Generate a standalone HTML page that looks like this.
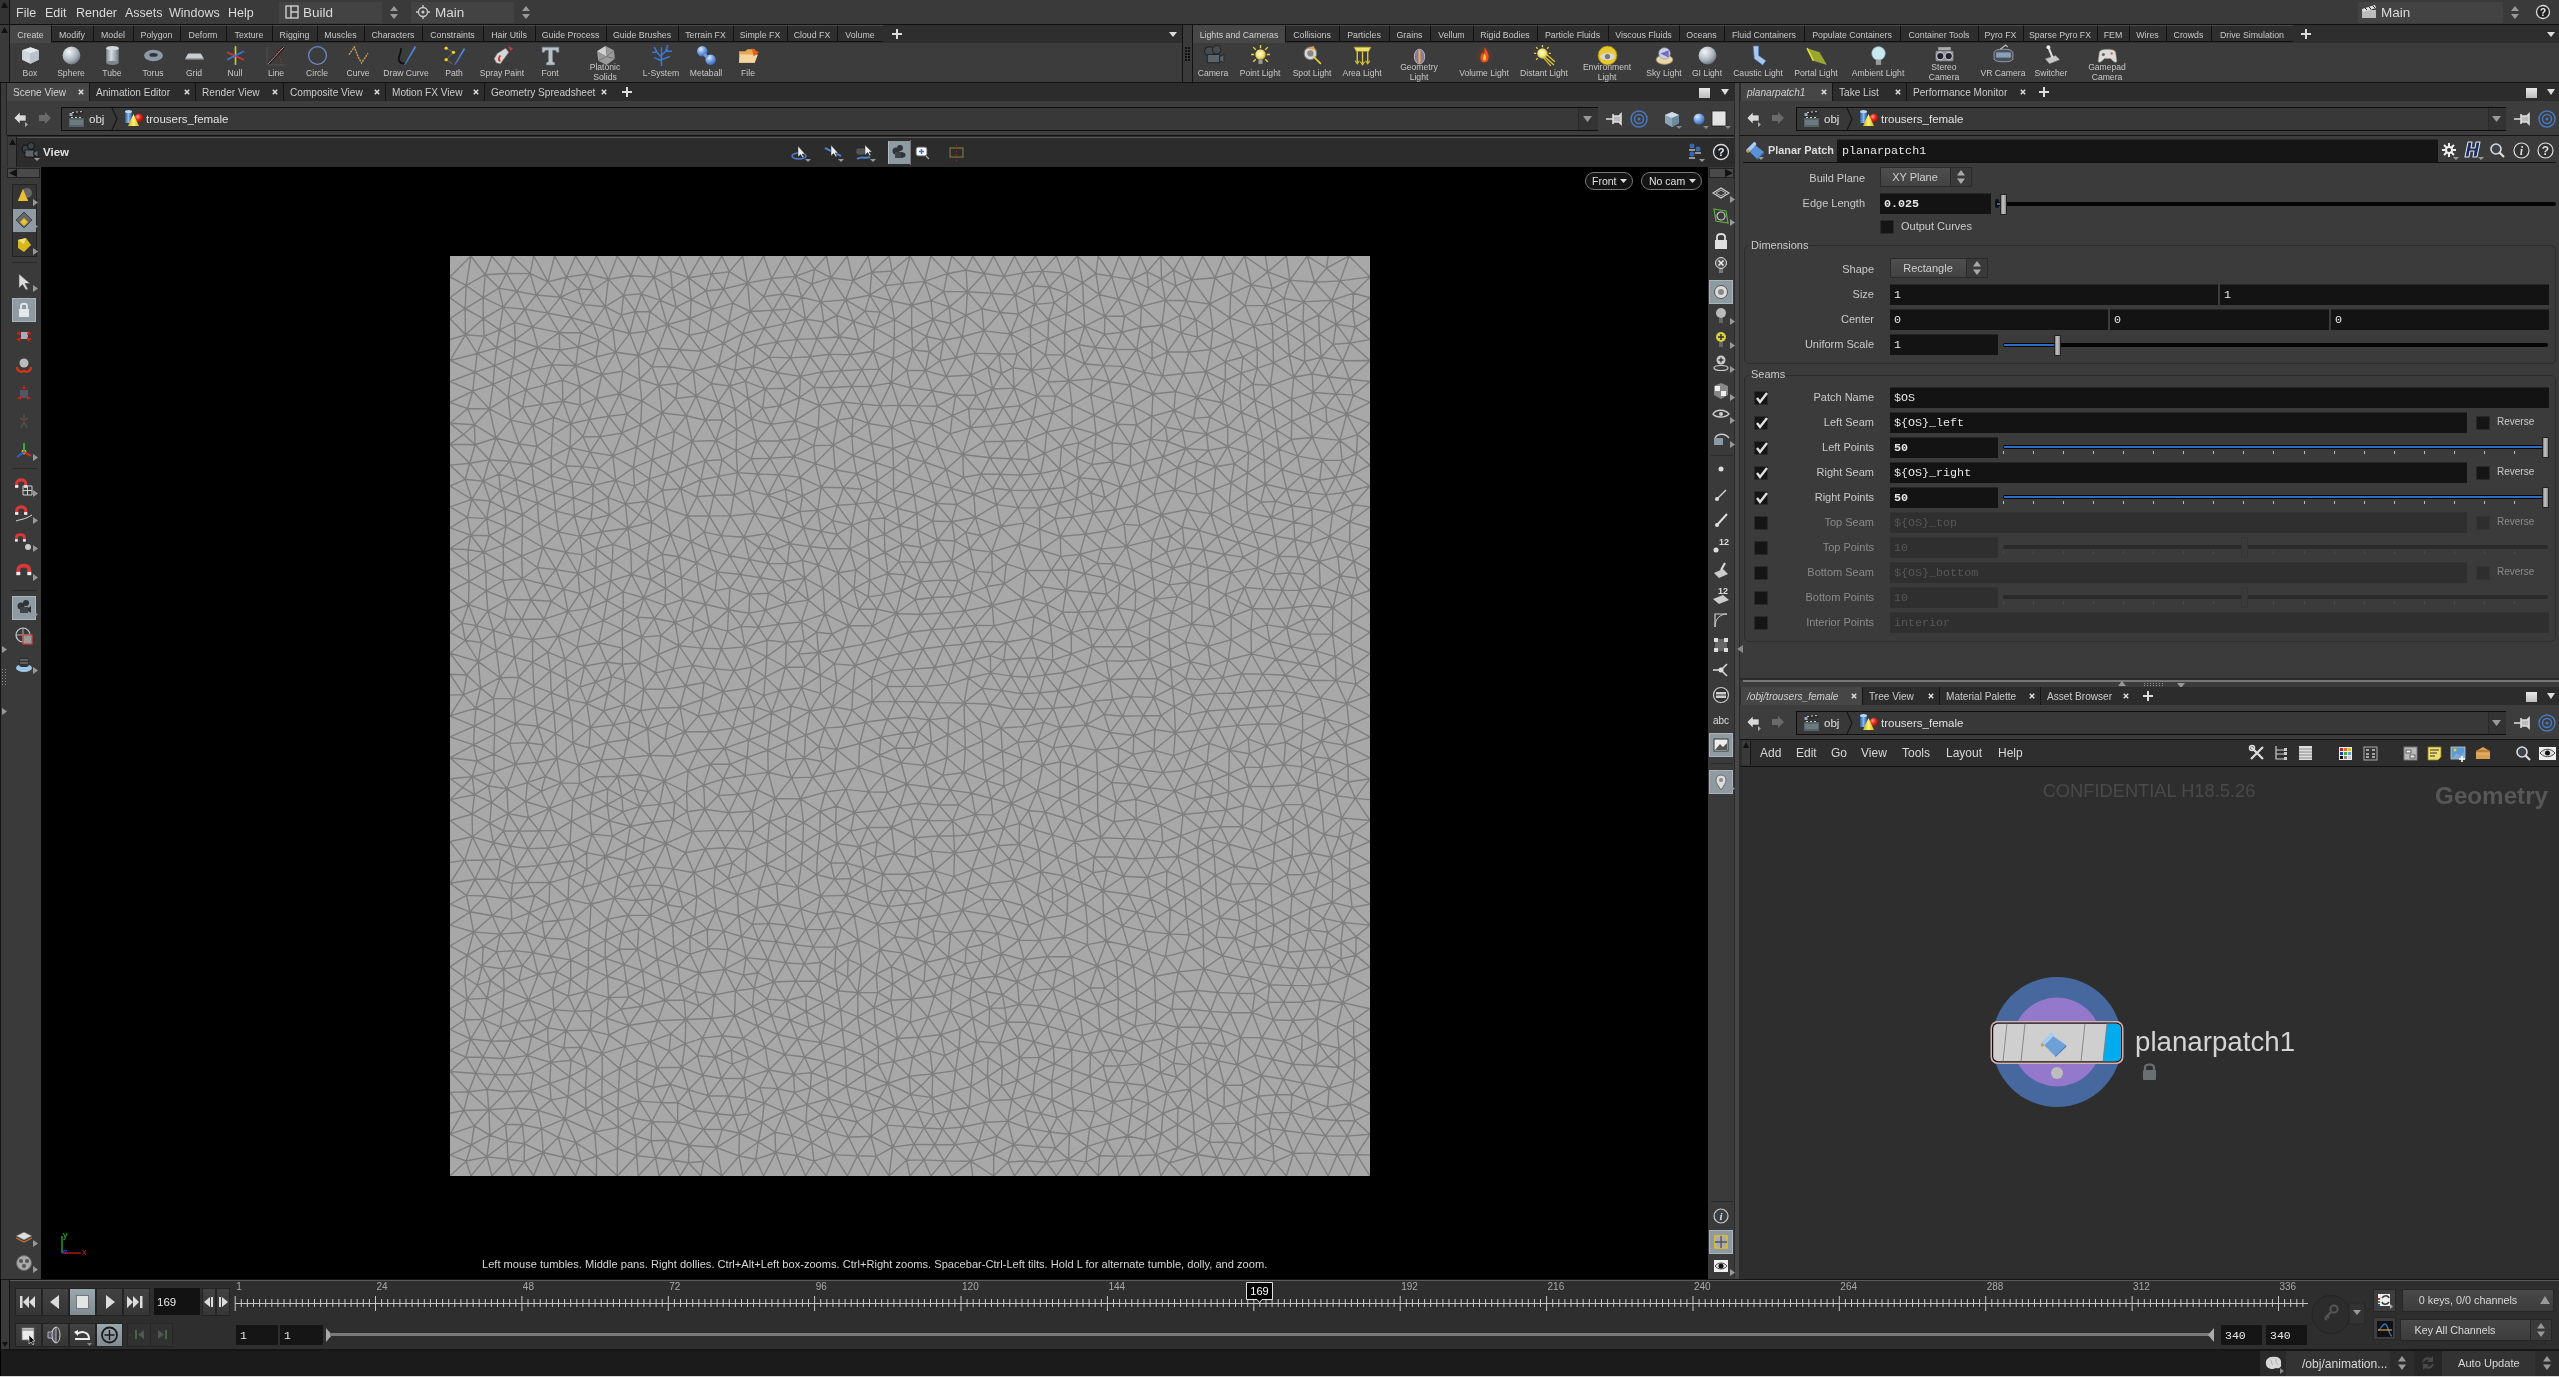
<!DOCTYPE html>
<html><head><meta charset="utf-8"><style>
html,body{margin:0;padding:0}
body{width:2559px;height:1377px;overflow:hidden;background:#3a3a3a;position:relative;font-family:"Liberation Sans",sans-serif}
.a{position:absolute}
.t{position:absolute;white-space:nowrap;font-family:"Liberation Sans",sans-serif}
.m{font-family:"Liberation Mono",monospace}
svg{position:absolute;overflow:visible}
#root{position:absolute;left:0;top:0;width:2559px;height:1377px;will-change:transform}
</style></head><body><div id="root">
<svg width="0" height="0" style="position:absolute"><defs>
<radialGradient id="gs" cx="0.35" cy="0.3" r="0.8"><stop offset="0" stop-color="#f4f6f8"/><stop offset="0.6" stop-color="#a9b3bd"/><stop offset="1" stop-color="#5d6670"/></radialGradient>
<radialGradient id="gb" cx="0.35" cy="0.3" r="0.8"><stop offset="0" stop-color="#dfeaff"/><stop offset="0.5" stop-color="#6f9ee0"/><stop offset="1" stop-color="#2f5ca8"/></radialGradient>
<radialGradient id="gy" cx="0.45" cy="0.45" r="0.6"><stop offset="0" stop-color="#fffde0"/><stop offset="0.6" stop-color="#efe070"/><stop offset="1" stop-color="#b09a20"/></radialGradient>
<linearGradient id="gc" x1="0" x2="1"><stop offset="0" stop-color="#7d8892"/><stop offset="0.4" stop-color="#d8dde2"/><stop offset="1" stop-color="#6e7780"/></linearGradient>
</defs></svg><div class="a" style="left:0px;top:0px;width:2559px;height:24px;background:#3a3a3a"></div><div class="a" style="left:0px;top:0px;width:9px;height:24px;background:#333"></div><div class="a" style="left:9px;top:0px;width:1px;height:24px;background:#111"></div><svg style="left:1px;top:2px" width="7" height="6"><path d="M3.5 0L7 6H0Z" fill="#111"/></svg><div class="t" style="left:16px;top:4.5px;height:17px;line-height:17px;font-size:12.5px;color:#dadada;">File</div><div class="t" style="left:45px;top:4.5px;height:17px;line-height:17px;font-size:12.5px;color:#dadada;">Edit</div><div class="t" style="left:76px;top:4.5px;height:17px;line-height:17px;font-size:12.5px;color:#dadada;">Render</div><div class="t" style="left:125px;top:4.5px;height:17px;line-height:17px;font-size:12.5px;color:#dadada;">Assets</div><div class="t" style="left:169px;top:4.5px;height:17px;line-height:17px;font-size:12.5px;color:#dadada;">Windows</div><div class="t" style="left:228px;top:4.5px;height:17px;line-height:17px;font-size:12.5px;color:#dadada;">Help</div><div class="a" style="left:279px;top:2px;width:126px;height:21px;background:#434343"></div><div class="a" style="left:382px;top:2px;width:23px;height:21px;background:#3a3a3a"></div><svg style="left:390px;top:6px" width="8" height="13"><path d="M4 0L8 5H0ZM4 13L8 8H0Z" fill="#999"/></svg><div class="t" style="left:303px;top:3.5px;height:18px;line-height:18px;font-size:13.5px;color:#dadada;">Build</div><svg style="left:285px;top:5px" width="14" height="14"><rect x="1" y="1" width="12" height="12" fill="none" stroke="#ccc" stroke-width="1.4"/><path d="M6 1V13M6 7H13" stroke="#ccc" stroke-width="1.4"/></svg><div class="a" style="left:411px;top:2px;width:126px;height:21px;background:#434343"></div><div class="a" style="left:514px;top:2px;width:23px;height:21px;background:#3a3a3a"></div><svg style="left:522px;top:6px" width="8" height="13"><path d="M4 0L8 5H0ZM4 13L8 8H0Z" fill="#999"/></svg><div class="t" style="left:435px;top:3.5px;height:18px;line-height:18px;font-size:13.5px;color:#dadada;">Main</div><svg style="left:416px;top:5px" width="14" height="14"><circle cx="7" cy="7" r="4.5" fill="none" stroke="#ccc" stroke-width="1.3"/><circle cx="7" cy="7" r="1.5" fill="#ccc"/><path d="M7 0V3M7 11V14M0 7H3M11 7H14" stroke="#ccc" stroke-width="1.3"/></svg><div class="a" style="left:2358px;top:2px;width:168px;height:21px;background:#434343"></div><div class="a" style="left:2503px;top:2px;width:23px;height:21px;background:#3a3a3a"></div><svg style="left:2511px;top:6px" width="8" height="13"><path d="M4 0L8 5H0ZM4 13L8 8H0Z" fill="#999"/></svg><div class="t" style="left:2381px;top:3.5px;height:18px;line-height:18px;font-size:13.5px;color:#dadada;">Main</div><svg style="left:2361px;top:4px" width="16" height="15"><rect x="1" y="6" width="14" height="8" fill="#bbb"/><path d="M1 5L14 1L15 4L2 8Z" fill="#ddd"/><path d="M4 4L6 6M8 3L10 5M12 2L14 4" stroke="#333" stroke-width="1"/></svg><svg style="left:2535px;top:4px" width="16" height="16"><circle cx="8" cy="8" r="6.5" fill="#222" stroke="#ddd" stroke-width="1.3"/><text x="8" y="12" font-size="10" font-weight="bold" fill="#eee" text-anchor="middle" font-family="Liberation Sans">?</text></svg><div class="a" style="left:0px;top:24px;width:2559px;height:1px;background:#111"></div><div class="a" style="left:0px;top:25px;width:2559px;height:57px;background:#3c3c3c"></div><div class="a" style="left:0px;top:25px;width:9px;height:57px;background:#3a3a3a"></div><div class="a" style="left:9px;top:25px;width:1px;height:57px;background:#111"></div><svg style="left:1px;top:27px" width="7" height="6"><path d="M3.5 0L7 6H0Z" fill="#111"/></svg><div class="a" style="left:10px;top:25px;width:1172px;height:18px;background:#2e2e2e"></div><div class="a" style="left:10px;top:25px;width:41px;height:18px;background:#474747"></div><div class="t" style="left:-69.5px;width:200px;text-align:center;top:29.0px;height:12px;line-height:12px;font-size:8.8px;color:#d0d0d0;">Create</div><div class="a" style="left:51px;top:25px;width:42px;height:17px;background:#2e2e2e;border-left:1px solid #111;border-top:1px solid #4a4a4a;border-bottom:1px solid #111;box-sizing:border-box"></div><div class="t" style="left:-28.0px;width:200px;text-align:center;top:29.0px;height:12px;line-height:12px;font-size:8.8px;color:#c8c8c8;">Modify</div><div class="a" style="left:93px;top:25px;width:40px;height:17px;background:#2e2e2e;border-left:1px solid #111;border-top:1px solid #4a4a4a;border-bottom:1px solid #111;box-sizing:border-box"></div><div class="t" style="left:13.0px;width:200px;text-align:center;top:29.0px;height:12px;line-height:12px;font-size:8.8px;color:#c8c8c8;">Model</div><div class="a" style="left:133px;top:25px;width:47px;height:17px;background:#2e2e2e;border-left:1px solid #111;border-top:1px solid #4a4a4a;border-bottom:1px solid #111;box-sizing:border-box"></div><div class="t" style="left:56.5px;width:200px;text-align:center;top:29.0px;height:12px;line-height:12px;font-size:8.8px;color:#c8c8c8;">Polygon</div><div class="a" style="left:180px;top:25px;width:46px;height:17px;background:#2e2e2e;border-left:1px solid #111;border-top:1px solid #4a4a4a;border-bottom:1px solid #111;box-sizing:border-box"></div><div class="t" style="left:103.0px;width:200px;text-align:center;top:29.0px;height:12px;line-height:12px;font-size:8.8px;color:#c8c8c8;">Deform</div><div class="a" style="left:226px;top:25px;width:46px;height:17px;background:#2e2e2e;border-left:1px solid #111;border-top:1px solid #4a4a4a;border-bottom:1px solid #111;box-sizing:border-box"></div><div class="t" style="left:149.0px;width:200px;text-align:center;top:29.0px;height:12px;line-height:12px;font-size:8.8px;color:#c8c8c8;">Texture</div><div class="a" style="left:272px;top:25px;width:45px;height:17px;background:#2e2e2e;border-left:1px solid #111;border-top:1px solid #4a4a4a;border-bottom:1px solid #111;box-sizing:border-box"></div><div class="t" style="left:194.5px;width:200px;text-align:center;top:29.0px;height:12px;line-height:12px;font-size:8.8px;color:#c8c8c8;">Rigging</div><div class="a" style="left:317px;top:25px;width:47px;height:17px;background:#2e2e2e;border-left:1px solid #111;border-top:1px solid #4a4a4a;border-bottom:1px solid #111;box-sizing:border-box"></div><div class="t" style="left:240.5px;width:200px;text-align:center;top:29.0px;height:12px;line-height:12px;font-size:8.8px;color:#c8c8c8;">Muscles</div><div class="a" style="left:364px;top:25px;width:58px;height:17px;background:#2e2e2e;border-left:1px solid #111;border-top:1px solid #4a4a4a;border-bottom:1px solid #111;box-sizing:border-box"></div><div class="t" style="left:293.0px;width:200px;text-align:center;top:29.0px;height:12px;line-height:12px;font-size:8.8px;color:#c8c8c8;">Characters</div><div class="a" style="left:422px;top:25px;width:61px;height:17px;background:#2e2e2e;border-left:1px solid #111;border-top:1px solid #4a4a4a;border-bottom:1px solid #111;box-sizing:border-box"></div><div class="t" style="left:352.5px;width:200px;text-align:center;top:29.0px;height:12px;line-height:12px;font-size:8.8px;color:#c8c8c8;">Constraints</div><div class="a" style="left:483px;top:25px;width:52px;height:17px;background:#2e2e2e;border-left:1px solid #111;border-top:1px solid #4a4a4a;border-bottom:1px solid #111;box-sizing:border-box"></div><div class="t" style="left:409.0px;width:200px;text-align:center;top:29.0px;height:12px;line-height:12px;font-size:8.8px;color:#c8c8c8;">Hair Utils</div><div class="a" style="left:535px;top:25px;width:71px;height:17px;background:#2e2e2e;border-left:1px solid #111;border-top:1px solid #4a4a4a;border-bottom:1px solid #111;box-sizing:border-box"></div><div class="t" style="left:470.5px;width:200px;text-align:center;top:29.0px;height:12px;line-height:12px;font-size:8.8px;color:#c8c8c8;">Guide Process</div><div class="a" style="left:606px;top:25px;width:72px;height:17px;background:#2e2e2e;border-left:1px solid #111;border-top:1px solid #4a4a4a;border-bottom:1px solid #111;box-sizing:border-box"></div><div class="t" style="left:542.0px;width:200px;text-align:center;top:29.0px;height:12px;line-height:12px;font-size:8.8px;color:#c8c8c8;">Guide Brushes</div><div class="a" style="left:678px;top:25px;width:55px;height:17px;background:#2e2e2e;border-left:1px solid #111;border-top:1px solid #4a4a4a;border-bottom:1px solid #111;box-sizing:border-box"></div><div class="t" style="left:605.5px;width:200px;text-align:center;top:29.0px;height:12px;line-height:12px;font-size:8.8px;color:#c8c8c8;">Terrain FX</div><div class="a" style="left:733px;top:25px;width:54px;height:17px;background:#2e2e2e;border-left:1px solid #111;border-top:1px solid #4a4a4a;border-bottom:1px solid #111;box-sizing:border-box"></div><div class="t" style="left:660.0px;width:200px;text-align:center;top:29.0px;height:12px;line-height:12px;font-size:8.8px;color:#c8c8c8;">Simple FX</div><div class="a" style="left:787px;top:25px;width:50px;height:17px;background:#2e2e2e;border-left:1px solid #111;border-top:1px solid #4a4a4a;border-bottom:1px solid #111;box-sizing:border-box"></div><div class="t" style="left:712.0px;width:200px;text-align:center;top:29.0px;height:12px;line-height:12px;font-size:8.8px;color:#c8c8c8;">Cloud FX</div><div class="a" style="left:837px;top:25px;width:46px;height:17px;background:#2e2e2e;border-left:1px solid #111;border-top:1px solid #4a4a4a;border-bottom:1px solid #111;box-sizing:border-box"></div><div class="t" style="left:760.0px;width:200px;text-align:center;top:29.0px;height:12px;line-height:12px;font-size:8.8px;color:#c8c8c8;">Volume</div><svg style="left:892px;top:29px" width="10" height="10"><path d="M5 0V10M0 5H10" stroke="#ddd" stroke-width="2"/></svg><svg style="left:1169px;top:32px" width="8" height="5"><path d="M0 0H8L4 5Z" fill="#ddd"/></svg><div class="a" style="left:1182px;top:25px;width:1px;height:57px;background:#111"></div><div class="a" style="left:1183px;top:25px;width:9px;height:57px;background:#3a3a3a"></div><svg style="left:1184px;top:46px" width="7" height="16"><rect x="1" y="1" width="2" height="2" fill="#111"/><rect x="1" y="4" width="2" height="2" fill="#111"/><rect x="1" y="7" width="2" height="2" fill="#111"/><rect x="1" y="10" width="2" height="2" fill="#111"/><rect x="1" y="13" width="2" height="2" fill="#111"/><rect x="4" y="1" width="2" height="2" fill="#111"/><rect x="4" y="4" width="2" height="2" fill="#111"/><rect x="4" y="7" width="2" height="2" fill="#111"/><rect x="4" y="10" width="2" height="2" fill="#111"/><rect x="4" y="13" width="2" height="2" fill="#111"/></svg><div class="a" style="left:1192px;top:25px;width:1px;height:57px;background:#111"></div><div class="a" style="left:1193px;top:25px;width:1366px;height:18px;background:#2e2e2e"></div><div class="a" style="left:1193px;top:25px;width:92px;height:18px;background:#474747"></div><div class="t" style="left:1139.0px;width:200px;text-align:center;top:29.0px;height:12px;line-height:12px;font-size:8.8px;color:#d0d0d0;">Lights and Cameras</div><div class="a" style="left:1285px;top:25px;width:54px;height:17px;background:#2e2e2e;border-left:1px solid #111;border-top:1px solid #4a4a4a;border-bottom:1px solid #111;box-sizing:border-box"></div><div class="t" style="left:1212.0px;width:200px;text-align:center;top:29.0px;height:12px;line-height:12px;font-size:8.8px;color:#c8c8c8;">Collisions</div><div class="a" style="left:1339px;top:25px;width:50px;height:17px;background:#2e2e2e;border-left:1px solid #111;border-top:1px solid #4a4a4a;border-bottom:1px solid #111;box-sizing:border-box"></div><div class="t" style="left:1264.0px;width:200px;text-align:center;top:29.0px;height:12px;line-height:12px;font-size:8.8px;color:#c8c8c8;">Particles</div><div class="a" style="left:1389px;top:25px;width:41px;height:17px;background:#2e2e2e;border-left:1px solid #111;border-top:1px solid #4a4a4a;border-bottom:1px solid #111;box-sizing:border-box"></div><div class="t" style="left:1309.5px;width:200px;text-align:center;top:29.0px;height:12px;line-height:12px;font-size:8.8px;color:#c8c8c8;">Grains</div><div class="a" style="left:1430px;top:25px;width:43px;height:17px;background:#2e2e2e;border-left:1px solid #111;border-top:1px solid #4a4a4a;border-bottom:1px solid #111;box-sizing:border-box"></div><div class="t" style="left:1351.5px;width:200px;text-align:center;top:29.0px;height:12px;line-height:12px;font-size:8.8px;color:#c8c8c8;">Vellum</div><div class="a" style="left:1473px;top:25px;width:64px;height:17px;background:#2e2e2e;border-left:1px solid #111;border-top:1px solid #4a4a4a;border-bottom:1px solid #111;box-sizing:border-box"></div><div class="t" style="left:1405.0px;width:200px;text-align:center;top:29.0px;height:12px;line-height:12px;font-size:8.8px;color:#c8c8c8;">Rigid Bodies</div><div class="a" style="left:1537px;top:25px;width:71px;height:17px;background:#2e2e2e;border-left:1px solid #111;border-top:1px solid #4a4a4a;border-bottom:1px solid #111;box-sizing:border-box"></div><div class="t" style="left:1472.5px;width:200px;text-align:center;top:29.0px;height:12px;line-height:12px;font-size:8.8px;color:#c8c8c8;">Particle Fluids</div><div class="a" style="left:1608px;top:25px;width:71px;height:17px;background:#2e2e2e;border-left:1px solid #111;border-top:1px solid #4a4a4a;border-bottom:1px solid #111;box-sizing:border-box"></div><div class="t" style="left:1543.5px;width:200px;text-align:center;top:29.0px;height:12px;line-height:12px;font-size:8.8px;color:#c8c8c8;">Viscous Fluids</div><div class="a" style="left:1679px;top:25px;width:45px;height:17px;background:#2e2e2e;border-left:1px solid #111;border-top:1px solid #4a4a4a;border-bottom:1px solid #111;box-sizing:border-box"></div><div class="t" style="left:1601.5px;width:200px;text-align:center;top:29.0px;height:12px;line-height:12px;font-size:8.8px;color:#c8c8c8;">Oceans</div><div class="a" style="left:1724px;top:25px;width:80px;height:17px;background:#2e2e2e;border-left:1px solid #111;border-top:1px solid #4a4a4a;border-bottom:1px solid #111;box-sizing:border-box"></div><div class="t" style="left:1664.0px;width:200px;text-align:center;top:29.0px;height:12px;line-height:12px;font-size:8.8px;color:#c8c8c8;">Fluid Containers</div><div class="a" style="left:1804px;top:25px;width:96px;height:17px;background:#2e2e2e;border-left:1px solid #111;border-top:1px solid #4a4a4a;border-bottom:1px solid #111;box-sizing:border-box"></div><div class="t" style="left:1752.0px;width:200px;text-align:center;top:29.0px;height:12px;line-height:12px;font-size:8.8px;color:#c8c8c8;">Populate Containers</div><div class="a" style="left:1900px;top:25px;width:78px;height:17px;background:#2e2e2e;border-left:1px solid #111;border-top:1px solid #4a4a4a;border-bottom:1px solid #111;box-sizing:border-box"></div><div class="t" style="left:1839.0px;width:200px;text-align:center;top:29.0px;height:12px;line-height:12px;font-size:8.8px;color:#c8c8c8;">Container Tools</div><div class="a" style="left:1978px;top:25px;width:45px;height:17px;background:#2e2e2e;border-left:1px solid #111;border-top:1px solid #4a4a4a;border-bottom:1px solid #111;box-sizing:border-box"></div><div class="t" style="left:1900.5px;width:200px;text-align:center;top:29.0px;height:12px;line-height:12px;font-size:8.8px;color:#c8c8c8;">Pyro FX</div><div class="a" style="left:2023px;top:25px;width:74px;height:17px;background:#2e2e2e;border-left:1px solid #111;border-top:1px solid #4a4a4a;border-bottom:1px solid #111;box-sizing:border-box"></div><div class="t" style="left:1960.0px;width:200px;text-align:center;top:29.0px;height:12px;line-height:12px;font-size:8.8px;color:#c8c8c8;">Sparse Pyro FX</div><div class="a" style="left:2097px;top:25px;width:32px;height:17px;background:#2e2e2e;border-left:1px solid #111;border-top:1px solid #4a4a4a;border-bottom:1px solid #111;box-sizing:border-box"></div><div class="t" style="left:2013.0px;width:200px;text-align:center;top:29.0px;height:12px;line-height:12px;font-size:8.8px;color:#c8c8c8;">FEM</div><div class="a" style="left:2129px;top:25px;width:37px;height:17px;background:#2e2e2e;border-left:1px solid #111;border-top:1px solid #4a4a4a;border-bottom:1px solid #111;box-sizing:border-box"></div><div class="t" style="left:2047.5px;width:200px;text-align:center;top:29.0px;height:12px;line-height:12px;font-size:8.8px;color:#c8c8c8;">Wires</div><div class="a" style="left:2166px;top:25px;width:45px;height:17px;background:#2e2e2e;border-left:1px solid #111;border-top:1px solid #4a4a4a;border-bottom:1px solid #111;box-sizing:border-box"></div><div class="t" style="left:2088.5px;width:200px;text-align:center;top:29.0px;height:12px;line-height:12px;font-size:8.8px;color:#c8c8c8;">Crowds</div><div class="a" style="left:2211px;top:25px;width:82px;height:17px;background:#2e2e2e;border-left:1px solid #111;border-top:1px solid #4a4a4a;border-bottom:1px solid #111;box-sizing:border-box"></div><div class="t" style="left:2152.0px;width:200px;text-align:center;top:29.0px;height:12px;line-height:12px;font-size:8.8px;color:#c8c8c8;">Drive Simulation</div><svg style="left:2301px;top:29px" width="10" height="10"><path d="M5 0V10M0 5H10" stroke="#ddd" stroke-width="2"/></svg><svg style="left:2547px;top:32px" width="8" height="5"><path d="M0 0H8L4 5Z" fill="#ddd"/></svg><svg style="left:18.5px;top:43.5px" width="23" height="23" viewBox="0 0 22 22"><path d="M3 6L11 3L19 6L19 15L11 19L3 15Z" fill="#9aa4ae"/><path d="M3 6L11 3L19 6L11 9Z" fill="#e6eaee"/><path d="M11 9L19 6L19 15L11 19Z" fill="#b9c2ca"/><path d="M3 6L11 9L11 19L3 15Z" fill="#d0d6dc"/></svg><div class="t" style="left:-70.0px;width:200px;text-align:center;top:66.5px;height:12px;line-height:12px;font-size:8.6px;color:#c8c8c8;">Box</div><svg style="left:59.5px;top:43.5px" width="23" height="23" viewBox="0 0 22 22"><circle cx="11" cy="11" r="8.5" fill="url(#gs)"/></svg><div class="t" style="left:-29.0px;width:200px;text-align:center;top:66.5px;height:12px;line-height:12px;font-size:8.6px;color:#c8c8c8;">Sphere</div><svg style="left:100.5px;top:43.5px" width="23" height="23" viewBox="0 0 22 22"><rect x="5" y="4" width="12" height="14" fill="url(#gc)"/><ellipse cx="11" cy="18" rx="6" ry="2" fill="#7c858e"/><ellipse cx="11" cy="4" rx="6" ry="2.2" fill="#cfd6dc"/></svg><div class="t" style="left:12.0px;width:200px;text-align:center;top:66.5px;height:12px;line-height:12px;font-size:8.6px;color:#c8c8c8;">Tube</div><svg style="left:141.5px;top:43.5px" width="23" height="23" viewBox="0 0 22 22"><ellipse cx="11" cy="11" rx="9" ry="5.5" fill="#8c98a4"/><ellipse cx="11" cy="10.5" rx="4" ry="1.8" fill="#2f3438"/></svg><div class="t" style="left:53.0px;width:200px;text-align:center;top:66.5px;height:12px;line-height:12px;font-size:8.6px;color:#c8c8c8;">Torus</div><svg style="left:182.5px;top:43.5px" width="23" height="23" viewBox="0 0 22 22"><path d="M5 9H17L20 14H2Z" fill="#c8cdd2"/><path d="M2 14H20V15H2Z" fill="#8a9096"/></svg><div class="t" style="left:94.0px;width:200px;text-align:center;top:66.5px;height:12px;line-height:12px;font-size:8.6px;color:#c8c8c8;">Grid</div><svg style="left:223.5px;top:43.5px" width="23" height="23" viewBox="0 0 22 22"><path d="M11 2V20" stroke="#c8c830" stroke-width="1.6"/><path d="M3 8L19 15" stroke="#e03030" stroke-width="1.6"/><path d="M3 15L19 7" stroke="#3a78d8" stroke-width="1.6"/></svg><div class="t" style="left:135.0px;width:200px;text-align:center;top:66.5px;height:12px;line-height:12px;font-size:8.6px;color:#c8c8c8;">Null</div><svg style="left:264.5px;top:43.5px" width="23" height="23" viewBox="0 0 22 22"><path d="M3 19L18 3" stroke="#111" stroke-width="2.5"/><path d="M3 19L18 3" stroke="#ccc" stroke-width="0.8"/><path d="M4 17L16 4M14 12L16 19" stroke="#d03030" stroke-width="1" stroke-dasharray="1 1.5"/><path d="M2 3V20H20" stroke="#555" stroke-width="0.8" fill="none"/></svg><div class="t" style="left:176.0px;width:200px;text-align:center;top:66.5px;height:12px;line-height:12px;font-size:8.6px;color:#c8c8c8;">Line</div><svg style="left:305.5px;top:43.5px" width="23" height="23" viewBox="0 0 22 22"><circle cx="11" cy="11" r="8.5" fill="none" stroke="#6a8ac8" stroke-width="1.2"/></svg><div class="t" style="left:217.0px;width:200px;text-align:center;top:66.5px;height:12px;line-height:12px;font-size:8.6px;color:#c8c8c8;">Circle</div><svg style="left:346.5px;top:43.5px" width="23" height="23" viewBox="0 0 22 22"><path d="M2 10L7 3L11 13L14 18L20 9" stroke="#e0a030" stroke-width="1.4" stroke-dasharray="1.5 1.2" fill="none"/><path d="M2 10L7 3L11 13L14 18L20 9" stroke="#999" stroke-width="0.5" fill="none"/></svg><div class="t" style="left:258.0px;width:200px;text-align:center;top:66.5px;height:12px;line-height:12px;font-size:8.6px;color:#c8c8c8;">Curve</div><svg style="left:394.5px;top:43.5px" width="23" height="23" viewBox="0 0 22 22"><path d="M5 4C8 6 2 12 4 16S9 18 9 19" stroke="#111" stroke-width="1.8" fill="none"/><path d="M19 2L10 18L9 20L11 18L20 3Z" fill="#6a9ee8" stroke="#3b6cb8" stroke-width="0.6"/></svg><div class="t" style="left:306.0px;width:200px;text-align:center;top:66.5px;height:12px;line-height:12px;font-size:8.6px;color:#c8c8c8;">Draw Curve</div><svg style="left:442.5px;top:43.5px" width="23" height="23" viewBox="0 0 22 22"><path d="M3 4L10 8L3 15L9 19" stroke="#777" stroke-width="0.8" fill="none"/><circle cx="3" cy="4" r="1.6" fill="#f0d020"/><circle cx="10" cy="8" r="1.6" fill="#f0d020"/><circle cx="3" cy="15" r="1.6" fill="#f0d020"/><path d="M20 4L12 18L11 20L13 18L21 5Z" fill="#6a9ee8" stroke="#3b6cb8" stroke-width="0.6"/></svg><div class="t" style="left:354.0px;width:200px;text-align:center;top:66.5px;height:12px;line-height:12px;font-size:8.6px;color:#c8c8c8;">Path</div><svg style="left:490.5px;top:43.5px" width="23" height="23" viewBox="0 0 22 22"><path d="M6 9L14 4L17 8L9 19L5 18L3 14Z" fill="#d6d6d6" stroke="#777" stroke-width="0.6"/><path d="M9 11C7 13 7 16 9 16" stroke="#d02020" stroke-width="1.6" fill="none"/><path d="M16 2L21 4L19 7Z" fill="#e04040" opacity="0.8"/></svg><div class="t" style="left:402.0px;width:200px;text-align:center;top:66.5px;height:12px;line-height:12px;font-size:8.6px;color:#c8c8c8;">Spray Paint</div><svg style="left:538.5px;top:43.5px" width="23" height="23" viewBox="0 0 22 22"><path d="M3 3H19V8H17L16 6H13V17L15 18V20H7V18L9 17V6H6L5 8H3Z" fill="#b8c0c8" stroke="#79818a" stroke-width="0.6"/></svg><div class="t" style="left:450.0px;width:200px;text-align:center;top:66.5px;height:12px;line-height:12px;font-size:8.6px;color:#c8c8c8;">Font</div><svg style="left:593.5px;top:43.5px" width="23" height="23" viewBox="0 0 22 22"><path d="M11 2L19 6L20 14L12 20L4 16L3 7Z" fill="#9a9a9a"/><path d="M11 2L12 12L19 6M12 12L20 14M12 12L4 16M12 12L3 7" stroke="#666" stroke-width="0.7" fill="none"/><path d="M3 7L11 2L12 12Z" fill="#d0d0d0"/></svg><div class="t" style="left:565px;width:80px;top:62px;text-align:center;font-size:8.6px;line-height:10px;color:#c8c8c8">Platonic<br>Solids</div><svg style="left:649.5px;top:43.5px" width="23" height="23" viewBox="0 0 22 22"><path d="M11 21V10M11 13L5 6M11 11L17 5M7 8L4 3M7 8L2 8M15 7L17 1M15 7L21 7M11 10L11 3M11 16L4 13M11 15L19 12" stroke="#3b7ad0" stroke-width="1.4" fill="none"/></svg><div class="t" style="left:561.0px;width:200px;text-align:center;top:66.5px;height:12px;line-height:12px;font-size:8.6px;color:#c8c8c8;">L-System</div><svg style="left:694.5px;top:43.5px" width="23" height="23" viewBox="0 0 22 22"><circle cx="7" cy="7" r="5" fill="url(#gb)"/><circle cx="15" cy="15" r="5" fill="url(#gb)"/><path d="M9 10L12 13" stroke="#6f9ee0" stroke-width="3"/></svg><div class="t" style="left:606.0px;width:200px;text-align:center;top:66.5px;height:12px;line-height:12px;font-size:8.6px;color:#c8c8c8;">Metaball</div><svg style="left:736.5px;top:43.5px" width="23" height="23" viewBox="0 0 22 22"><path d="M2 7H8L10 5H17V18H2Z" fill="#e8a850"/><path d="M3 10H20L17 18H2Z" fill="#f5d6a0"/><path d="M14 4L21 8L16 12Z" fill="#e86020"/></svg><div class="t" style="left:648.0px;width:200px;text-align:center;top:66.5px;height:12px;line-height:12px;font-size:8.6px;color:#c8c8c8;">File</div><svg style="left:1201.5px;top:43.5px" width="23" height="23" viewBox="0 0 22 22"><circle cx="7" cy="7" r="4.5" fill="#444c52" stroke="#222" stroke-width="1"/><circle cx="14" cy="5.5" r="4" fill="#444c52" stroke="#222" stroke-width="1"/><rect x="5" y="10" width="12" height="8" rx="1" fill="#59636b" stroke="#222"/><path d="M17 12L21 10V18L17 16Z" fill="#59636b" stroke="#222" stroke-width="0.8"/></svg><div class="t" style="left:1113.0px;width:200px;text-align:center;top:66.5px;height:12px;line-height:12px;font-size:8.6px;color:#c8c8c8;">Camera</div><svg style="left:1248.5px;top:43.5px" width="23" height="23" viewBox="0 0 22 22"><circle cx="11" cy="10" r="5" fill="url(#gy)"/><rect x="9" y="15" width="4" height="4" fill="#999"/><path d="M11 1V4M2 10H5M17 10H20M4 3L6.5 5.5M18 3L15.5 5.5M4 17L6.5 14.5M18 17L15.5 14.5" stroke="#e8d040" stroke-width="1.3"/></svg><div class="t" style="left:1160.0px;width:200px;text-align:center;top:66.5px;height:12px;line-height:12px;font-size:8.6px;color:#c8c8c8;">Point Light</div><svg style="left:1300.5px;top:43.5px" width="23" height="23" viewBox="0 0 22 22"><circle cx="9" cy="9" r="6" fill="#d8d8d8" stroke="#777" stroke-width="1"/><path d="M6 4L12 2L14 6" fill="#e8a040"/><path d="M11 11L19 19" stroke="#e8d040" stroke-width="1.6"/><circle cx="9" cy="9" r="3" fill="#888"/></svg><div class="t" style="left:1212.0px;width:200px;text-align:center;top:66.5px;height:12px;line-height:12px;font-size:8.6px;color:#c8c8c8;">Spot Light</div><svg style="left:1350.5px;top:43.5px" width="23" height="23" viewBox="0 0 22 22"><path d="M3 3H19L17 7H5Z" fill="#f0e070" stroke="#b09a20" stroke-width="0.6"/><path d="M6 7V18M11 7V19M16 7V18" stroke="#e0c830" stroke-width="1.3"/><path d="M4 16L6 19L8 16M9 17L11 20L13 17M14 16L16 19L18 16" stroke="#e0c830" stroke-width="1" fill="none"/></svg><div class="t" style="left:1262.0px;width:200px;text-align:center;top:66.5px;height:12px;line-height:12px;font-size:8.6px;color:#c8c8c8;">Area Light</div><svg style="left:1407.5px;top:43.5px" width="23" height="23" viewBox="0 0 22 22"><ellipse cx="11" cy="12" rx="5" ry="7" fill="#8a7a9a"/><path d="M11 6V18" stroke="#e0b040" stroke-width="2"/><ellipse cx="11" cy="12" rx="5" ry="7" fill="none" stroke="#c8c0d0" stroke-width="0.8"/></svg><div class="t" style="left:1379px;width:80px;top:62px;text-align:center;font-size:8.6px;line-height:10px;color:#c8c8c8">Geometry<br>Light</div><svg style="left:1472.5px;top:43.5px" width="23" height="23" viewBox="0 0 22 22"><circle cx="11" cy="11" r="8" fill="#5a3a30" opacity="0.6"/><path d="M11 3C15 8 16 12 14 16C12 18 9 18 8 16C6 13 8 10 9 8C10 10 11 11 11 3Z" fill="#f05020"/><path d="M11 9C13 12 13 15 11 16C9 15 10 12 11 9Z" fill="#ffd040"/></svg><div class="t" style="left:1384.0px;width:200px;text-align:center;top:66.5px;height:12px;line-height:12px;font-size:8.6px;color:#c8c8c8;">Volume Light</div><svg style="left:1532.5px;top:43.5px" width="23" height="23" viewBox="0 0 22 22"><circle cx="9" cy="9" r="5" fill="url(#gy)"/><path d="M9 1V3M1 9H3M15 9H17M3 3L4.5 4.5M15 3L13.5 4.5M3 15L4.5 13.5" stroke="#e8d040" stroke-width="1.2"/><path d="M11 12L20 20M13 10L21 17M10 13L17 21" stroke="#e0c830" stroke-width="1.2"/></svg><div class="t" style="left:1444.0px;width:200px;text-align:center;top:66.5px;height:12px;line-height:12px;font-size:8.6px;color:#c8c8c8;">Distant Light</div><svg style="left:1595.5px;top:43.5px" width="23" height="23" viewBox="0 0 22 22"><circle cx="11" cy="11" r="9" fill="#e8c830" stroke="#a08a10" stroke-width="0.8"/><ellipse cx="11" cy="12" rx="7" ry="3.5" fill="#d8d8d8"/><circle cx="11" cy="12" r="2.5" fill="#777"/></svg><div class="t" style="left:1567px;width:80px;top:62px;text-align:center;font-size:8.6px;line-height:10px;color:#c8c8c8">Environment<br>Light</div><svg style="left:1652.5px;top:43.5px" width="23" height="23" viewBox="0 0 22 22"><ellipse cx="11" cy="15" rx="8" ry="4.5" fill="#e8d8a8" stroke="#988a58" stroke-width="0.8"/><circle cx="11" cy="9" r="5.5" fill="#c8d0e8" stroke="#8890a8" stroke-width="0.6"/><path d="M7 9L15 6L15 13Z" fill="#7a68b8"/></svg><div class="t" style="left:1564.0px;width:200px;text-align:center;top:66.5px;height:12px;line-height:12px;font-size:8.6px;color:#c8c8c8;">Sky Light</div><svg style="left:1695.5px;top:43.5px" width="23" height="23" viewBox="0 0 22 22"><circle cx="11" cy="11" r="8.5" fill="url(#gs)"/></svg><div class="t" style="left:1607.0px;width:200px;text-align:center;top:66.5px;height:12px;line-height:12px;font-size:8.6px;color:#c8c8c8;">GI Light</div><svg style="left:1746.5px;top:43.5px" width="23" height="23" viewBox="0 0 22 22"><path d="M6 2H11V11L18 16L15 20L7 14Z" fill="#a8c8f0" stroke="#5888c0" stroke-width="0.7"/></svg><div class="t" style="left:1658.0px;width:200px;text-align:center;top:66.5px;height:12px;line-height:12px;font-size:8.6px;color:#c8c8c8;">Caustic Light</div><svg style="left:1804.5px;top:43.5px" width="23" height="23" viewBox="0 0 22 22"><path d="M2 4L14 8L21 20L8 16Z" fill="#a8b830" opacity="0.85"/><path d="M2 4L8 16" stroke="#e8e030" stroke-width="1.5"/></svg><div class="t" style="left:1716.0px;width:200px;text-align:center;top:66.5px;height:12px;line-height:12px;font-size:8.6px;color:#c8c8c8;">Portal Light</div><svg style="left:1866.5px;top:43.5px" width="23" height="23" viewBox="0 0 22 22"><circle cx="11" cy="9" r="6.5" fill="#c8e8f0" stroke="#80a0b0" stroke-width="0.6"/><rect x="8.5" y="15" width="5" height="5" fill="#999"/></svg><div class="t" style="left:1778.0px;width:200px;text-align:center;top:66.5px;height:12px;line-height:12px;font-size:8.6px;color:#c8c8c8;">Ambient Light</div><svg style="left:1932.5px;top:43.5px" width="23" height="23" viewBox="0 0 22 22"><rect x="2" y="6" width="18" height="11" rx="2" fill="#8a9298" stroke="#333" stroke-width="0.8"/><circle cx="7" cy="11.5" r="3.5" fill="#223" stroke="#ccc" stroke-width="1"/><circle cx="15" cy="11.5" r="3.5" fill="#223" stroke="#ccc" stroke-width="1"/><rect x="5" y="3" width="12" height="3" fill="#aaa"/></svg><div class="t" style="left:1904px;width:80px;top:62px;text-align:center;font-size:8.6px;line-height:10px;color:#c8c8c8">Stereo<br>Camera</div><svg style="left:1991.5px;top:43.5px" width="23" height="23" viewBox="0 0 22 22"><path d="M2 9C2 6 5 5 11 5S20 6 20 9V14C20 16 17 17 11 17S2 16 2 14Z" fill="#4a5058" stroke="#aab" stroke-width="0.8"/><path d="M4 8H18V13H4Z" fill="#8aa0b8"/><path d="M8 5L13 1L15 3" stroke="#bbb" stroke-width="1.2" fill="none"/></svg><div class="t" style="left:1903.0px;width:200px;text-align:center;top:66.5px;height:12px;line-height:12px;font-size:8.6px;color:#c8c8c8;">VR Camera</div><svg style="left:2039.5px;top:43.5px" width="23" height="23" viewBox="0 0 22 22"><path d="M5 14L15 11L19 15L9 19Z" fill="#c8c8c8" stroke="#777" stroke-width="0.6"/><path d="M12 13L8 3" stroke="#ddd" stroke-width="2"/><circle cx="8" cy="3" r="1.8" fill="#eee"/></svg><div class="t" style="left:1951.0px;width:200px;text-align:center;top:66.5px;height:12px;line-height:12px;font-size:8.6px;color:#c8c8c8;">Switcher</div><svg style="left:2095.5px;top:43.5px" width="23" height="23" viewBox="0 0 22 22"><path d="M3 9C3 6 6 5 11 5S19 6 19 9L20 16C20 18 18 18 16 16L14 14H8L6 16C4 18 2 18 2 16Z" fill="#dcdcdc" stroke="#777" stroke-width="0.6"/><circle cx="15" cy="9" r="1.2" fill="#e07030"/><circle cx="7" cy="10" r="1.5" fill="#666"/></svg><div class="t" style="left:2067px;width:80px;top:62px;text-align:center;font-size:8.6px;line-height:10px;color:#c8c8c8">Gamepad<br>Camera</div><div class="a" style="left:0px;top:82px;width:2559px;height:1px;background:#111"></div><div class="a" style="left:0px;top:83px;width:1734px;height:18px;background:#2c2c2c"></div><div class="a" style="left:0px;top:83px;width:1px;height:1196px;background:#151515"></div><div class="a" style="left:1px;top:83px;width:6px;height:1196px;background:#3a3a3a"></div><div class="a" style="left:6px;top:83px;width:1px;height:52px;background:#222"></div><div class="a" style="left:7px;top:83px;width:82px;height:18px;background:#464646"></div><div class="t" style="left:13px;top:86.0px;height:14px;line-height:14px;font-size:10.1px;color:#d0d0d0;">Scene View</div><svg style="left:78px;top:89px" width="6" height="6"><path d="M0.8 0.8L5.2 5.2M5.2 0.8L0.8 5.2" stroke="#ddd" stroke-width="1.5"/></svg><div class="a" style="left:89px;top:83px;width:106px;height:18px;background:#2c2c2c;border-left:1px solid #151515;box-sizing:border-box"></div><div class="t" style="left:96px;top:86.0px;height:14px;line-height:14px;font-size:10.1px;color:#cccccc;">Animation Editor</div><svg style="left:184px;top:89px" width="6" height="6"><path d="M0.8 0.8L5.2 5.2M5.2 0.8L0.8 5.2" stroke="#ddd" stroke-width="1.5"/></svg><div class="a" style="left:195px;top:83px;width:88px;height:18px;background:#2c2c2c;border-left:1px solid #151515;box-sizing:border-box"></div><div class="t" style="left:202px;top:86.0px;height:14px;line-height:14px;font-size:10.1px;color:#cccccc;">Render View</div><svg style="left:272px;top:89px" width="6" height="6"><path d="M0.8 0.8L5.2 5.2M5.2 0.8L0.8 5.2" stroke="#ddd" stroke-width="1.5"/></svg><div class="a" style="left:283px;top:83px;width:102px;height:18px;background:#2c2c2c;border-left:1px solid #151515;box-sizing:border-box"></div><div class="t" style="left:290px;top:86.0px;height:14px;line-height:14px;font-size:10.1px;color:#cccccc;">Composite View</div><svg style="left:374px;top:89px" width="6" height="6"><path d="M0.8 0.8L5.2 5.2M5.2 0.8L0.8 5.2" stroke="#ddd" stroke-width="1.5"/></svg><div class="a" style="left:385px;top:83px;width:99px;height:18px;background:#2c2c2c;border-left:1px solid #151515;box-sizing:border-box"></div><div class="t" style="left:392px;top:86.0px;height:14px;line-height:14px;font-size:10.1px;color:#cccccc;">Motion FX View</div><svg style="left:473px;top:89px" width="6" height="6"><path d="M0.8 0.8L5.2 5.2M5.2 0.8L0.8 5.2" stroke="#ddd" stroke-width="1.5"/></svg><div class="a" style="left:484px;top:83px;width:128px;height:18px;background:#2c2c2c;border-left:1px solid #151515;box-sizing:border-box"></div><div class="t" style="left:491px;top:86.0px;height:14px;line-height:14px;font-size:10.1px;color:#cccccc;">Geometry Spreadsheet</div><svg style="left:601px;top:89px" width="6" height="6"><path d="M0.8 0.8L5.2 5.2M5.2 0.8L0.8 5.2" stroke="#ddd" stroke-width="1.5"/></svg><svg style="left:622px;top:87px" width="10" height="10"><path d="M5 0V10M0 5H10" stroke="#ddd" stroke-width="2"/></svg><div class="a" style="left:1699px;top:88px;width:11px;height:10px;background:linear-gradient(#e8e8e8,#bdbdbd)"></div><svg style="left:1721px;top:89px" width="8" height="6"><path d="M0 0H8L4 6Z" fill="#ddd"/></svg><div class="a" style="left:7px;top:101px;width:1727px;height:34px;background:#3d3d3d"></div><svg style="left:13px;top:111px" width="18" height="17"><path d="M1 7L7 1V4H13V10H7V13Z" fill="#d8d8d8" stroke="#333" stroke-width="0.6"/><path d="M12 11L15 13.5L12 16Z" fill="#aaa"/></svg><svg style="left:38px;top:111px" width="14" height="14"><path d="M13 7L7 1V4H1V10H7V13Z" fill="#6a6a6a"/></svg><div class="a" style="left:61px;top:107px;width:1537px;height:24px;background:#383838;border:1px solid #0e0e0e;box-sizing:border-box"></div><svg style="left:68px;top:110px" width="17" height="18"><rect x="1" y="8" width="15" height="9" fill="#56646a"/><rect x="2" y="10" width="13" height="5" fill="#7a8a90" opacity="0.6"/><path d="M1 3L15 1L15.5 4L1.5 6Z" fill="#2a2a2a"/><path d="M1 7H16V8H1Z" fill="#2a2a2a"/><path d="M4 2.5H6M8 2H10M12 1.7H14M3 7.5H5M7 7.5H9M11 7.5H13" stroke="#ccc" stroke-width="1"/><rect x="1.5" y="3" width="3" height="3" fill="#9ab"/></svg><div class="t" style="left:89px;top:111.0px;height:16px;line-height:16px;font-size:11.5px;color:#e0e0e0;">obj</div><svg style="left:111px;top:108px" width="8" height="22"><path d="M1 0L6 11L1 22" stroke="#151515" stroke-width="1.2" fill="none"/></svg><svg style="left:124px;top:109px" width="20" height="19"><defs><linearGradient id="tc61101" x1="0" x2="1"><stop offset="0" stop-color="#2a5a98"/><stop offset="0.5" stop-color="#8ab8e8"/><stop offset="1" stop-color="#2a5a98"/></linearGradient><radialGradient id="ts61101" cx="0.35" cy="0.35" r="0.7"><stop offset="0" stop-color="#ff9a8a"/><stop offset="0.5" stop-color="#e02818"/><stop offset="1" stop-color="#901008"/></radialGradient><linearGradient id="tk61101" x1="0" x2="1"><stop offset="0" stop-color="#c8b010"/><stop offset="0.5" stop-color="#fff070"/><stop offset="1" stop-color="#d0b820"/></linearGradient></defs><rect x="1" y="2" width="7" height="12" fill="url(#tc61101)"/><ellipse cx="4.5" cy="2.5" rx="3.5" ry="1.6" fill="#b8d8f8"/><circle cx="15" cy="9" r="4.3" fill="url(#ts61101)"/><path d="M9.5 5L15 17H4Z" fill="url(#tk61101)"/></svg><div class="t" style="left:146px;top:111.0px;height:16px;line-height:16px;font-size:11.5px;color:#e0e0e0;">trousers_female</div><div class="a" style="left:1578px;top:108px;width:19px;height:22px;background:#333;border-left:1px solid #2a2a2a"></div><svg style="left:1583px;top:116px" width="9" height="6"><path d="M0 0H9L4.5 6Z" fill="#999"/></svg><svg style="left:1604px;top:111px" width="22" height="16"><path d="M2 8H9M9 3V13M9 5H15L17 3V13L15 11H9" stroke="#ddd" stroke-width="1.6" fill="#bbb"/></svg><svg style="left:1629px;top:109px" width="20" height="20"><circle cx="10" cy="10" r="8" fill="none" stroke="#4a78c0" stroke-width="1.5"/><circle cx="10" cy="10" r="4.5" fill="none" stroke="#4a78c0" stroke-width="1.5"/><circle cx="10" cy="10" r="1.5" fill="#4a78c0"/></svg><svg style="left:1663px;top:110px" width="20" height="20"><path d="M2 5L9 2L16 5V13L9 17L2 13Z" fill="#8ca4b8"/><path d="M2 5L9 2L16 5L9 8Z" fill="#d0dde8"/><path d="M9 8L16 5V13L9 17Z" fill="#6f889c"/><path d="M13 16H19L16 19Z" fill="#888"/></svg><svg style="left:1690px;top:110px" width="20" height="20"><circle cx="9" cy="9" r="5.5" fill="url(#gb)"/><path d="M13 16H19L16 19Z" fill="#888"/></svg><svg style="left:1711px;top:110px" width="22" height="21"><rect x="1" y="1" width="14" height="15" fill="#e2e2e2" stroke="#222" stroke-width="0.8"/><path d="M14 16H20L17 19Z" fill="#888"/></svg><div class="a" style="left:7px;top:135px;width:1727px;height:1px;background:#111"></div><div class="a" style="left:7px;top:136px;width:1727px;height:31px;background:#2c2c2c"></div><div class="a" style="left:17px;top:137px;width:1717px;height:1px;background:#555"></div><div class="a" style="left:8px;top:137px;width:8px;height:30px;background:#3d3d3d;border-right:1px solid #1a1a1a"></div><svg style="left:9px;top:139px" width="7" height="6"><path d="M3.5 0L7 6H0Z" fill="#111"/></svg><svg style="left:20px;top:142px" width="22" height="20"><circle cx="6" cy="7" r="4" fill="#3c4448" stroke="#111" stroke-width="1"/><circle cx="11" cy="4" r="3.5" fill="#3c4448" stroke="#111" stroke-width="1"/><rect x="5" y="8" width="9" height="7" fill="#5a646a" stroke="#111" stroke-width="0.8"/><path d="M14 10L18 8V15L14 13Z" fill="#5a646a" stroke="#111" stroke-width="0.7"/><path d="M14 16H20L17 19Z" fill="#999"/></svg><div class="t" style="left:43px;top:144.0px;height:16px;line-height:16px;font-size:11.5px;color:#e0e0e0;"><b>View</b></div><svg style="left:790px;top:144px" width="24" height="20"><ellipse cx="9" cy="12" rx="7" ry="3" fill="none" stroke="#4a80d0" stroke-width="1.6"/><path d="M8 2L8 13L10.5 10.5L13 14L14 13L12 10L15 10Z" fill="#eee" stroke="#333" stroke-width="0.5"/><path d="M15 15H21L18 18Z" fill="#999"/></svg><svg style="left:823px;top:144px" width="24" height="20"><path d="M2 4L18 12" stroke="#4a80d0" stroke-width="2"/><path d="M8 1L8 12L10.5 9.5L13 13L14 12L12 9L15 9Z" fill="#eee" stroke="#333" stroke-width="0.5"/><path d="M15 15H21L18 18Z" fill="#999"/></svg><svg style="left:855px;top:144px" width="24" height="20"><rect x="1" y="4" width="11" height="7" rx="2" fill="#555" stroke="#222" stroke-width="0.6"/><path d="M2 15C6 12 10 15 15 13" stroke="#4a80d0" stroke-width="2" fill="none"/><path d="M10 1L10 11L12.5 8.5L15 12L16 11L14 8L17 8Z" fill="#eee" stroke="#333" stroke-width="0.5"/><path d="M15 15H21L18 18Z" fill="#999"/></svg><div class="a" style="left:888px;top:141px;width:21px;height:23px;background:#8e9ba3;border-left:1px solid #b0bcc3"></div><svg style="left:889px;top:143px" width="20" height="20"><circle cx="7" cy="8" r="3.5" fill="#2e3438"/><circle cx="11" cy="5" r="3" fill="#2e3438"/><rect x="6" y="9" width="8" height="6" fill="#3c4448"/><circle cx="14" cy="12" r="2.5" fill="#2e3438"/></svg><div class="a" style="left:910px;top:140px;width:1px;height:25px;background:#777"></div><svg style="left:914px;top:145px" width="20" height="18"><rect x="2" y="2" width="11" height="9" rx="2" fill="#fff" stroke="#555" stroke-width="1"/><path d="M7.5 4V9M5 6.5H10" stroke="#3a78d0" stroke-width="1.6"/><path d="M12 11L15 14" stroke="#aaa" stroke-width="1.3"/></svg><svg style="left:948px;top:144px" width="18" height="18"><rect x="2" y="4" width="13" height="9" fill="none" stroke="#9a8a40" stroke-width="0.9"/><path d="M8.5 1V17" stroke="#c03030" stroke-width="0.8" stroke-dasharray="1 2"/></svg><svg style="left:1687px;top:142px" width="22" height="22"><circle cx="5" cy="4" r="2.5" fill="#3a68b0"/><path d="M2 8H8" stroke="#ddd" stroke-width="1.2"/><circle cx="11" cy="7" r="2.5" fill="#3a68b0"/><path d="M8 11H14" stroke="#ddd" stroke-width="1.2"/><circle cx="5" cy="12" r="2.5" fill="#3a68b0"/><path d="M2 16H8" stroke="#ddd" stroke-width="1.2"/><path d="M12 17H18L15 20Z" fill="#999"/></svg><svg style="left:1712px;top:143px" width="18" height="18"><circle cx="9" cy="9" r="7.5" fill="#1e2226" stroke="#ddd" stroke-width="1.3"/><text x="9" y="13" font-size="11" font-weight="bold" fill="#eee" text-anchor="middle" font-family="Liberation Sans">?</text></svg><div class="a" style="left:41px;top:167px;width:1667px;height:1112px;background:#000"></div><div class="a" style="left:7px;top:167px;width:34px;height:1112px;background:#3a3a3a"></div><div class="a" style="left:1708px;top:167px;width:26px;height:1112px;background:#3a3a3a"></div><svg style="left:450px;top:256px;overflow:hidden" width="920" height="920" viewBox="0 0 920 920"><rect width="920" height="920" fill="#a8a8a8"/><path d="M886.2 68.2L881.7 44.3 864.6 26.2 839.9 24.1 817.8 15.9 801.2 28.8 795 49.6 779.7 61.8 759.6 48 736.3 44.8 746 63.9 747.6 81.1 738.8 96 756 115.7 760.6 93.5 738.8 96 717.5 95.8 712.6 120 702.9 138 683.3 150.6 666.9 168.3 644.1 159.4 622 149 619 125 614.5 98.8 614.7 76.5 598.6 63.8 598 82.8 614.5 98.8 595.4 98.9 598 82.8 614.7 76.5 616.3 57.7 598.6 63.8 580.4 70.1 598 82.8 580.6 89.7 595.4 98.9 602 111.9 614.5 98.8 629.1 88.7 614.7 76.5 634.7 70.2 654.5 78.2 671.9 76.3 686.7 93.5 701.9 85.2 711.8 69 717.5 95.8 701.9 85.2 702.2 102.8 686.7 93.5 665 93.4 654.5 78.2 654.8 60.4 668.3 43.1 661.8 20.4 645.9 17.7 632.7 26.6 649.2 38.5 661.8 20.4 681.6 23.6 690 0 697.1 15.9 710.9 0 723.5 14.2 741.9 23.7 736.3 44.8 715.3 44.2 711.8 69 690.4 71.5 686.7 93.5 694 116.5 712.6 120 725.5 135.6 702.9 138 701.9 160.3 683.3 150.6 680.1 129.3 702.9 138 724 154.3 701.9 160.3 715.3 171.1 732.1 174.2 756.5 178.1 743.7 162.4 732.1 174.2 724 154.3 743.7 162.4 760 161 756.5 178.1 777.6 170.5 791.3 156.4 804.8 144.4 823.1 152.4 826.3 174 841.8 165.1 862.4 181.3 847.6 200.2 851.6 219.5 831.9 213.6 847.6 200.2 828.8 193.1 826.3 174 841.4 183.4 847.6 200.2 872.2 204.4 885.5 221.5 894.3 236.5 920 230 903 218.1 894.3 236.5 903.1 248.8 920 230M886.2 68.2L869.3 78 852.9 66.4 854.6 87.7 854.6 105.5 862.1 118 871.2 101.2 892.7 104.8 899.4 123.3 885.7 138 875.8 150.9 859.4 157.7 862.4 181.3 841.4 183.4 841.8 165.1 823.1 152.4 841.6 143.1 841.8 165.1 859.4 157.7 841.6 143.1 820.4 129.5 823.1 152.4 808.6 163.7 826.3 174 812.7 184.4 828.8 193.1 831.9 213.6 836.7 233.2 851.6 219.5 872.2 204.4 862.4 181.3 889.9 184.4 907.4 178.6 920 167.3 896.7 158.2 875.8 150.9 876.9 167.1 862.4 181.3M886.2 68.2L900.1 87 892.7 104.8 883.2 88.3 886.2 68.2 905.1 71.1 900.1 87 920 83.6 905.1 71.1 920 62.7 902.6 53.9 886.2 68.2 868.7 59.1 881.7 44.3 903.5 37.2 920 20.9 890.1 24.9 864.6 26.2 857.3 0 839.9 24.1 822.2 32.7 801.2 28.8 794.5 0 817.8 15.9 822.2 32.7 815.8 49.5 801.2 28.8 780.7 37.6 795 49.6 803.8 69.9 807.2 92.7 823 85.6 822.3 67.5 835.9 58.1 852.9 66.4 837.8 77 822.3 67.5 803.8 69.9 823 85.6 839.3 99.2 837.8 77 854.6 87.7 869.3 78 871.2 101.2 854.6 105.5 839.3 99.2 854.6 87.7 871.2 101.2 883.2 88.3 869.3 78 868.7 59.1 852.9 66.4 853.8 45.9 864.6 26.2 876.5 12.2 857.3 0M404.5 556.7L395.9 533.4 408.6 511.5 429.4 499.3 445.5 492 431 481.1 415.4 466.3 394.2 470.7 382.6 450.8 386.9 426.3 384.5 407.9 405.3 409.5 386.9 426.3 370.6 437.4 359.9 455.2 355.6 479.3 337 486.4 339.2 467.4 355.6 479.3 368.8 490.6 372.1 505.5 362.4 521.1 341.6 521.9 325.1 542.5 319.4 565.7 317.8 585.5 303.9 575.6 319.4 565.7 336.3 559.6 325.1 542.5 350.5 543 341.6 521.9 335.4 504 337 486.4 317.8 494.3 297 501.5 274.5 492.2 260.2 508.3 253.7 529.1 236.5 536.2 238.1 514.8 253.7 529.1 254.8 553.3 236.5 536.2 237.3 555.7 223.2 564 202.9 566.3 189.8 550.4 198.3 535.6 214.2 525.2 236.5 536.2 224.7 546 237.3 555.7 254.8 553.3 278.8 556.7 287.7 538.2 295 519.4 297 501.5 280.1 508.1 274.5 492.2 247.7 494.3 238.1 514.8 260.2 508.3 247.7 494.3 224.3 500.2 238.1 514.8 214.2 525.2 199.8 499.3 197.6 472.9 217.8 466.9 230 451.2 252.2 443.5 268.3 456.7 282.9 472.1 274.5 492.2 298.6 484 297 501.5 318.2 516.3 325.1 542.5 307.7 534 287.7 538.2 268.4 539.6 253.7 529.1 273.4 522.8 287.7 538.2 302.2 555 325.1 542.5M404.5 556.7L417.9 571.4 427 585.3 441.5 571.5 450 549.9 456.8 528 480 531.4 469.2 547 450 549.9 437.5 536.3 456.8 528 469.2 547 460.9 563.1 450 549.9 428.9 554.3 437.5 536.3 418.7 535.9 395.9 533.4 375.3 536.1 370.3 555.5 350.5 543 336.3 559.6 353.5 566.7 370.3 555.5 369.8 576.7 387.2 587.6 367.6 596.8 369.8 576.7 353.5 566.7 350.5 543 362.4 521.1 375.3 536.1 350.5 543M404.5 556.7L428.9 554.3 441.5 571.5 444.7 597.2 432.9 618.1 415.7 629 401.2 622.5 396.3 639.2 415.7 629 430.8 635.8 432.9 618.1 446.5 633.8 456.2 648.5 450.3 665.4 427.6 668.3 408.4 684 385.9 691.1 391.5 671.6 384.1 655.3 370.7 640.1 347.9 631.6 351.4 608.1 367.6 596.8 366.4 618.4 370.7 640.1 396.3 639.2 384.1 655.3 404.1 659.1 427.6 668.3 438.4 650.6 456.2 648.5 469.3 662.2 450.3 665.4 438.4 650.6 430.8 635.8 446.5 633.8 438.4 650.6 418.8 647.1 427.6 668.3 444.9 680.5 450.3 665.4 466.9 683.2 482.9 674.6 485.4 689.4 475.6 706.5 458 717.9 441.3 710.6 442.8 728.2 458 717.9 461.9 743 484.2 740 489.5 721.2 505.1 717.9 522 723.6 530.9 704.9 516.2 691.9 515.2 707.7 505.1 717.9 498.4 701.3 516.2 691.9 532.9 688.5 530.9 704.9 551.3 698 559.3 712.1 574.2 703.7 597.2 700.6 606.5 713.4 621.5 700.7 647.2 710.1 654.8 731.8 668.3 742.9 668 761.9 685.1 770.1 671.6 780 668 761.9 649.8 774.1 630.5 761.1 616.5 775.4 597.7 770.1 589.2 750 569.3 748.4 552.4 738.7 535.8 735.5 522 723.6 515.2 707.7 530.9 704.9 545.6 720 552.4 738.7 567.2 725.7 569.3 748.4 577.8 766.2 589.2 750 602.9 732.6 606.5 713.4 587.1 717.8 597.2 700.6 621.5 700.7 614.2 680.9 637.4 669.2 635.5 648.1 617.8 639 602.1 631.8 591 615.8 564.8 624.4 559.1 602.9 543.2 608.9 529 593.8 535.9 575.3 543 559.1 541.1 542.2 521.6 537.3 513.7 516.4 515.4 492.3 532.7 485 552.3 495.3 553.7 514 536.4 524.6 513.7 516.4 500.4 534.1 521.6 537.3 536.4 524.6 541.1 542.2 561.5 547.6 543 559.1 525.4 558.4 535.9 575.3 547.9 589.7 529 593.8 522 613.9 543.2 608.9 564.8 624.4 551.7 643.9 538.4 658.9 512.3 654.4 489 658.8 482.9 674.6 469.3 662.2 489 658.8 475.4 646.2 456.2 648.5 462.7 635.2 446.5 633.8 458.3 618.2 432.9 618.1 425.2 601.3 427 585.3 444.7 597.2 458.3 618.2 476.6 631.1 484.3 614.8 458.3 618.2 462.7 635.2 476.6 631.1 475.4 646.2 469.3 662.2 466.9 683.2 485.4 689.4 500.6 677.1 516.2 691.9 523.8 674.2 538.4 658.9 547.7 677.7 551.3 698 545.6 720 535.8 735.5 519.7 743 522.7 762.2 539 771.2 549.7 787.4 538 801.3 537.5 821.2 521.1 830.3 502.8 835.5 499.6 854.7 512.1 871 529 885.6 543.8 898.5 543.6 920 520.9 905.2 501.8 920 494.1 904.9 484.7 888.8 473.9 903.9 456.5 904.2 439.1 920 442.7 891.1 456.5 904.2 464 888.2 484.7 888.8 492.5 872.9 499.6 854.7 519.1 851.3 521.1 830.3 540.1 844.6 537.5 821.2 551.5 830 567 824.6 582.9 837.8 574.6 854.3 557.8 865.2 540.1 844.6 551.5 830 561.8 843.5 574.6 854.3 590.8 857.6 578.8 872.4 574.6 854.3M404.5 556.7L418.7 535.9 408.6 511.5 433.4 519.1 456.8 528 475.2 509.6 480 531.4 500.4 534.1 492.9 519.3 513.7 516.4 497 501.8 497.9 479 514.6 471.7 532.7 485 550.9 472.1 563.3 453.3 551.5 434.4 571.6 437.8 563.3 453.3 539.8 448.3 551.5 434.4 561.1 420.1 571.6 437.8 589.9 436.9 595.1 418.9 608.4 435 623.2 450.6 643.8 445.1 659.8 423.7 676.7 405.5 656.1 404.6 638.1 410.3 659.8 423.7 631.1 430.3 643.8 445.1 662.6 443.5 659.8 423.7 656.1 404.6 642.4 390.8 638.1 410.3 614.7 416.5 595.1 418.9 602.6 404.2 614.7 416.5 608.4 435 603.4 452.3 623.2 450.6 610.2 471.7 603.4 452.3 589.9 436.9 608.4 435 631.1 430.3 623.2 450.6 636 468.9 643.8 445.1 654.1 458.5 659.8 476.4 646.3 494.3 668.3 509.6 691.5 513.9 704 494.3 723.5 499.7 712.9 516.6 724.6 535.1 733 558.4 756.7 556.2 744.7 543.7 724.6 535.1 699.7 531.7 691.5 513.9 678.9 527.8 668.3 509.6 683.2 498.4 704 494.3 712.9 516.6 691.5 513.9 683.2 498.4 668.6 491.5 668.3 509.6 647.5 517.2 647.5 538.1 629.1 550.2 614.7 562 632.8 568.1 629.1 550.2 647.8 559 664.1 565.8 686.2 563 711.3 569.1 733 558.4 707.3 549.4 724.6 535.1 746.2 527.6 744.7 543.7 733 558.4 750.4 572.7 756.7 556.2 770.5 570.6 762.3 583.7 747.3 591.1 748.6 610 732.9 622.1 716.4 632.3 720.3 652.9 719.2 677.9 739.2 678.7 753.4 690.5 766.1 681.1 785.1 682.3 806.7 675.4 823.9 668.9 840.4 661 842.1 639.5 859.9 652.4 840.4 661 839.6 679.6 854.5 694.7 858.7 673.6 840.4 661 822 650 842.1 639.5 837 618.8 853.5 618.6 842.1 639.5 820.7 628.2 822 650 823.9 668.9 821.7 689.2 806.7 675.4 803.8 691.8 821.7 689.2 839.6 679.6 823.9 668.9 806.2 658.4 806.7 675.4 789.8 664.8 785.1 682.3 803.8 691.8 811.5 707.8 821.7 689.2 837.7 696.3 854.5 694.7 848.4 712.8 860.4 729.4 853.2 746 833.7 746.4 823.3 763.7 811.7 781.8 822.6 803.3 833 823 826.2 838.7 808.2 840.3 790.7 845.9 774 851.4 787.2 867.1 790.7 845.9 774.3 829.3 774 851.4 762.1 867.7 743.1 856.9 740.1 833 726.6 821.1 710.7 816.8 690.6 807.6 668.8 810.1 657.4 825.7 639.8 820.2 621.3 832.6 602.2 844 607.1 861.6 599.8 876.1 605.3 891.9 596.6 906.3 575.8 904.8 564.5 920 558 906.2 575.8 904.8 585.5 920 596.6 906.3 618.4 903.4 635.9 906.1 649.7 899.5 665.6 900.3 669.1 920 684.1 899.9 690 920 706.1 898.8 710.9 920 719.4 907.1 747.6 898.5 759.5 886.2 762.1 867.7 787.2 867.1 805.6 859.6 808.2 840.3 811.3 819.6 822.6 803.3 804.9 799.1 787.3 808.7 790.7 781.4 770.5 773.9 759.7 787.2 742.6 787.1 726.5 791.8 709.3 798.7 690.6 807.6 676.7 795.8 668.8 810.1 660.1 793.7 676.7 795.8 671.6 780 660.1 793.7 649.8 774.1 671.6 780 692.7 786.1 685.1 770.1 686.8 754.3 668.3 742.9 686.5 733.8 704.5 720.5 724.1 736.3 740.3 753.3 721.9 753.3 724.1 736.3 728.3 716 704.5 720.5 683.2 710.3 678.1 689.8 672.4 669.9 668 651.9 678.8 638.5 697.3 621.5 716.4 632.3 717 615.1 697.3 621.5 673.3 620.2 678.8 638.5 700.8 642.9 720.3 652.9 706.4 661.9 719.2 677.9 698.3 695.1 704.5 720.5 715.4 700.6 719.2 677.9 736.7 661.6 739.2 678.7 753 670.2 753.4 690.5 753.8 713.1 728.3 716 715.4 700.6 698.3 695.1 678.1 689.8 656.4 685 647.2 710.1 666 703.7 678.1 689.8 694.1 675.1 719.2 677.9 735.1 695.6 739.2 678.7M404.5 556.7L400.7 575.1 387.2 587.6 396.6 607 401.2 622.5 413.4 611.9 415.7 629 418.8 647.1 430.8 635.8M404.5 556.7L385.5 567.3 370.3 555.5 386.3 550.2 395.9 533.4 384.6 516.4 372.1 505.5 354.2 502.1 355.6 479.3 374.5 472.1 368.8 490.6 354.2 502.1 341.6 521.9 318.2 516.3 295 519.4 307.7 534 302.2 555 319.4 565.7 336 577 317.8 585.5 297 593.7 295.6 617.3 309.4 631.9 326.4 627.5 347.9 631.6 366.4 618.4 351.4 608.1 335.6 597.5 317.8 585.5 316.4 608.6 295.6 617.3 282.2 607 297 593.7 303.9 575.6 287.1 574.9 278.8 556.7 266.7 574.4 254.8 553.3 242.6 575.6 237.3 555.7M404.5 556.7L386.3 550.2 375.3 536.1 384.6 516.4 408.6 511.5 409.7 487.5 415.4 466.3 422 445.8 436.7 430.5 445.2 445.4 466.4 445.8 487.8 446.6 498.1 428.4 484.8 411.5 472.8 392.8 450.2 397.2 428 402.8 405.3 409.5 413.9 388.2 428 402.8 437.3 382.9 450.2 397.2 459 376.5 472.8 392.8 463.5 412.9 484.8 411.5 493.5 390.1 513 388.3 532 385.2 556.1 386.3 581.5 381.9 569.8 402.6 556.1 386.3 540.3 399.7 532 385.2 525.4 369.2 513 388.3 503.5 372.3 491.6 357.1 502.2 340.5 482.5 341.5 470.9 325.8 451.6 334.6 446.2 357.5 427.1 353.3 409.1 353.3 390.1 344.1 388.2 316.7 399.7 292.8 405.8 314 419.7 324.2 433.8 338.6 451.6 334.6 465.1 343.7 470.9 325.8 481 306.8 470.9 291.2 452.1 288.5 435 296.6 434.4 278.4 434.7 262 419.2 263.3 434.4 278.4 452.1 288.5 467.9 274.3 470.9 291.2 487.5 284 501.8 265.7 506.7 248.5 501.4 232.5 513.5 221.3 523.8 238.5 506.7 248.5 486.6 247.5 501.4 232.5 523.8 238.5 542.8 232.3 546.6 248.6 523.8 238.5 531 218.3 539.8 201.7 554.2 185.2 543 169.6 533.6 185.8 539.8 201.7 561 202.7 570.7 219.2 590.6 217.5 579.2 203.8 561 202.7 576.1 184.4 579.2 203.8 570.7 219.2 550.4 218.3 539.8 201.7 512.8 198.5 533.6 185.8 554.2 185.2 561 202.7 550.4 218.3 542.8 232.3 560.5 234.3 570.7 219.2 580.7 234.5 590.6 217.5 609.8 213.4 611.5 190.2 626.2 202.2 641.7 208.6 644.9 194.1 626.2 202.2 628.8 186.8 611.5 190.2 596.7 176.1 576.1 184.4 582.8 162 570.3 149.8 564.1 132.1 551.5 117.4 538.1 111.5 542.7 133 551.5 117.4 563.1 111.8 564.1 132.1 542.7 133 526.3 139.3 520.9 119 496.3 120.5 482.3 134.8 487.3 150.2 468.6 149.9 482.3 134.8 475.4 114.7 496.3 120.5 506 101.7 493.4 84.2 482.9 63.5 499.3 51.1 481 44.7 482.9 63.5 500.9 67.5 499.3 51.1 517.4 35.7 497.2 17.7 516.1 14.2 522.7 0 534.2 17.6 543.6 0 554 20.5 573.2 16.9 564.5 0 554 20.5 534.2 17.6 517.4 35.7 516.1 14.2 534.2 17.6 541.5 37.3 517.4 35.7 516 59.3 499.3 51.1 493.8 35.4 481 44.7 474.7 25.4 497.2 17.7 493.8 35.4 517.4 35.7 532 52.8 534 74.9 550.2 56.6 568.4 58.1 580.4 70.1 560.5 77.9 568.4 58.1 565.3 39.1 573.2 16.9 585.5 0 592.3 15.1 573.2 16.9 582.9 29.8 599.1 31 584.9 48.4 598.6 63.8 604.1 46.6 616.3 57.7 633.6 48.8 632.7 26.6 617.6 37.3 616.3 57.7 634.7 70.2 633.6 48.8 649.2 38.5 645.9 17.7 627.3 0 632.7 26.6 612.5 17.1 599.1 31 617.6 37.3 633.6 48.8 654.8 60.4 671.9 76.3 665 93.4 653.6 109.6 642.3 122.7 619 125 597.7 125.9 602 111.9 619 125 605.4 139.9 597.7 125.9 581.4 114.3 595.4 98.9M370.6 437.4L382.6 450.8 359.9 455.2 339.2 467.4 341.2 450.1 359.9 455.2 374.5 472.1 394.2 470.7 409.7 487.5 429.4 499.3 431 481.1 452 477.5 445.5 492 463.7 492.2 452 477.5 458.7 461.1 466.4 445.8 454.6 430.4 436.7 430.5 441.7 414.9 428 402.8 421.8 421.6 405.3 409.5 402.7 434.9 386.9 426.3 370.2 419.3 384.5 407.9 368.7 396.5 348.7 398 355.2 411.3 368.7 396.5 354.2 384.7 351.3 365.9 358.4 344.1 375 357.8 390.1 344.1 373 332.1 388.2 316.7 405.8 314 403.9 332.6 409.1 353.3 398.9 369.8 390.1 344.1 403.9 332.6 419.7 324.2 419.5 303.5 399.7 292.8 378.2 292.5 359.9 290.6 352.5 304.3 339.7 287.8 331.7 263 353.6 271.8 339.7 287.8 359.9 290.6 353.6 271.8 367.6 254.2 352.6 239.8 371.2 231.2 367.6 254.2 382.7 264.7 401.9 269.1 399.7 292.8 418 284.1 435 296.6 448.9 305.7 452.1 288.5 464 305.9 470.9 325.8 491 324 502.2 340.5 514.7 355 491.6 357.1 482.5 341.5 470.8 358.5 491.6 357.1 482.1 373.6 472.8 392.8 493.5 390.1 482.1 373.6 459 376.5 437.3 382.9 446.2 357.5 470.8 358.5 459 376.5 446.2 357.5 433.8 338.6 427.1 353.3 422.6 369.8 409.1 353.3 418.1 340.7 419.7 324.2 437.9 317.5 451.6 334.6 455.6 319 470.9 325.8M370.6 437.4L370.2 419.3 355.2 411.3 335.4 411 348.7 398 354.2 384.7 366.7 376.2 351.3 365.9 375 357.8 373 332.1 358.4 344.1 354.7 322.2 352.5 304.3 337.4 307.6 339.7 287.8 317.1 277.6 293.9 281.2 308.8 291.4 317.1 277.6 331.7 263 304.7 257.4 293.9 281.2 280.3 259.9 259.1 259.8 246.9 240.8 230.6 232.7 215.9 252.6 220.6 278.3 228.8 300.8 212.3 298.2 220.6 278.3 201.7 266.1 177.9 272.2 152.1 275.7 129.9 280.4 124.5 259.7 108.6 275.9 105.7 255.2 103.8 236.9 101.3 219.9 122 225.4 103.8 236.9 87.5 247 105.7 255.2 124.5 259.7 123.4 242 103.8 236.9 84.1 229.8 101.3 219.9 101.1 201 120 191.5 133 180.5 150 180.8 162.8 199.9 165.7 224.3 143.1 229.4 132.4 210.6 120 191.5 140.1 196.1 133 180.5 139.4 163.5 120.7 167.6 112.9 145.2 91.5 148.5 72.7 151.2 82.9 168.9 91.5 148.5 103.5 161.5 112.9 145.2 129.8 130.4 151.8 118.7 169.5 137.8 176.9 158.1 171.8 177 162.8 199.9 186.6 191.1 205.8 182.4 212 156.9 208.8 129.6 227.9 127.3 225.7 142.6 208.8 129.6 189.5 123.3 169.5 137.8 172.7 115.1 151.8 118.7 125.7 109.7 128.2 91 109.8 94 87.9 91.5 81.2 113.4 95.1 129.1 91.5 148.5 75.9 133.9 72.7 151.2 58.1 141.2 43.1 128.3 24.9 116.2 27.2 97.5 34.1 80.3 33.3 62.7 49.6 73.8 34.1 80.3 15.5 78.8 33.3 62.7 33.2 41.6 15.1 52.7 33.3 62.7 53.1 51.2 49.6 73.8 64.4 66.6 74.8 53.2 86.4 39.1 110.5 41.2 128.4 32.8 116.5 21.2 110.5 41.2 97.8 57.1 86.4 39.1 98 25.9 116.5 21.2 104.5 0 98 25.9 83.6 0 80.2 17.6 56.6 17.5 49 32.1 33.2 41.6 35.2 18.7 20.9 0 0 20.9 16.2 29.5 20.9 0M370.6 437.4L351.7 431.8 359.9 455.2M540.1 844.6L519.1 851.3 502.8 835.5 482 841.6 471 829.9 482.7 817.9 459.1 820.2 471 829.9 460.6 838.5 459.1 820.2 462.7 801.1 480 794.9 490.8 778.5 510.2 773 522.7 762.2 527 785.3 510.2 773 508.9 792.8 490.8 778.5 494.6 799.6 508.9 792.8 522.7 807.9 538 801.3 527 785.3 539 771.2 556.9 766.2 569.3 748.4 582.6 734.4 589.2 750 609.3 754.4 630.5 761.1 625.5 741.9 602.9 732.6 609.3 754.4 597.7 770.1 577.8 766.2 556.9 766.2 549.7 787.4 569.7 802 567 824.6 585.2 816.6 604.4 808 589.5 801.4 569.7 802 584 785.8 577.8 766.2 567.3 781.6 549.7 787.4 527 785.3 508.9 792.8 505.5 814.6 521.1 830.3 522.7 807.9 537.5 821.2 552.4 810.9 538 801.3M540.1 844.6L534.7 866.5 557.8 865.2 561.8 843.5 582.9 837.8 602.2 844 623.5 853.8 621.3 832.6 642.1 838.7 657.4 825.7 675.8 827.2 668.8 810.1 653.1 809.7 657.4 825.7 663.2 846 660.1 867.2 680.7 858.8 663.2 846 675.8 827.2 690.6 807.6 696 829.5 710.7 816.8 717 837.1 726.6 821.1 723.5 807.3 710.7 816.8 709.3 798.7 723.5 807.3 726.5 791.8 739.8 809.1 742.6 787.1 753.5 801 759.7 787.2 768.3 805 787.3 808.7 774.3 829.3 793.2 829.1 787.3 808.7 811.3 819.6 826.2 838.7 821.9 857 808.2 840.3 793.2 829.1 790.7 845.9 805.6 859.6 821.9 857 834.5 874.5 853.3 877.1 863.6 862.3 877.6 851.1 899.8 847.5 920 836.4 903.8 825.2 899.8 847.5 886.7 864.5 877.6 851.1 858.7 844.6 853 827 833 823 811.3 819.6 793.2 829.1M540.1 844.6L561.8 843.5 567 824.6 552.4 810.9 549.7 787.4M81.8 208.8L69.1 188.1 46 182.1 25.1 188.7 0 188.2 19.8 207.2 15.2 223.3 33.2 225.1 19.8 207.2 25.1 188.7 39.3 203.8 46 182.1 24.4 168.7 0 167.3 13.6 178.4 24.4 168.7 25.1 188.7 13.6 178.4 0 188.2M81.8 208.8L101.3 219.9 115.8 209.7 120 191.5 102.2 179.3 82.9 168.9 69.1 188.1 60.8 164.2 46 182.1 59.7 205.2 69.1 188.1 86.8 190.4 82.9 168.9 103.5 161.5 102.2 179.3 101.1 201 115.8 209.7 122 225.4 132.4 210.6 140.1 196.1 162.8 199.9 183.3 211.6 165.7 224.3 175.5 248.1 177.9 272.2 188.8 258.8 201.7 266.1 197 245.2 199.4 222.8 212.4 234.2 197 245.2 215.9 252.6 212.4 234.2 230.6 232.7 236.9 210.4 255.1 204.7 272.1 203.7 287.5 216.6 284 238.8 280.3 259.9 271.3 279.6 293.9 281.2 299.4 303.4 308.8 291.4 324 293.5 339.7 287.8M81.8 208.8L101.1 201 86.8 190.4 81.8 208.8 65.8 223.4 48.8 218 33.2 225.1 39.3 203.8 19.8 207.2 0 209.1 15.2 223.3 0 230 21.8 243.3 15.2 223.3M81.8 208.8L59.7 205.2 39.3 203.8 48.8 218 50.4 234.2 55 253 68.7 240.7 87.5 247 88.8 267.7 105.7 255.2 123.4 242 143.1 229.4 122 225.4 123.4 242 142.5 248.2 124.5 259.7 141 263.6 152.1 275.7 146.5 292.9 162.4 305.4 145.8 311.8 144.3 331.5 139.2 352.4 129.8 337.5 144.3 331.5 156.8 344.7 139.2 352.4 130.8 372.7 108.1 380.1 94.1 363 118 355.4 139.2 352.4 153.4 364.7 173.2 353.6 172 373.2 191.7 381.1 208.3 398.7 210.9 379.5 191.7 381.1 187.6 361.2 173.2 353.6 193.8 341.8 187.6 361.2 172 373.2 172.5 392.1 191.7 381.1 189.3 406.8 208.3 398.7 229.1 389.8 251.9 392.1 271.2 392.9 259.9 370.5 278.5 353.8 265.2 334.8 267.2 315.9 279.7 299.8 293.9 281.2M81.8 208.8L84.1 229.8 87.5 247 72.5 258.6 55 253 36.7 262.6 39.1 279.7 33.8 296.2 53.5 307.6 71.7 300.2 53.1 289.4 53.5 307.6 72.5 322.7 57.9 343.5 37.9 355.1 26.4 369.7 15.3 384.5 31.3 386.4 26.4 369.7 43.4 374.7 31.3 386.4 46.3 394.8 61.7 380.3 54.6 363.1 57.9 343.5 36.4 334.8 19 325.5 0 334.5 18.5 348.5 19 325.5 18.4 307 18.1 293.7 0 292.7 18.4 307 33.8 296.2 18.1 293.7 20.8 279.2 39.1 279.7 53.1 289.4 33.8 296.2 35.8 315.7 19 325.5 0 313.6 18.4 307 35.8 315.7 53.5 307.6 53 324.5 57.9 343.5 71.8 363.5 54.6 363.1 37.9 355.1 43.4 374.7 54.6 363.1M505.1 717.9L501.9 733.8 484.2 740 474 726 458 717.9 452.3 697.1 441.3 710.6 426.1 718.3 407.9 736.7 390.6 753.9 375 765.8 359.1 771.4 371.1 786.6 374.8 805.6 354.5 801 371.1 786.6 347.5 783 359.1 771.4 356.2 755.6 356 739.7 345.7 725.1 368.4 725.2 354.1 708.1 345.7 725.1 335.7 706.8 326 685.9 344.6 688.8 355.9 673.4 374.2 673.7 384.1 655.3 367.1 658.2 355.9 673.4 363.2 690.9 385.9 691.1 370.6 706.3 368.4 725.2 356 739.7 372.9 746.4 390.6 753.9 387.7 734.9 407.9 736.7 397.6 721.1 411.3 709.3 408.4 684 404.1 659.1 418.8 647.1 396.3 639.2 404.1 659.1 391.5 671.6 408.4 684 398.1 703.3 385.9 691.1 374.2 673.7 391.5 671.6M502 304.7L519.7 293.2 504.9 285 501.8 265.7 515.9 276.3 519.7 293.2 525.1 315.1 536.6 330.8 554.1 327.8 572.6 342.5 542.2 349.5 554.1 327.8 542.5 316.8 536.6 330.8 542.2 349.5 514.7 355 525.4 369.2 542.2 349.5 564.7 365.2 581.5 381.9 584.1 360.7 564.7 365.2 556.1 386.3 543.9 369.6 532 385.2 523.4 403.8 513 388.3 504 408.2 484.8 411.5 476 430.3 466.4 445.8 479.2 463.9 497.9 479 515.4 492.3 514.6 471.7 498.6 461.6 497.9 479 481.5 486.6 497 501.8 515.4 492.3 533.2 505.1 513.7 516.4M502 304.7L481 306.8 487.5 284 467.9 274.3 466.8 257.2 447.2 252.3 434.7 262 426.6 245.6 443.5 234.2 443.5 212.7 442.9 192.5 441.6 171.4 460 164.1 465.6 184.7 442.9 192.5 457.5 201.5 443.5 212.7 427.2 225 443.5 234.2 447.2 252.3 426.6 245.6 419.2 263.3 406.2 248 393.2 231.8 371.2 231.2 365.3 207.6 343.8 200.8 363.8 189.8 365.3 207.6 350.1 221.3 352.6 239.8 349.9 255.6 331.7 263 317.8 239.2 328.6 218.7 343.8 200.8 330.9 184.8 320.3 202.2 343.8 200.8 350.1 221.3 328.6 218.7 320.3 202.2 301.2 202.8 287.5 216.6 299.1 233.9 284 238.8 304.7 257.4 317.1 277.6 324 293.5 337.4 307.6 332.9 325.4 318.6 337.2 299.7 338.3 278.5 353.8 299 357.1 299.7 338.3 280 331.9 265.2 334.8 255.2 348.2 278.5 353.8 277.5 375.1 271.2 392.9 283.9 414.6 301.5 411.1 316.6 400.8 315.2 421.1 301.5 411.1 297.3 432.1 313.8 439.6 304.5 450.6 297.3 432.1 283.9 414.6 294.9 390.7 271.2 392.9 264.4 412.9 251.9 392.1 259.9 370.5 277.5 375.1 291.2 370.4 278.5 353.8 280 331.9 267.2 315.9 259.7 293.7 279.7 299.8 299.4 303.4 318.4 307.4 308.8 291.4M502 304.7L504.9 285 487.5 284 502 304.7 525.1 315.1 542.5 316.8 541.6 296.1 519.7 293.2 530.6 279.5 515.9 276.3 504.9 285M502 304.7L508 324.8 502.2 340.5 521.2 336.2 542.2 349.5 543.9 369.6 525.4 369.2 503.5 372.3 514.7 355 521.2 336.2 536.6 330.8M502 304.7L491 324 482.5 341.5 465.1 343.7 470.8 358.5 482.1 373.6 503.5 372.3 493.5 390.1 504 408.2 498.1 428.4 518.5 422 504 408.2 523.4 403.8 540.3 399.7 553.8 404.1 556.1 386.3M704.3 238.4L690.1 225.4 685.9 249.5 689.9 269.6 702.5 283.9 720.5 280.3 734.5 291.2 741.2 307.5 739.3 326.2 742 346.9 741.8 368.2 764.5 370.8 781.2 360.4 775.4 338.5 759.5 352.8 741.8 368.2 757.8 390.3 760.8 410.2 772.9 421.6 791.9 417.7 812.6 418.1 823.9 434.1 816.6 450.6 808.1 468 797.4 452.2 776.6 453.7 787.3 469.6 797.4 452.2 816.6 450.6 830.2 468.1 808.1 468 816.5 489.8 833.8 508.8 850.6 493.5 852.7 475.1 852.4 456.7 875.6 462.9 885.5 476.2 899.1 469.4 875.6 462.9 852.7 475.1 830.2 468.1 852.4 456.7 870.3 442 875.6 462.9 896.7 447.5 886.1 424.6 870.1 410.9 885.4 400.6 882.4 378.1 901.3 388.8 920 376.4 901.3 366.3 882.4 378.1 882.9 351.8 886.8 335.7 870.3 331.4 890.1 319.8 886.8 335.7 901.8 340.5 920 334.5 907.3 322.4 903.8 305.2 890.1 319.8 907.3 322.4 901.8 340.5 920 355.5 901.3 366.3 901.3 388.8 903.2 410.4 886.1 424.6 870.3 442 845.3 437.1 823.9 434.1 803.6 435 797.4 452.2 784.4 437 776.6 453.7 768.2 471.4 759.1 487.4 740.6 493.9 723.5 499.7 733.3 514.5 724.6 535.1M704.3 238.4L685.9 249.5 674 268.2 689.9 269.6 676.6 290.4 702.5 283.9 711.6 258.8 732.4 271.3 720.5 280.3 711.6 258.8 689.9 269.6M704.3 238.4L724.8 233.9 746.8 238.4 763.6 233.6 781.1 226.9 797.6 216.7 796.2 237.1 781.1 226.9 779.1 248.7 763.6 233.6 765.8 210.7 781.1 226.9 784.2 207.8 797.6 216.7 798.7 196.7 795.6 177.6 777.6 170.5 760 161 747 141.6 725.5 135.6 724 154.3 715.3 171.1 700.7 183.1 713 200.9 727.7 211.7 747 205 735.8 192.5 756.5 178.1 777.8 190.7 777.6 170.5 772.3 146.7 789.6 136 804.8 144.4 803 128.3 820.4 129.5 804.8 144.4 808.6 163.7 791.3 156.4 789.6 136 803 128.3 807.2 112.4 807.2 92.7 792.9 101 807.2 112.4 820.4 129.5 843.7 121.2 854.6 105.5M704.3 238.4L711.6 258.8 685.9 249.5 665.3 253.8 654.8 241.5 650.9 224 641.7 208.6 662.9 205.8 644.9 194.1 628.8 186.8 622.1 171 611.5 190.2 594.6 197.4 590.6 217.5 599.2 233 609.4 247 605.1 262.8 589.7 273.2 591.1 294.2 610.7 300.4 619 313.7 616.2 334.2 634.6 317.7 619 313.7 601.1 314.5 610.7 300.4 629.9 298.3 619 313.7M704.3 238.4L708 220.4 713 200.9 735.8 192.5 732.1 174.2 717.7 185.5 713 200.9 695.3 205 690.1 225.4 680.4 210.2 662.9 205.8 650.9 224 640.9 237 626.5 242.3 609.4 247 589.5 251.9 605.1 262.8 622.7 260.9 609.4 247 614.6 231.5 626.5 242.3 643.4 256.6 654.8 241.5 640.9 237 643.4 256.6 622.7 260.9 626.5 242.3 629.4 221.6 641.7 208.6M239 79.3L251.5 95.1 229.6 93.8 208.5 92.2 196.7 75.1 188.4 99.5 208.5 92.2 218.9 110.5 227.9 127.3 243.3 115 251.5 95.1 257.7 75.5 239 79.3 229.6 93.8 243.3 115 218.9 110.5 208.8 129.6 191.8 145 176.9 158.1 190.7 168.9 186.6 191.1 171.8 177 150 180.8 140.1 196.1 148.9 212.6 165.7 224.3 184.5 230.1 199.4 222.8 183.3 211.6 186.6 191.1 202.1 203.8 199.4 222.8 217.4 217.4 212.4 234.2M239 79.3L240.2 62.5 257.7 75.5 278.7 66.5 292.8 77.7 314 72.2 326.9 85.9 319.3 101.1 327.4 116.7 340.6 101.9 319.3 101.1 302.8 110.5 295.5 125.4 298.2 142.4 279.5 130 295.5 125.4 315.2 132.9 329.4 150 312.6 152.2 298.2 142.4 301.7 163.2 286.7 173.4 272.6 163.7 255.3 164.2 236.2 159.8 225.7 142.6 212 156.9 236.2 159.8 224.3 175.3 205.8 182.4 221.9 196.6 236.9 210.4 217.4 217.4 230.6 232.7 237.2 260 220.6 278.3 241.1 285.5 228.8 300.8 231.5 321.7 215.7 332.7 193.8 341.8 181.5 318.4 162.4 305.4 162.9 288.4 152.1 275.7 159.3 259 177.9 272.2 162.9 288.4 146.5 292.9 145.8 311.8 132.3 298.9 129.9 280.4 146.5 292.9 132.3 298.9 128 317.4 144.3 331.5 160.7 324.8 162.4 305.4 180.8 294.4 177.9 272.2 199.6 286.2 220.6 278.3M239 79.3L217.2 68.7 208.5 92.2 202.2 110.9 208.8 129.6M610.3 280.5L605.1 262.8M610.3 280.5L589.7 273.2 589.5 251.9 574 267.1 589.7 273.2 568.5 288.1 591.1 294.2 601.1 314.5 616.2 334.2 591.6 330.8 572.6 342.5 564.7 365.2 543.9 369.6M610.3 280.5L610.7 300.4M610.3 280.5L591.1 294.2 576.2 314.3 554.1 327.8 556.2 307.8 568.5 288.1 541.6 296.1 525.1 315.1 508 324.8 491 324 481 306.8 464 305.9 470.9 291.2M610.3 280.5L622.7 260.9 635.3 278.2 651 292.9 664 308 653.8 321.7 656.7 338.2 647 355.3 667.6 351.6 656.7 338.2 639.7 336.2 647 355.3 638.1 371.9 621.3 376.8 628.7 356.1 647 355.3 655 374.3 664.5 390.6 676.7 405.5 688.8 422.5 707.2 422.7 720.8 412.1 722.5 431.6 707.2 422.7 700 403.2 676.7 405.5 683 390.8 664.5 390.6 656.1 404.6M610.3 280.5L635.3 278.2 643.4 256.6 656.7 274.9 674 268.2 676.6 290.4 664 308 647.3 307.2 653.8 321.7 639.7 336.2 616.2 334.2 628.7 356.1 638.1 371.9 642.4 390.8 621.3 376.8 602.4 388.2 581.5 381.9 587.2 401.8 595.1 418.9 578.6 421.3 571.6 437.8 584 453.1 603.4 452.3 593.7 466.3 610.2 471.7 620.8 489.4 646.3 494.3 627.2 510.5 610.2 523.2 628.5 531.3 629.1 550.2 609.8 542.6 610.2 523.2 587.3 534.9 578.6 554.6 561.5 547.6 554 530.2 553.7 514 570.7 523 561.5 547.6 587.3 534.9 570.7 523 554 530.2 541.1 542.2 525.4 558.4 502.7 564.9 503.8 580 488.5 579.9 502.7 564.9 478.4 564.4 469.2 547 488.9 549.1 478.4 564.4 460.9 563.1 441.5 571.5 417.9 571.4 400.7 575.1 409.4 591 427 585.3M610.3 280.5L629.9 298.3 651 292.9 647.3 307.2 634.6 317.7 653.8 321.7 669.8 327.7 667.6 351.6 685.2 354.7 705 343.4 727.2 340.6 742 346.9 759.5 352.8 781.2 360.4 802.5 352.5 816.9 368.9 823.7 353.1 813.6 333.1 807.1 312.1 828.6 300.2 848.2 300.9 839.3 316.7 828.6 300.2 809.1 292.5 807.1 312.1 793.2 301.1 774.3 298.4 767.8 280.2 753.9 293.8 741.2 307.5 722.9 312.1 739.3 326.2 727.2 340.6 722.3 356.1 741.8 368.2 735.4 386.3 757.8 390.3 764.5 370.8 759.5 352.8 758.7 330.9 775.4 338.5 787.7 345.5 802.5 352.5 813.6 333.1 794.6 331.5 775.4 338.5 781.3 316.5 807.1 312.1 794.6 331.5 802.5 352.5 823.7 353.1 836.7 371.8 816.9 368.9 819.7 385.4 825.8 403 812.6 418.1 803.6 435 791.9 417.7 784.4 437 772.9 421.6 765.2 437.6 776.6 453.7 757 455 748.2 474.1 759.1 487.4 757 507.6 779.4 494.1 794.2 511.2 799.7 530.3 811.5 511.4 833.8 508.8 852 510.9 866.2 515.6 868.4 533.2 853.3 548.6 843.1 562 843.1 579.7 824.6 587.5 811.3 576.7 827.9 568 824.6 587.5 802.5 594.8 811.3 576.7 792.1 570.8 770.5 570.6 778.7 588.3 802.5 594.8 792.1 570.8 778.7 588.3 762.3 583.7 750.4 572.7 747.3 591.1 727.9 600.6 748.6 610 750.7 631.2 765.5 619.4 748.6 610 764.2 599.9 747.3 591.1 730.8 579.8 711.3 569.1 707.3 549.4 686.2 563 674.2 582.6 664.1 565.8 666.4 546.3 686.2 563 685.9 543.3 699.7 531.7 707.3 549.4 685.9 543.3 678.9 527.8 699.7 531.7 712.9 516.6 733.3 514.5 746.2 527.6 760.9 540.1 756.7 556.2 776.1 554 770.5 570.6 750.4 572.7 730.8 579.8 733 558.4M632.8 568.1L647.8 559 647.5 538.1 628.5 531.3 627.2 510.5 620.8 489.4 636 468.9 610.2 471.7 588 484.8 567.7 486.2 552.3 495.3 550.9 472.1 567.7 486.2 571.8 502.4 553.7 514 533.2 505.1 532.7 485 529.7 464.8 550.9 472.1 539.8 448.3 529.7 464.8 514.6 471.7 514.1 447.1 487.8 446.6 476 430.3 498.1 428.4 514.1 447.1 539.8 448.3 532.1 432.4 551.5 434.4 540.7 416.9 540.3 399.7M632.8 568.1L651 581.8 664.1 565.8M632.8 568.1L625 585.9 614.7 562 609.8 542.6 628.5 531.3 647.5 517.2 646.3 494.3 668.6 491.5 659.8 476.4 636 468.9 646.3 494.3M619.5 878.2L639.7 872.1 660.1 867.2 644.8 855.9 623.5 853.8 642.1 838.7 639.8 820.2 640.5 797.5 660.1 793.7 653.1 809.7 639.8 820.2 621.9 813.8 604.4 808 621.6 793.9 616.5 775.4 609.3 754.4 625.5 741.9 648.1 749.4 668.3 742.9 667.7 722 647.2 710.1 640 732 625.5 741.9 624 720.9 647.2 710.1 637.4 688.6 637.4 669.2 656.4 685 672.4 669.9 653.6 659.3 637.4 669.2 617 658.5 617.8 639 631.2 627.1 652.8 634.7 678.8 638.5 686.8 656.3 668 651.9 652.8 634.7 673.3 620.2 657 614.6 644.2 601 627.1 608.2 631.2 627.1 635.5 648.1 652.8 634.7 657 614.6 642.8 616.6 644.2 601 651 581.8 674.2 582.6 666 601 644.2 601 625 585.9 627.1 608.2 607.3 601.2 591 615.8 589 594.3 569 588.2 559.1 602.9 547.9 589.7 543.2 608.9 539.3 627.7 564.8 624.4 574.3 606.2 591 615.8 613 619.8 602.1 631.8 587.4 638.6 591 615.8M619.5 878.2L618.4 903.4 605.3 891.9 587.6 890.7 596.6 906.3 606.4 920 618.4 903.4 627.3 920 635.9 906.1 637.3 890.3 618.4 903.4M619.5 878.2L605.3 891.9M619.5 878.2L623.5 853.8 639.7 872.1 644.8 855.9 663.2 846 642.1 838.7 644.8 855.9M619.5 878.2L637.3 890.3 649.7 899.5 656.6 884.7 660.1 867.2 677.7 880 665.6 900.3 684.1 899.9 706.1 898.8 719.4 907.1 731.8 920 747.6 898.5 752.7 920 766.7 901.8 784.8 904.1 805.1 901.4 824.2 905.9 836.4 920 843.4 897.5 857.3 920 865.2 896.9 878.2 920 887.1 899 875.3 879.9 886.7 864.5 905 864.7 899.8 847.5 920 857.3 905 864.7 920 878.2 906.6 898.6 899.1 920 887.1 899 865.2 896.9 853.3 877.1 875.3 879.9 865.2 896.9 843.4 897.5 853.3 877.1 840.9 856.4 826.2 838.7 842 838.7 853 827 865.4 809.5 868.8 787.5 887.1 771.1 903.7 781.9 905.1 802.9 888.6 811.5 865.4 809.5 878.1 801 868.8 787.5 851.6 794.7 865.4 809.5 842.8 808.2 822.6 803.3 834 785.2 823.3 763.7 842.9 764.5 853.2 746 870.3 743.7 860.4 729.4 878 727.7 898.8 719.7 920 710.9 905.8 699.1 891 686.5 906.1 680.6 920 669.1 893.3 666.6 891 686.5 877.7 676.3 873.4 662.4 859.9 652.4 858.7 673.6 873.4 662.4 893.3 666.6 902.1 651.4 900.1 633.9 899.5 614.1 882.8 624.5 900.1 633.9 882.2 646.4 873.4 662.4M619.5 878.2L599.8 876.1 587.6 890.7 575.8 904.8 563.8 888.6 543.8 898.5 520.9 905.2 522.7 920M619.5 878.2L607.1 861.6 623.5 853.8M805.7 642.8L822 650 806.2 658.4 789.8 664.8 787.3 646.8 805.7 642.8 806.2 658.4 787.3 646.8 766.5 641 750.7 631.2 732.9 622.1 717 615.1 705.5 601.9 697.3 621.5 700.8 642.9 716.4 632.3 735 641.3 720.3 652.9 736.7 661.6 753 670.2 766.1 681.1 772.5 699.8 753.4 690.5 735.1 695.6 753.8 713.1 772.5 699.8 785.1 682.3 792.6 704.6 803.8 691.8M805.7 642.8L820.7 628.2 837 618.8 823.3 606 824.6 587.5 842 600.9 860.6 596.8 843.1 579.7 827.9 568 843.1 562 857.9 570.5 853.3 548.6 832.9 548.5 827.9 568 812.3 554.4 799.7 530.3 778.6 536 793.4 549.6 799.7 530.3 778.8 518 794.2 511.2 811.5 511.4 816.5 489.8 830.2 468.1 835.5 486.4 850.6 493.5 852 510.9 847.4 528.7 868.4 533.2 883.1 519.9 866.2 515.6 879.2 502.7 883.1 519.9 886.5 539.6 868.4 533.2 872.1 555.3 891.7 561.9 874.2 578.5 860.6 596.8 857.9 570.5 843.1 579.7 842 600.9 837 618.8M805.7 642.8L798.8 627.4 807.8 613.2 823.3 606 802.5 594.8 807.8 613.2 820.7 628.2 823.3 606 842 600.9 853.5 618.6 860.6 596.8 869.2 615.6 881.2 601.3 860.6 596.8M399.7 292.8L387 278.4 382.7 264.7 387.4 249.4 367.6 254.2 349.9 255.6 353.6 271.8 371 275.2 359.9 290.6 368.2 308.9 352.5 304.3M387 278.4L401.9 269.1 419.2 263.3 418 284.1 434.4 278.4 449.8 269.7 434.7 262M387 278.4L378.2 292.5 388.2 316.7 368.2 308.9 373 332.1 354.7 322.2 332.9 325.4 318.4 307.4 324 293.5M387 278.4L371 275.2 367.6 254.2M518.6 152.6L502.3 159.7 482.1 168.3 487.3 150.2 502.3 159.7 500.2 177.9 482.1 168.3 465.6 184.7 474.5 206 457.5 201.5 465.6 184.7 441.6 171.4 421.8 187.3 442.9 192.5 425.2 206.4 443.5 212.7 460.2 219.9 443.5 234.2 464.1 239 466.8 257.2 486.6 247.5 501.8 265.7 482.7 265 487.5 284M518.6 152.6L526.3 139.3 534.8 153.7 543 169.6 563.3 166.9 576.1 184.4 554.2 185.2 563.3 166.9 570.3 149.8 553.2 151.3 543 169.6 520.5 171.8 533.6 185.8M518.6 152.6L520.5 171.8 500.2 177.9 487.5 191.8 474.5 206 460.2 219.9 457.5 201.5M518.6 152.6L534.8 153.7 542.7 133 553.2 151.3 564.1 132.1 581.4 114.3 602 111.9M518.6 152.6L505.8 139.2 496.3 120.5 490 104.7 493.4 84.2 500.9 67.5 516 59.3 534 74.9 560.5 77.9 550.2 56.6 565.3 39.1 582.9 29.8 584.9 48.4 568.4 58.1M93.1 896.5L74.4 887.8 58 903.2 36.9 900.9 20.9 920 16.2 905 0 920M93.1 896.5L83.6 920 74.2 905.6 93.1 896.5 113.7 901.2 130.9 905.4 125.9 886.6 114.9 862.8 88.2 854.5 80.5 834.7 66 852 38.8 853.7 18.7 835.8 0 836.4 13.9 854.5 38.8 853.7 55.5 868.5 66 852 88.2 854.5 101.1 844.1 114.9 862.8 136 853.1 153 860 151.8 841.9 168.6 834 189.1 845.1 211.6 846.6 227.8 846.8 220.2 828.3 207.1 811.7 203.1 831.5 189.1 845.1 182.5 862 167.8 852.3 168.6 834 169.5 812.6 152.2 822 168.6 834 186.7 824.8 169.5 812.6 152.2 797.5 131.1 791.3 116.1 774.7 104 753.8 102.5 733 88.2 718.4 82.8 696.7 72.3 709.6 63.8 694.6 82.8 696.7 75.3 676.2 79.5 656.9 61.8 663.3 60.7 643.2 79.5 656.9 92.1 666 75.3 676.2 63.8 694.6 46.5 695.9 33.3 690.1 17.4 699.2 23.6 676.1 0 669.1 19.9 655.8 23.6 676.1 0 690 17.4 699.2 14.6 721 0 710.9 17.4 699.2 32.1 710 46.5 695.9 53.4 713 40.4 724.7 37.1 742.3 52.9 754.2 67.9 765.6 50.5 771.1 41.2 785.3 20.7 783 14.3 764 0 752.7 17 743.4 14.6 721 0 731.8 17 743.4 37.1 742.3 54.1 733.9 40.4 724.7 32.1 710 14.6 721 27.4 729.1 40.4 724.7M93.1 896.5L104.5 920 113.7 901.2 108.3 881.3 114.9 862.8 144.6 876.1 153 860 167.8 852.3 189.1 845.1 201.9 865.5 201 884.7 186.7 899.6 167.3 920 167.4 892.5 186.7 899.6 188.2 920 205.5 901.7 186.7 899.6 185.9 880.1 201 884.7 217.4 884.3 205.5 901.7 201 884.7M93.1 896.5L108.3 881.3 125.9 886.6 144.6 876.1 136 853.1 151.8 841.9 135.4 832.7 119.7 820.7 121.1 804.2 131.1 791.3 113.8 791.8 116.1 774.7 125 755.4 104 753.8 86.1 763.2 67.9 765.6 81.6 780 86.1 763.2 97.8 771.9 116.1 774.7 98 787.3 113.8 791.8 121.1 804.2 136.9 811.3 131.1 791.3 139.9 774.1 116.1 774.7M93.1 896.5L91.6 872.7 114.9 862.8 118 840.6 119.7 820.7 136.9 811.3 135.4 832.7 136 853.1 118 840.6 135.4 832.7 152.2 822 151.8 841.9 167.8 852.3 168.4 871.3 153 860M74.2 905.6L58 903.2 41.8 920 36.9 900.9 21.4 888.8 0 878.2 24.3 869.8 38.8 853.7 37.2 833.5 18.7 835.8 13.9 854.5 0 857.3M74.2 905.6L74.4 887.8 72.4 868.8 88.2 854.5 91.6 872.7 74.4 887.8 57.1 885.2 58 903.2 62.7 920 74.2 905.6M668.6 491.5L683.8 479.5 704 494.3 704.9 473.5 693.3 459.7 710.9 459.5 724.4 450.7 739.7 458.9 748.2 474.1 768.2 471.4 787.3 469.6 808.1 468 798.2 482.8 816.5 489.8 835.5 486.4 833.8 508.8 822 530.7 799.7 530.3M668.3 509.6L661.9 526.5 647.5 538.1 666.4 546.3 685.9 543.3M254.8 553.3L268.4 539.6 278.8 556.7 302.2 555 303.9 575.6M87.9 91.5L109.2 76.6 128.2 91 130.9 76.8 109.2 76.6 109.8 94 125.7 109.7 129.8 130.4 112.4 124.2 112.9 145.2 95.1 129.1 102 108.7 81.2 113.4 60.8 120.7 43.1 128.3 22.7 135 24.9 116.2 0 104.5 15.5 78.8 15.1 52.7 0 41.8 16.2 29.5 15.1 52.7 0 62.7 15.5 78.8 27.2 97.5 46.6 92 34.1 80.3M87.9 91.5L65.3 83.6 49.6 73.8 46.6 92 65.3 83.6 64.4 66.6 82.5 71.1 87.9 91.5 102 108.7 125.7 109.7 112.4 124.2 95.1 129.1 75.9 133.9 81.2 113.4 64.1 101.8 46.6 92 44.5 109.7 43.1 128.3 39.4 152.9 46 182.1M87.9 91.5L64.1 101.8 60.8 120.7 58.1 141.2 60.8 164.2 72.7 151.2M109.2 76.6L97.8 57.1 74.8 53.2 66.7 35.3 56.6 17.5 41.8 0 35.2 18.7 56.6 17.5 62.7 0 80.2 17.6 86.4 39.1 66.7 35.3 49 32.1 35.2 18.7 16.2 29.5 33.2 41.6 53.1 51.2 64.4 66.6M109.2 76.6L82.5 71.1 97.8 57.1 121.2 61.7 110.5 41.2 132.9 48.6 155.2 50.7 162.9 73.3 165.6 96.2 151.8 118.7 146.5 142.4 169.5 137.8 191.8 145 189.5 123.3 188.4 99.5 172.7 115.1 189.5 123.3 202.2 110.9 188.4 99.5 165.6 96.2 172.7 115.1M109.2 76.6L121.2 61.7 132.9 48.6 128.4 32.8 143.3 34 155.2 50.7 158.4 23.3 181.1 19.5 204 21.1 222.3 32.5 220.7 15.1 209.1 0 204 21.1 188.2 0 181.1 19.5 191.4 37.8 185.3 55.5 196.7 75.1 179.7 77.5 162.9 73.3 143.1 67.3 155.2 50.7 173.5 39.3 158.4 23.3 143.3 34 132.9 48.6 143.1 67.3 130.9 76.8 121.2 61.7 143.1 67.3 149 84.4 162.9 73.3 171.4 59.1 155.2 50.7M649.7 899.5L648.2 920 635.9 906.1M148.6 386.8L172 373.2 153.4 364.7 130.8 372.7 118 355.4 108.1 380.1 82.6 383.6 94.1 363 81 344 57.9 343.5M148.6 386.8L130.8 372.7 127.3 391 108.1 380.1 97.8 396.1 82.6 383.6 61.7 380.3 64.7 401.4 46.3 394.8 50 421.7 30.6 431.9 16.8 419 0 397.3 28.3 405.6 30.6 431.9 25.8 452.2 44.6 458.9 44.5 478.2 65.7 467.7 87.8 470.3 84.9 450.9 83.8 430 68.6 421.2 64.7 401.4 50 421.7 68.6 421.2 82.6 406.2 83.8 430 100.4 414.9 97.8 396.1 82.6 406.2 64.7 401.4 82.6 383.6 82.6 406.2 100.4 414.9 101.2 436.7 118.5 443.4 116.6 423 134.6 410.2 156.6 406 161.6 420.6 157.7 437.4 136.9 447.5 118.5 443.4 103.9 456.1 105.6 477.5 106.8 502.2 128.8 508.9 151.4 504.1 173.7 502.1 199.8 499.3 224.3 500.2 215.1 483.6 217.8 466.9 234.6 476 230 451.2 215.3 433.1 205.7 416.9 208.3 398.7 223 412.9 229.1 389.8 210.9 379.5 225.1 366.5 229.1 389.8 242.5 409.4 251.9 392.1 242.2 376.5 259.9 370.5 243.7 360.6 255.2 348.2 259.9 370.5M148.6 386.8L134.6 410.2 145.5 426.1 161.6 420.6 172.4 408.2 189.3 406.8 205.7 416.9 223 412.9 215.3 433.1 207.5 452.3 230 451.2 248.4 459.9 268.3 456.7 273.2 435.7 252.2 443.5 248.4 459.9 234.6 476 247.7 494.3 259.7 475.5 268.3 456.7 287.9 452.8 282.9 472.1 298.6 484 302.9 466.7 282.9 472.1 259.7 475.5 274.5 492.2M148.6 386.8L156.6 406 172.4 408.2 175.5 424.6 161.6 420.6M148.6 386.8L127.3 391 134.6 410.2 129.9 431 118.5 443.4 121.9 463.5 136.9 447.5 153.8 455 140.5 471.6 136.9 447.5 145.5 426.1 157.7 437.4 153.8 455 173.8 448.8 157.7 437.4 175.5 424.6 189.3 406.8 172.5 392.1 172.4 408.2M148.6 386.8L172.5 392.1 156.6 406 145.5 426.1 129.9 431 136.9 447.5M148.6 386.8L153.4 364.7 156.8 344.7 173.2 353.6 173.2 335.9 181.5 318.4 200.8 323.7 193.8 341.8 173.2 335.9 156.8 344.7 160.7 324.8 145.8 311.8 128 317.4 129.8 337.5 118 355.4 113.6 333.2 93.6 328.1 101.3 345.3 94.1 363 71.8 363.5 61.7 380.3 43.4 374.7 46.3 394.8 28.3 405.6 15.3 384.5 0 376.4 12.1 367.2 15.3 384.5 0 397.3M766.1 681.1L770.1 661.7 789.8 664.8M128 317.4L113.6 333.2 129.8 337.5M128 317.4L115.6 296.2 129.9 280.4 108.6 275.9 88.8 267.7 92.8 291.3 72.3 279.3 88.8 267.7 72.5 258.6 68.7 240.7 65.8 223.4 59.7 205.2 48.8 218M128 317.4L106 313.6 93.6 328.1 72.5 322.7 71.7 300.2 92.8 291.3 87.4 311.5 93.6 328.1 81 344 72.5 322.7 87.4 311.5 71.7 300.2 72.3 279.3 53.1 289.4 55.9 270.7 39.1 279.7M587.3 534.9L609.8 542.6 595.1 556.1 614.7 562 602.3 578.9 584 573.6 578.6 554.6 595.1 556.1 584 573.6 569 588.2 547.9 589.7 553.7 571.8 535.9 575.3 518.1 579 529 593.8 504.6 597.1 484.3 614.8 465.5 601.2 458.3 618.2M587.3 534.9L595.1 556.1 602.3 578.9 589 594.3 584 573.6 569.5 567.4 578.6 554.6M587.3 534.9L592.5 509.5 610.2 523.2 610.4 505.7 620.8 489.4 603.3 492 610.2 471.7M515.9 276.3L525.5 261.3 506.7 248.5M765.8 210.7L777.8 190.7 795.6 177.6 791.3 156.4 772.3 146.7 760 161M765.8 210.7L747 205 744.6 221.6 746.8 238.4 737.3 253.5 732.4 271.3 734.5 291.2 722.9 312.1 702.9 322.8 705 343.4 699.9 363.4 685.2 354.7 677.5 373.4 667.6 351.6 655 374.3 638.1 371.9M765.8 210.7L744.6 221.6 763.6 233.6 761 257.8 746.8 238.4M765.8 210.7L758.4 194.4 756.5 178.1M765.8 210.7L784.2 207.8 777.8 190.7 758.4 194.4 747 205M777.8 190.7L798.7 196.7 814.4 205.1 831.9 213.6 815.1 228.2 797.6 216.7 814.4 205.1 828.8 193.1 841.4 183.4M498.6 461.6L487.8 446.6 479.2 463.9 458.7 461.1 445.2 445.4 454.6 430.4 441.7 414.9 450.2 397.2 463.5 412.9 454.6 430.4 476 430.3 463.5 412.9 441.7 414.9 421.8 421.6 436.7 430.5M498.6 461.6L479.2 463.9 468.7 475.8 458.7 461.1 437.2 463.3 415.4 466.3 402 454.1 394.2 470.7 386.8 493.5 372.1 505.5M498.6 461.6L514.1 447.1 518.5 422 540.7 416.9 561.1 420.1 569.8 402.6 578.6 421.3 561.1 420.1 553.8 404.1 569.8 402.6 587.2 401.8 602.4 388.2 602.6 404.2 587.2 401.8 578.6 421.3 589.9 436.9 584 453.1 563.3 453.3 574.6 470.6 567.7 486.2M920 543.6L905.3 542.4 891.7 561.9 920 564.5 905.3 542.4 920 522.7 898.3 526 883.1 519.9 898 509.3 920 501.8 895.7 489.5 885.5 476.2 871.4 485.1 850.6 493.5 863.6 500.8 866.2 515.6 847.4 528.7 853.3 548.6 872.1 555.3 874.2 578.5 857.9 570.5 872.1 555.3 886.5 539.6 891.7 561.9 903.6 576.2 920 564.5M132.3 298.9L115.6 296.2 92.8 291.3 108.6 275.9 115.6 296.2 106 313.6 113.6 333.2 101.3 345.3 118 355.4M444.6 850.5L423 855.7 429.7 841.5 444.6 850.5 467.3 854.9 454.5 870.4 436.8 869.1 423 855.7 416.2 836 396.5 830.4 377.8 822.9 360.5 831.7 344.6 836.5 357 848.6 355.9 866.8 376.7 875.4 398.5 881.2 388.3 861.7 378.7 842.7 357 848.6 360.5 831.7 343.6 818.4 344.6 836.5 327.7 832.6 309.7 831.5 319 814 315.2 791.5 307.3 770 284.6 759.5 264.5 739 249 749.6 234.1 744.1 229.8 728.8 215.2 744.3 191.7 750.2 171.1 753.2 156.4 762 158.6 741.6 176.5 726.2 192.3 714.6 194.9 732.9 176.5 726.2 173.9 708.6 192.3 714.6 187.4 693.1 171.9 676.8 188.7 672.7 187.4 693.1 173.9 708.6 169.2 693.3 171.9 676.8 177.8 659.3 188.7 672.7 200.3 659.4 186.3 644.7 202.8 642.8 194.7 628.9 186.3 644.7 164.1 642.1 149.7 626.6 155.6 600.3 177.1 588.9 193.2 596.8 175.3 604.2 155.6 600.3 141.9 578.3 139.8 557 159.4 564.9 141.9 578.3 119.8 587.9 124.5 604.8 136.7 596.8 155.6 600.3 136.9 613.6 124.5 604.8 108.4 606.5 99.7 626.8 77.2 626.3 87.9 609.6 99.7 626.8 118.1 643.2 124.6 662.4 116.6 683.5 138.3 693.2 138.5 712.2 120.7 703.9 138.3 693.2 139.6 673.6 124.6 662.4 141 648.3 149.7 626.6 136.9 613.6 136.7 596.8 119.8 587.9 108.4 606.5 87.9 609.6 78 592.6 60.3 590.3 43.3 586.7 22.5 580.8 0 564.5 22.1 558 22.5 580.8 0 585.5 14.6 604.4 22.5 580.8 39.8 567.2 43.3 586.7 50.7 603.2 60.3 590.3 53.4 574.9 43.3 586.7 33.8 604 22.5 580.8M444.6 850.5L454.5 870.4 464 888.2 442.7 891.1 454.5 870.4 474.2 872 484.7 888.8 505.1 888.6 494.1 904.9 520.9 905.2 529 885.6 534.7 866.5 519.1 851.3 512.1 871 534.7 866.5 546.7 880.4 543.8 898.5 558 906.2 543.6 920M444.6 850.5L436.8 869.1 442.7 891.1 426.2 900.4 418.2 920 407.4 899.8 398.5 881.2 383.7 898.6 376.4 920 364.1 905.1 355.5 920 346.9 899.8 334.5 920 325.7 896.5 305.7 903.3 289 900 289.4 877.3 283.8 859.5 266.6 857.8 278.4 840 283.8 859.5 299.1 858.1 312.1 866.3 289.4 877.3 299.1 858.1 295.8 842.2 309.7 831.5 314.2 847.1 312.1 866.3 325 876.2 308.3 886 289 900 266.5 891.5 253.8 905.2 239 889.3 253.3 873.5 266.6 857.8 258.5 839.7 278.4 840 295.8 842.2 283.8 859.5 272.2 873.5 266.6 857.8 244.8 854.5 227.8 846.8 238.5 833.9 258.5 839.7 252.6 819.3 265.2 801.2 272.3 779.8 284.6 759.5 302.5 750.8 307.3 770 321.6 759.4 302.5 750.8 317.2 743.1 304.1 732.3 307.9 716.7 293.4 719.2 296.1 701.6 291.5 680.5 288.6 659.8 273.6 675.1 257.1 673.3 239.9 680.7 258 692.5 257.1 673.3 266.3 654 288.6 659.8 287.4 638.8 295.6 617.3 278.4 622.4 282.2 607 275.1 591.8 297 593.7 316.4 608.6 309.4 631.9 328.3 648 347.9 631.6 350.8 653.1 370.7 640.1 367.1 658.2 350.8 653.1 355.9 673.4 337.1 669.2 326 685.9 318.5 667.4 337.1 669.2 344.6 688.8 354.1 708.1 370.6 706.3 363.2 690.9 344.6 688.8 335.7 706.8 354.1 708.1 363.2 690.9 374.2 673.7 367.1 658.2M444.6 850.5L437.9 827.5 459.1 820.2 444 805.6 428.3 808.6 413.4 799.3 410.6 780.5 425.4 770.1 407.7 760.7 407.9 736.7 411.3 709.3 426.1 718.3 442.8 728.2 440.7 744.2 424.1 751.6 407.9 736.7 427.7 736.4 442.8 728.2 461.9 743 460.3 766.1 447.4 782.5 462.7 801.1 444 805.6 437.9 827.5 428.3 808.6 428.4 790.9 425.4 770.1 443.7 759.9 460.3 766.1 468.4 781.3 480 794.9 494.6 799.6 482.7 817.9 480 794.9M444.6 850.5L460.6 838.5 467.3 854.9 482 841.6 499.6 854.7 483.6 858.6 467.3 854.9 474.2 872 464 888.2 473.9 903.9 460 920 456.5 904.2M184.5 230.1L197 245.2 188.8 258.8 175.5 248.1 197 245.2M184.5 230.1L175.5 248.1 159.3 259 158.2 241.6 165.7 224.3M184.5 230.1L183.3 211.6 202.1 203.8 205.8 182.4 190.7 168.9 171.8 177 158.7 160.2 176.9 158.1M539.6 752.2L539 771.2M539.6 752.2L522.7 762.2 500.4 754.4 510.2 773M539.6 752.2L535.8 735.5M539.6 752.2L552.4 738.7 554.8 751.9 556.9 766.2 567.3 781.6 569.7 802 585.2 816.6 582.9 837.8 590.8 857.6 602.2 844 601.6 825.2 604.4 808 603.3 790.9 597.7 770.1 584 785.8 589.5 801.4 585.2 816.6 601.6 825.2 582.9 837.8M539.6 752.2L556.9 766.2M539.6 752.2L519.7 743 522 723.6 545.6 720 567.2 725.7 559.3 712.1 545.6 720M539.6 752.2L554.8 751.9 569.3 748.4M92.1 666L107.9 664.5 124.6 662.4M92.1 666L99.1 648.6 99.7 626.8 84.5 639.7 79.5 656.9 99.1 648.6 84.5 639.7 77.2 626.3 62.4 627.4 60.7 643.2 77.2 626.3 66.4 611.5 78 592.6 89.3 574.8 78.5 561.5 58.2 557.7 56.9 532.7 65.5 508.3 44 515.9 22.2 520.7 0 501.8 23.5 488.8 44.5 478.2 59.8 487.4 65.5 508.3 77.4 526.7 91.2 535.4 95.3 520.5 106.8 502.2 111 526.9 128.8 508.9 139.1 492 151.4 504.1 156.7 486.7 173.7 502.1 167.8 520.3 151.4 504.1 146.1 521 128.8 508.9 129.6 527.4 111 526.9 91.2 535.4 99.3 552.7 111 526.9 122.8 543.5 139.8 557 142.4 538 157.6 532.9 167.8 520.3 171.9 540.7 157.6 532.9 157.2 548.7 139.8 557 121.4 565.2 119.8 587.9 106.5 574.4 89.3 574.8 69.2 575.1 78 592.6 98.3 592 119.8 587.9M92.1 666L94.9 682 82.8 696.7 101 700.5 120.7 703.9 106.8 715.8 102.5 733 118.2 740 104 753.8 97.8 771.9 98 787.3 81.6 780 97.8 771.9M305.7 903.3L308.3 886 312.1 866.3 334 855.7 344.6 836.5M305.7 903.3L292.7 920 289 900 271.8 920 266.5 891.5 239 889.3 238.5 906.8 253.8 905.2 250.9 920 238.5 906.8 230 920 222.8 904.3 209.1 920 205.5 901.7 222.8 904.3 239 889.3 227.6 866.4 211.6 846.6 220.2 828.3 238.5 833.9 252.6 819.3 247.5 799.7 235.2 787.7 252.7 782.1 272.3 779.8 281.3 794 265.2 801.2 247.5 799.7 252.7 782.1 265.2 801.2 271.4 822.5 278.4 840 293.7 822.2 319 814 343.6 818.4 354.5 801 347.5 783 327.8 778.5 307.3 770 293.3 782.2 272.3 779.8 261.9 762.5 264.5 739 245.3 735.6 229.8 728.8 211.1 723.3 215.2 744.3 234.1 744.1 245.3 735.6 249 749.6 261.9 762.5 284.6 759.5 293.3 782.2 281.3 794 298.5 801.8 319 814 327.7 832.6 343.6 818.4 361.4 816.5 360.5 831.7 378.7 842.7 396.5 830.4 396 810.8 374.8 805.6 377.8 822.9 378.7 842.7 370.8 858.8 357 848.6 334 855.7 355.9 866.8 361.6 886.7 376.7 875.4 388.3 861.7 370.8 858.8 355.9 866.8 342 879.6 346.9 899.8 361.6 886.7 383.7 898.6 397.3 920 407.4 899.8 383.7 898.6 364.1 905.1 346.9 899.8 325.7 896.5 325 876.2 334 855.7 314.2 847.1 299.1 858.1M305.7 903.3L313.6 920 325.7 896.5 308.3 886 289.4 877.3 266.5 891.5 253.3 873.5 244.8 854.5 258.5 839.7 271.4 822.5 252.6 819.3 231.7 811.2 235.2 787.7 220.8 778 207.9 764.7 215.2 744.3 194.9 732.9 191.7 750.2 178.7 769.5 156.4 762 158.9 778.9 178.7 769.5 171.1 753.2 158.6 741.6 157.3 720.3 176.5 726.2 178.6 740.9 158.6 741.6 141.7 754.5 156.4 762 139.9 774.1 158.9 778.9 152.2 797.5 139.9 774.1 125 755.4 141.7 754.5 139.9 774.1M810.9 246.2L796.2 237.1 779.1 248.7 782.1 269.5 767.8 280.2 788.6 286.5 774.3 298.4 753.9 293.8 734.5 291.2 716.6 296.1 720.5 280.3M810.9 246.2L825.5 245.4 836.7 233.2 841.9 249.8 861.8 252.6 857.4 236.2 851.6 219.5 869.7 224.2 885.5 221.5 903 218.1 920 209.1 906.5 197.6 920 188.2 907.4 178.6 906.5 197.6 889.9 184.4 876.9 167.1 859.4 157.7 863.3 136.5 875.8 150.9M810.9 246.2L821.4 261.5 803.4 275.8 809.1 292.5 793.2 301.1 781.3 316.5 774.3 298.4 757.6 311.9 741.2 307.5M810.9 246.2L797.7 256.8 779.1 248.7 761 257.8 767.8 280.2 749.1 274.4 737.3 253.5 724.8 233.9 744.6 221.6 727.7 211.7 735.8 192.5 758.4 194.4M810.9 246.2L815.1 228.2 836.7 233.2 857.4 236.2 869.7 224.2 872.2 204.4 889.9 184.4 896.7 158.2 885.7 138 903.2 139.1 899.4 123.3 920 104.5 892.7 104.8 878.6 120.7 885.7 138 863.3 136.5 841.6 143.1 843.7 121.2 862.1 118 878.6 120.7 899.4 123.3 920 125.5 903.2 139.1 896.7 158.2 907.4 178.6M821.4 261.5L843.9 266.1 844.7 283.5 848.2 300.9 869.2 305.7 890.1 319.8 887.8 300.3 903.8 305.2 899.7 286.9 920 292.7 903.8 305.2 920 313.6 907.3 322.4M821.4 261.5L825.5 245.4 841.9 249.8 843.9 266.1 862.4 270 844.7 283.5 828.6 300.2 823.9 318.2 813.6 333.1 832.4 334.4 823.7 353.1 842.8 351.5 853.3 363.9 836.7 371.8 841.2 390.8 825.8 403 849.4 407.5 870.1 410.9 859.8 424.3 886.1 424.6 905.9 428.2 903.2 410.4 920 397.3 901.3 388.8 885.4 400.6 886.1 424.6M821.4 261.5L797.7 256.8 803.4 275.8 788.6 286.5 809.1 292.5 825 280.1 828.6 300.2M821.4 261.5L841.9 249.8 857.4 236.2 876.1 238.9 894.3 236.5 882.6 256.8 862.4 270 861.8 252.6 843.9 266.1 825 280.1 803.4 275.8 782.1 269.5 788.6 286.5 793.2 301.1M821.4 261.5L825 280.1 844.7 283.5 860.3 287.2 848.2 300.9 854.6 318.4 839.3 316.7 849.8 334.1 860.6 349.2 853.3 363.9 859.5 378 882.4 378.1 868.8 363.3 853.3 363.9M683.8 479.5L693.3 459.7 703.8 441.4 707.2 422.7M683.8 479.5L659.8 476.4 672.5 460.2 693.3 459.7 681 440.6 688.8 422.5 659.8 423.7 681 440.6 662.6 443.5 654.1 458.5 636 468.9M683.8 479.5L704.9 473.5 710.9 459.5 703.8 441.4 724.4 450.7 722.5 431.6 735.7 422.6 720.8 412.1 700 403.2 688.8 422.5 703.8 441.4 722.5 431.6 743 439.7 724.4 450.7 725.5 476.7 704 494.3M683.8 479.5L672.5 460.2 662.6 443.5M683.8 479.5L683.2 498.4M704.9 473.5L725.5 476.7 739.7 458.9 757 455 768.2 471.4 779.4 494.1 759.1 487.4M550.9 270.8L568.5 288.1 574 267.1 550.9 270.8 546.6 248.6 525.5 261.3 501.8 265.7M550.9 270.8L568.1 251.6 589.5 251.9 599.2 233 609.8 213.4 626.2 202.2 629.4 221.6 650.9 224 670.6 231.1 690.1 225.4 708 220.4 727.7 211.7 724.8 233.9 711.6 258.8 737.3 253.5 761 257.8 782.1 269.5 797.7 256.8 796.2 237.1 815.1 228.2 825.5 245.4M550.9 270.8L541.6 296.1 530.6 279.5 550.9 270.8 525.5 261.3 530.6 279.5M173.8 448.8L180.2 465.6 197.6 472.9 215.1 483.6 199.8 499.3 178.1 483.2 197.6 472.9 190.7 454.8 173.8 448.8 163.6 468.7 153.8 455M173.8 448.8L175.5 424.6 193.9 433.3 189.3 406.8M173.8 448.8L193.9 433.3 215.3 433.1 235.6 430 230 451.2M188.4 99.5L179.7 77.5 185.3 55.5 173.5 39.3 181.1 19.5 167.3 0 158.4 23.3 146.4 0 137.2 18 128.4 32.8M203.1 831.5L211.6 846.6 201.9 865.5 182.5 862 185.9 880.1 167.4 892.5 144.6 876.1 146.6 900.2 130.9 905.4 125.5 920 113.7 901.2 125.9 886.6 146.6 900.2 167.3 920M203.1 831.5L220.2 828.3 231.7 811.2 207.1 811.7 187.1 804.5 169.5 812.6 174.8 790.4 158.9 778.9M203.1 831.5L186.7 824.8 189.1 845.1M232.8 343.3L243.7 360.6 225.1 366.5 232.8 343.3 215.7 332.7 215 349.3 193.8 341.8 204.3 362.3 191.7 381.1M232.8 343.3L255.2 348.2 248.9 327.2 265.2 334.8M232.8 343.3L231.5 321.7 248.9 327.2 267.2 315.9 290.2 318.5 299.7 338.3 310.2 321.7 299.4 303.4 290.2 318.5 279.7 299.8 271.3 279.6 259.1 259.8 237.2 260 215.9 252.6 201.7 266.1 199.6 286.2 212.3 298.2 197.1 306.2 181.5 318.4 160.7 324.8 173.2 335.9M232.8 343.3L215 349.3 204.3 362.3 210.9 379.5M232.8 343.3L248.9 327.2 246.5 306.8 228.8 300.8 214.6 315 215.7 332.7 200.8 323.7 197.1 306.2 199.6 286.2 180.8 294.4 181.5 318.4M712.8 586.1L711.3 569.1 695.3 583.4 686.2 563M712.8 586.1L695.3 583.4 674.2 582.6 685.7 602.9 697.3 621.5M712.8 586.1L727.9 600.6 732.9 622.1 735 641.3 750.7 631.2 751.5 651 766.5 641 780.2 628.3 784.8 610 798.8 627.4 820.7 628.2M712.8 586.1L705.5 601.9 727.9 600.6 717 615.1M712.8 586.1L730.8 579.8 727.9 600.6M651 581.8L647.8 559 666.4 546.3 678.9 527.8 661.9 526.5 647.5 517.2 627.2 510.5 610.4 505.7 603.3 492 588 484.8 571.8 502.4 552.3 495.3 533.2 505.1 536.4 524.6 554 530.2M651 581.8L666 601 673.3 620.2 685.7 602.9 705.5 601.9 695.3 583.4 685.7 602.9 666 601 657 614.6M651 581.8L625 585.9 607.3 601.2 589 594.3 574.3 606.2 559.1 602.9M677.7 880L684.1 899.9 695.4 883.8 706.1 898.8 727.7 891.8 747.6 898.5 766.7 901.8 759.5 886.2 744.3 877.3 743.1 856.9 728 851.5 727.4 868.8 743.1 856.9 757.4 843.8 774 851.4M677.7 880L680.7 858.8 696.4 867.1 712.9 857.5 727.4 868.8 727.7 891.8 719.4 907.1M677.7 880L695.4 883.8 711.3 877.5 727.4 868.8 744.3 877.3 747.6 898.5M677.7 880L656.6 884.7 639.7 872.1 637.3 890.3 656.6 884.7 665.6 900.3 648.2 920M677.7 880L696.4 867.1 695.4 883.8M409.4 591L387.2 587.6 380.8 607 367.6 596.8 352.9 586.7 369.8 576.7 385.5 567.3 387.2 587.6M409.4 591L417.9 571.4 428.9 554.3 418.7 535.9 433.4 519.1 429.4 499.3 451.2 506.9 445.5 492M409.4 591L425.2 601.3 444.7 597.2 465.5 601.2 481 595.1 484.3 614.8 494.3 637.7 476.6 631.1M409.4 591L396.6 607 380.8 607 366.4 618.4 384.6 623.2 370.7 640.1M409.4 591L413.4 611.9 432.9 618.1M692.7 786.1L676.7 795.8M692.7 786.1L690.6 807.6M692.7 786.1L709.3 798.7 712.7 782.6 726.5 791.8 728.2 771.3 742.6 787.1 750.5 771.3 740.3 753.3 746.8 734.5 724.1 736.3 705.6 745.4 704.5 720.5M692.7 786.1L712.7 782.6 728.2 771.3 740.3 753.3 760.5 755.4 770.5 773.9 750.5 771.3 759.7 787.2 775.9 790.7 787.3 808.7M692.7 786.1L705.4 766.6 685.1 770.1M905 864.7L897.3 880.1 886.7 864.5 863.6 862.3 858.7 844.6 840.9 856.4 834.5 874.5 843.4 897.5 824.2 905.9 822.9 888.9 805.1 901.4 815.5 920 824.2 905.9M444.7 597.2L464.6 582 441.5 571.5M743 439.7L739.7 458.9M743 439.7L735.7 422.6 740.4 405.7 720.8 412.1 719.8 393.8 735.4 386.3 718.8 374.7 741.8 368.2M743 439.7L765.2 437.6 784.4 437 803.6 435 816.6 450.6 834 449.3 823.9 434.1 835.3 419.2 812.6 418.1 801.4 397.9 825.8 403 835.3 419.2 859.8 424.3 870.3 442 896.7 447.5 899.1 469.4 920 460 896.7 447.5 905.9 428.2 920 418.2 903.2 410.4 885.4 400.6 865.9 394.9 870.1 410.9M743 439.7L757 455 765.2 437.6 752.8 423.6 760.8 410.2 740.4 405.7 735.4 386.3M743 439.7L752.8 423.6 772.9 421.6 778.2 403.8 760.8 410.2M757.8 390.3L740.4 405.7 719.8 393.8 718.8 374.7 699.9 363.4 722.3 356.1 742 346.9 758.7 330.9 739.3 326.2 757.6 311.9 753.9 293.8 749.1 274.4 734.5 291.2M757.8 390.3L781.1 383.7 781.2 360.4 787.7 345.5 794.6 331.5 781.3 316.5 758.7 330.9 757.6 311.9 781.3 316.5M757.8 390.3L778.2 403.8 791.9 417.7 801.4 397.9 819.7 385.4 836.7 371.8 859.5 378 841.2 390.8 819.7 385.4 800.9 374.1 816.9 368.9M200.1 55.8L196.7 75.1 217.2 68.7 229.6 93.8 218.9 110.5 202.2 110.9M200.1 55.8L185.3 55.5 171.4 59.1 179.7 77.5 165.6 96.2 146 100.9 128.2 91 149 84.4 165.6 96.2M200.1 55.8L217.2 68.7 240.2 62.5 261.7 53.3 257.7 75.5 273.5 87.3 251.5 95.1 268.1 109.3 279.5 130 285.2 152.7 272.6 163.7 265.9 184.5 286.7 173.4 285.2 152.7 298.2 142.4 315.2 132.9 327.4 116.7 302.8 110.5 315.2 132.9 312.6 152.2 301.7 163.2 321.1 168.3 329.4 150 349.5 141.6 369.4 149.4 387.4 164.1 402.9 161.8 411.6 148.1 401.8 130.3 420.6 130.5 411.6 148.1 392.9 146 369.4 149.4 380.9 131.7 371.8 116 379.5 98.2 367 82.6 355.6 63.2 351.6 41.3 345.3 20.3 355.5 0 364.6 13.3 345.3 20.3 361.9 28 351.6 41.3 370.8 45.9 395.5 43.7 386.8 59.5 370.8 45.9 355.6 63.2 373.8 65.8 367 82.6 360.1 100.8 371.8 116 364 131.3 369.4 149.4 345.2 164.7 329.4 150 335.5 132.2 327.4 116.7 350.4 120.4 371.8 116 391.2 114.7 379.5 98.2 360.1 100.8 340.6 101.9 326.9 85.9 346.9 83.4 367 82.6 389.1 80.8 386.8 59.5 403.4 65.4 395.5 43.7 402.9 24.6 421.6 16.4 418.2 0 402.9 24.6 397.3 0 381 21.7 395.5 43.7 415 55.1 403.4 65.4 424.8 72.1 423.4 95.3 400.4 98.8 379.5 98.2 389.1 80.8 403.4 65.4 408.8 83.8 423.4 95.3 411.8 113.6 401.8 130.3 380.9 131.7 364 131.3 349.5 141.6 350.4 120.4 360.1 100.8 346.9 83.4 355.6 63.2 340.9 53 351.6 41.3 332.5 38 345.3 20.3 321.6 22.6 313.8 40.7 332.5 38 340.9 53 322.8 54.3 313.8 40.7 297.5 27.1 300.3 55.5 292.8 77.7 287 98.1 302.8 110.5 285 114.2 295.5 125.4M200.1 55.8L210.1 44.3 204 21.1 191.4 37.8 210.1 44.3 222.3 32.5 226.1 51.1 240.2 62.5 241.2 43.7 222.3 32.5 238.5 21.7 241.2 43.7 261.7 53.3 278.7 66.5 282.7 47.2 261.7 53.3 256.1 34.9 261.4 18.1 279.4 15.6 271.8 0 261.4 18.1 250.9 0 238.5 21.7 230 0 220.7 15.1 238.5 21.7 256.1 34.9 273.6 33 279.4 15.6 292.7 0 297.5 27.1 279.4 15.6M200.1 55.8L191.4 37.8 173.5 39.3 171.4 59.1M584.9 48.4L580.4 70.1 580.6 89.7 581.4 114.3 563.1 111.8 548.8 98 538.1 111.5 520.9 119 542.7 133M584.9 48.4L565.3 39.1 554 20.5 541.5 37.3 565.3 39.1M584.9 48.4L604.1 46.6 599.1 31 592.3 15.1 582.9 29.8M604.1 46.6L617.6 37.3 612.5 17.1 606.4 0 592.3 15.1 612.5 17.1 627.3 0M215.1 483.6L234.6 476 224.3 500.2 214.2 525.2 224.7 546 223.2 564 242.6 575.6 235.5 596.7 215.8 587.5 202.9 566.3 194.8 580.8 193.2 596.8 215.8 587.5 223.2 564 209.6 548.4 202.9 566.3 180.5 570.2 159.4 564.9 173 555.9 189.8 550.4 171.9 540.7 157.2 548.7 159.4 564.9 162.4 580.1 155.6 600.3 168 620 149.7 626.6 132.6 631.2 136.9 613.6 119.1 621.1 124.5 604.8M217.8 466.9L207.5 452.3 197.6 472.9M77.2 799.6L53.7 802.8 41.2 785.3 32.6 763.4 20.7 783 0 773.6 14.3 764 17 743.4 32.6 763.4 50.5 771.1 52.9 754.2 54.1 733.9 53.4 713 63.8 694.6 50.3 678.1 23.6 676.1 33.3 690.1 32.1 710 53.4 713 72.3 709.6 88.2 718.4 106.8 715.8 101 700.5 88.2 718.4 78.5 743.9 67.9 765.6 61 784.7 50.5 771.1M77.2 799.6L98 787.3 100.8 806.4 119.7 820.7 99.8 827.6 80.5 834.7 83.4 816.5 99.8 827.6 118 840.6 101.1 844.1 80.5 834.7 65.5 818.6 53.7 802.8 45.3 818.9 37.2 833.5 25.8 817.4 18.7 835.8 0 815.5 15.9 801 20.7 783 0 794.5 15.9 801 25.8 817.4 45.3 818.9 65.5 818.6 83.4 816.5 100.8 806.4 121.1 804.2M77.2 799.6L83.4 816.5M77.2 799.6L81.6 780 61 784.7 41.2 785.3 33 801.2 20.7 783M77.2 799.6L65.5 818.6 56.8 835.8 38.8 853.7 39.9 879.1 21.4 888.8 0 899.1 16.2 905 21.4 888.8 24.3 869.8 13.9 854.5 0 878.2M77.2 799.6L100.8 806.4 113.8 791.8M77.2 799.6L61 784.7 53.7 802.8 33 801.2 15.9 801M871.2 101.2L878.6 120.7 863.3 136.5 862.1 118M883.2 88.3L900.1 87 920 104.5M712.7 782.6L705.4 766.6 721.9 753.3 705.6 745.4 686.5 733.8 683.2 710.3 698.3 695.1 694.1 675.1 706.4 661.9 700.8 642.9 686.8 656.3 706.4 661.9M317.8 239.2L299.1 233.9 304.7 257.4 280.3 259.9 263.9 239.4 284 238.8 268.5 220.4 287.5 216.6 307.6 218 320.3 202.2 306.9 185 330.9 184.8 321.1 168.3 312.6 152.2M317.8 239.2L304.7 257.4M317.8 239.2L307.6 218 328.6 218.7 335.3 233.2 352.6 239.8 337.3 246.7 331.7 263M317.8 239.2L337.3 246.7 349.9 255.6M317.8 239.2L335.3 233.2 350.1 221.3 371.2 231.2 387.4 249.4 393.2 231.8 406.6 217.6 403.2 199.5 421.8 187.3 401.9 179.1 387.4 164.1 392.9 146 402.9 161.8 401.9 179.1 403.2 199.5 385.2 213.8 393.2 231.8 412 233.2 406.6 217.6 427.2 225 412 233.2 406.2 248 426.6 245.6 412 233.2M576.2 314.3L568.5 288.1M576.2 314.3L591.6 330.8 596.8 348.4 616.2 334.2 612.8 356.3 621.3 376.8 600.4 368.2 581.5 381.9M576.2 314.3L601.1 314.5 591.6 330.8M576.2 314.3L556.2 307.8 542.5 316.8M576.2 314.3L572.6 342.5 584.1 360.7 596.8 348.4 600.4 368.2 584.1 360.7M242.2 376.5L229.1 389.8M242.2 376.5L243.7 360.6M242.2 376.5L225.1 366.5 215 349.3M225.1 366.5L204.3 362.3 187.6 361.2M602.7 647L617.8 639 613 619.8 631.2 627.1 642.8 616.6 652.8 634.7 653.6 659.3 668 651.9M602.7 647L602.1 631.8M602.7 647L595 662.3 589.4 684.6 597.2 700.6 614.2 680.9 589.4 684.6 574.2 703.7 551.3 698 568.8 684.1 578.8 669.5 589.4 684.6 568.8 684.1 547.7 677.7 532.9 688.5 551.3 698M602.7 647L617 658.5 635.5 648.1 653.6 659.3 656.4 685 637.4 688.6 621.5 700.7 624 720.9 606.5 713.4M602.7 647L587.4 638.6 564.8 624.4 573 649.7 578.8 669.5 560.9 663.7 538.4 658.9 532.4 643.2 516.9 633.5 522 613.9 503.8 620.6 484.3 614.8M408.8 83.8L424.8 72.1 430.1 56.1 441.3 44.7 434.9 29.6 421.6 16.4 439.1 0 442.2 15 421.6 16.4 419.8 39.1 395.5 43.7M408.8 83.8L389.1 80.8 373.8 65.8 386.8 59.5M408.8 83.8L400.4 98.8 389.1 80.8M654.8 241.5L670.6 231.1 680.4 210.2 680.7 188.7 666.9 168.3 686.5 168.9 683.3 150.6 662.8 145.6 666.9 168.3 662 186.7 644.9 194.1 646 177.8 666.9 168.3M193.9 433.3L205.7 416.9M193.9 433.3L190.7 454.8 180.2 465.6 178.1 483.2 173.7 502.1 189.8 518.5 198.3 535.6 184.1 533.1 189.8 550.4 180.5 570.2 177.1 588.9 175.3 604.2 186.3 614.6 193.2 596.8 204.7 610.9 194.7 628.9 211.9 629.8 228.4 634.4 246.9 640.9 263.6 631 243.9 616.8 228.4 634.4 223 613 235.5 596.7 243.9 616.8 246.9 640.9 266.3 654 273.6 675.1 291.5 680.5 308.5 684.2 326 685.9 317.6 703.8 307.9 716.7 296.1 701.6 308.5 684.2 318.5 667.4 328.3 648 326.4 627.5 316.4 608.6 335.6 597.5 352.9 586.7 351.4 608.1 336.1 616.1 347.9 631.6M193.9 433.3L207.5 452.3 190.7 454.8M350.4 120.4L340.6 101.9 346.9 83.4 334.4 67.9 355.6 63.2M350.4 120.4L364 131.3M350.4 120.4L335.5 132.2 349.5 141.6 345.2 164.7 330.9 184.8 349.9 182.5 343.8 200.8M493.4 84.2L512.2 80.7 534 74.9 525.4 97.1 538.1 111.5M493.4 84.2L476.4 80.5 482.9 63.5 461.6 72.5 476.4 80.5 462.5 93.9 456.8 114.3 475.4 114.7 479.2 95.7 493.4 84.2M500.9 67.5L512.2 80.7 516 59.3 532 52.8 541.5 37.3 550.2 56.6 532 52.8M441.3 126.6L420.6 130.5 411.8 113.6 400.4 98.8 391.2 114.7 401.8 130.3 392.9 146 380.9 131.7 391.2 114.7 411.8 113.6 429.1 113.1 423.4 95.3 443.3 102.4 456.8 114.3 441.3 126.6 429.1 113.1 420.6 130.5 430.1 149.8 411.6 148.1 418.3 167.4 402.9 161.8M441.3 126.6L448.7 149.3 441.6 171.4 430.1 149.8 448.7 149.3 460 164.1 468.6 149.9 448.7 149.3 461 131.9 482.3 134.8 505.8 139.2 487.3 150.2M441.3 126.6L443.3 102.4 462.5 93.9 461.6 72.5 444.5 63.9 424.8 72.1 415 55.1 430.1 56.1 444.5 63.9 441.3 44.7 452.7 27.6 474.7 25.4 493.8 35.4M441.3 126.6L430.1 149.8 418.3 167.4 441.6 171.4M441.3 126.6L461 131.9 456.8 114.3M649.8 774.1L648.1 749.4 630.5 761.1 632.6 779.6 616.5 775.4 603.3 790.9 589.5 801.4M649.8 774.1L640.5 797.5 621.6 793.9 632.6 779.6 649.8 774.1M648.1 749.4L668 761.9 686.8 754.3 686.5 733.8 667.7 722 683.2 710.3 666 703.7 656.4 685M648.1 749.4L654.8 731.8 640 732 648.1 749.4M200.3 659.4L202.8 642.8 211.9 629.8 204.7 610.9 215.8 587.5 242.6 575.6 266.7 574.4 275.1 591.8 255.3 593 235.5 596.7M200.3 659.4L222.5 668.1 239.9 680.7 223.8 691.3 222.5 668.1 204.3 681.5 207.3 703.4 192.3 714.6 211.1 723.3 194.9 732.9 178.6 740.9 191.7 750.2 207.9 764.7 178.7 769.5 199.9 785.6 207.1 811.7 219.1 795.2 235.2 787.7 235.8 763.5 215.2 744.3M200.3 659.4L177.8 659.3 186.3 644.7 178.8 631 194.7 628.9 186.3 614.6 204.7 610.9 223 613 215.8 587.5 194.8 580.8 177.1 588.9 162.4 580.1 141.9 578.3 136.7 596.8M200.3 659.4L204.3 681.5 188.7 672.7M200.3 659.4L217 648.7 228.4 634.4 232.8 651.4 222.5 668.1 244.8 662.1 257.1 673.3M284.6 759.5L285.4 734.9 264.5 739 249.4 717 229.8 728.8 227.8 710.5 211.1 723.3 207.3 703.4 187.4 693.1 169.2 693.3 155.3 684.5 138.3 693.2 155.2 702.4 138.5 712.2 157.3 720.3 173.9 708.6 155.2 702.4 169.2 693.3M817.6 746.2L823.3 763.7 802.2 756.7 787.7 737.4 800 722 779 718.9 787.7 737.4 780.1 756.6 770.5 773.9 775.9 790.7 790.7 781.4 811.7 781.8 804.9 799.1 790.7 781.4 802.2 756.7 811.7 781.8 834 785.2 842.9 764.5 833.7 746.4 819.5 728.8 800 722 811.5 707.8 829.9 711 821.7 689.2M817.6 746.2L833.7 746.4 841.7 729.6 860.4 729.4 865.6 711.4 854.5 694.7 874 693.4 891 686.5 891.2 702.9 905.8 699.1 920 690 906.1 680.6 893.3 666.6 877.7 676.3 858.7 673.6 839.6 679.6 837.7 696.3 848.4 712.8 865.6 711.4 878 727.7 870.3 743.7 867.1 762.5 853.2 746 841.7 729.6 848.4 712.8 829.9 711 819.5 728.8 811.5 707.8 792.6 704.6 800 722 804.9 737.5 787.7 737.4 767.6 736.4 753.8 713.1 779 718.9 772.5 699.8 792.6 704.6 779 718.9 767.6 736.4 746.8 734.5 753.8 713.1M817.6 746.2L802.2 756.7 780.1 756.6 790.7 781.4M817.6 746.2L819.5 728.8 841.7 729.6 829.9 711 837.7 696.3M817.6 746.2L804.9 737.5 802.2 756.7M92.8 291.3L106 313.6 87.4 311.5M512.3 654.4L532.4 643.2 551.7 643.9 539.3 627.7 516.9 633.5 503.8 620.6 494.3 637.7 516.9 633.5 512.3 654.4 500.6 677.1 482.9 674.6M512.3 654.4L494.3 637.7 489 658.8 500.6 677.1 498.4 701.3 485.4 689.4M512.3 654.4L523.8 674.2 547.7 677.7 560.9 663.7 568.8 684.1 574.2 703.7 567.2 725.7 582.6 734.4 602.9 732.6 587.1 717.8 567.2 725.7M772.3 146.7L747 141.6 743.7 162.4M772.3 146.7L762.8 132.6 747 141.6 756 115.7 775.2 106 760.6 93.5 747.6 81.1 762.9 73.6 746 63.9 759.6 48 741.9 23.7 731.8 0 723.5 14.2 711.5 22.9 697.1 15.9 681.6 23.6 668.3 43.1 649.2 38.5 654.8 60.4 674.6 60 668.3 43.1 691.4 50.4 711.8 69 729.6 59.5 736.3 44.8 725.7 29.8 741.9 23.7 752.7 0 765 21.8 741.9 23.7M772.3 146.7L775.3 124.5 756 115.7 733.4 117.5 712.6 120 702.2 102.8 717.5 95.8 733.4 117.5 725.5 135.6M130.2 149L112.9 145.2M130.2 149L129.8 130.4 146.5 142.4 130.2 149 139.4 163.5 146.5 142.4 158.7 160.2 169.5 137.8M130.2 149L120.7 167.6 133 180.5M567.3 781.6L584 785.8 603.3 790.9 621.6 793.9 621.9 813.8 621.3 832.6 601.6 825.2 621.9 813.8 640.5 797.5 632.6 779.6M448.9 305.7L464 305.9 455.6 319 448.9 305.7 437.9 317.5 435 296.6 419.5 303.5 405.8 314M723.5 14.2L725.7 29.8 711.5 22.9 710.9 0M326.4 627.5L336.1 616.1 335.6 597.5 336 577 336.3 559.6M551.5 117.4L548.8 98 534 74.9M520.9 905.2L505.1 888.6 492.5 872.9 512.1 871 505.1 888.6 529 885.6 546.7 880.4 557.8 865.2 578.8 872.4 587.6 890.7 563.8 888.6 557.8 865.2M336.4 347.5L351.3 365.9 328.4 368.3 308.5 371.4 299 357.1 291.2 370.4 308.5 371.4 294.9 390.7 301.5 411.1M336.4 347.5L358.4 344.1 347 335.1 332.9 325.4 336.4 347.5 318.6 337.2 310.2 321.7 332.9 325.4M336.4 347.5L328.4 368.3 315.4 354.1 299 357.1M336.4 347.5L347 335.1 354.7 322.2 337.4 307.6 318.4 307.4 310.2 321.7 290.2 318.5 280 331.9M336.4 347.5L315.4 354.1 299.7 338.3M143.3 34L137.2 18 158.4 23.3M587 140.1L570.3 149.8M587 140.1L597.7 125.9M587 140.1L564.1 132.1M587 140.1L582.8 162 602.8 156.5 596.7 176.1 582.8 162 563.3 166.9 553.2 151.3 534.8 153.7 520.5 171.8 512.8 198.5 513.5 221.3 531 218.3 542.8 232.3M587 140.1L602.8 156.5 622.1 171 644.1 159.4 640.7 138.6 619 125 634.6 107.8 614.5 98.8M587 140.1L581.4 114.3 567.2 97.7 560.5 77.9 580.6 89.7 567.2 97.7 563.1 111.8M587 140.1L605.4 139.9 602.8 156.5 622 149 622.1 171 596.7 176.1 594.6 197.4 576.1 184.4M420.9 880.2L423 855.7 406.9 866 398.5 881.2 420.9 880.2 436.8 869.1M420.9 880.2L407.4 899.8 426.2 900.4 439.1 920M420.9 880.2L406.9 866 388.3 861.7 401.1 849.5 423 855.7M420.9 880.2L442.7 891.1M420.9 880.2L426.2 900.4M801.4 397.9L781.1 383.7 764.5 370.8M801.4 397.9L778.2 403.8 781.1 383.7 800.9 374.1 781.2 360.4M801.4 397.9L800.9 374.1 802.5 352.5M306.9 185L286.7 173.4 286.2 194.5 287.5 216.6M306.9 185L301.7 163.2 285.2 152.7 268.1 146.1 272.6 163.7M306.9 185L301.2 202.8 307.6 218 299.1 233.9M306.9 185L321.1 168.3 345.2 164.7 368.1 172.2 387.4 164.1 383.2 189.1 363.8 189.8 368.1 172.2 369.4 149.4M306.9 185L286.2 194.5 272.1 203.7 265.9 184.5 255.1 204.7 242.2 185.4 255.3 164.2 265.9 184.5 242.2 185.4 236.9 210.4 250.8 223.8 255.1 204.7 268.5 220.4 272.1 203.7M175.5 248.1L158.2 241.6 143.1 229.4 142.5 248.2 159.3 259 141 263.6 129.9 280.4M132.6 631.2L141 648.3 164.1 642.1 177.8 659.3 157.4 663.3 171.9 676.8 155.3 684.5 157.4 663.3 164.1 642.1 178.8 631 186.3 614.6 168 620 175.3 604.2M132.6 631.2L118.1 643.2 141 648.3 157.4 663.3 139.6 673.6 116.6 683.5 120.7 703.9 120.7 723.4 138.5 712.2 136.4 735.3 158.6 741.6M132.6 631.2L119.1 621.1 99.7 626.8M870.3 743.7L892.8 746.7 887.1 771.1 903.7 764 903.7 781.9 920 773.6 903.7 764 920 752.7 892.8 746.7 878 727.7 881.2 711.5 874 693.4 858.7 673.6M461.7 49.3L481 44.7M461.7 49.3L482.9 63.5M461.7 49.3L474.7 25.4 460 0 452.7 27.6 434.9 29.6 442.2 15 452.7 27.6 461.7 49.3 461.6 72.5 444.2 82.7 423.4 95.3M461.7 49.3L441.3 44.7 419.8 39.1 402.9 24.6 381 21.7 364.6 13.3 376.4 0 381 21.7 370.8 45.9 373.8 65.8M461.7 49.3L444.5 63.9 444.2 82.7 424.8 72.1M702.9 138L694 116.5 680.1 129.3 673.2 110.6 686.7 93.5M430.1 56.1L419.8 39.1 434.9 29.6M415 55.1L419.8 39.1M803.8 69.9L783.7 84.5 807.2 92.7 823.5 106.6 823 85.6 837.8 77 835.9 58.1 815.8 49.5 795 49.6M803.8 69.9L779.7 61.8 783.7 84.5 760.6 93.5 762.9 73.6 759.6 48 765 21.8 773.6 0 783.3 16.8 801.2 28.8M803.8 69.9L815.8 49.5 822.3 67.5M903.6 576.2L920 585.5 899.8 594 899.5 614.1 920 606.4 899.8 594 903.6 576.2 888.7 581.2 891.7 561.9M574.3 606.2L569 588.2 553.7 571.8 543 559.1M468.7 475.8L452 477.5 437.2 463.3 431 481.1 409.7 487.5 386.8 493.5 368.8 490.6M468.7 475.8L463.7 492.2 475.2 509.6 497 501.8 492.9 519.3 480 531.4 488.9 549.1 502.7 564.9 518.1 579 503.8 580 504.6 597.1 522 613.9 539.3 627.7 532.4 643.2M468.7 475.8L481.5 486.6 463.7 492.2 451.2 506.9 456.8 528M874 693.4L877.7 676.3M874 693.4L865.6 711.4 881.2 711.5 898.8 719.7 905.8 699.1 906.1 680.6M874 693.4L891.2 702.9 898.8 719.7 920 731.8 892.8 746.7 903.7 764M891.2 702.9L881.2 711.5M381 21.7L361.9 28 364.6 13.3M525.5 261.3L523.8 238.5M482.1 168.3L460 164.1M482.1 168.3L487.5 191.8 465.6 184.7M482.1 168.3L468.6 149.9 461 131.9 475.4 114.7 490 104.7 506 101.7 512.2 80.7 525.4 97.1 506 101.7 520.9 119 525.4 97.1 548.8 98 560.5 77.9M93.6 489L106.8 502.2 86.9 506.2 65.5 508.3 77.4 486.7 87.8 470.3 103.9 456.1 121.9 463.5 140.5 471.6 139.1 492 156.7 486.7 140.5 471.6 123.1 487 128.8 508.9M93.6 489L105.6 477.5 87.8 470.3 93.6 489 86.9 506.2 77.4 526.7 56.9 532.7 44 515.9 27 505 0 501.8M93.6 489L77.4 486.7 86.9 506.2 95.3 520.5 77.4 526.7 75.5 545.6 91.2 535.4M59.8 487.4L77.4 486.7 65.7 467.7 59.8 487.4 43.9 498.1 65.5 508.3M868.8 787.5L867.1 762.5 887.1 771.1 889.1 792.2 903.7 781.9 920 794.5 905.1 802.9 903.8 825.2 888.6 811.5 878.1 801 889.1 792.2 868.8 787.5 852.2 778.6 842.9 764.5 867.1 762.5 852.2 778.6 851.6 794.7 842.8 808.2 853 827 879.2 832.1 877.6 851.1M492.9 519.3L475.2 509.6 451.2 506.9 433.4 519.1 437.5 536.3M654.1 458.5L672.5 460.2 681 440.6 703.8 441.4M385.9 691.1L384.8 714.2 368.4 725.2 387.7 734.9 397.6 721.1 398.1 703.3 411.3 709.3 430.1 693.7 427.6 668.3M16.8 419L0 418.2 13.5 438.6 30.6 431.9 43.4 442.4 25.8 452.2 0 460 13.5 438.6 16.8 419 28.3 405.6 31.3 386.4M382.7 264.7L371 275.2 378.2 292.5 368.2 308.9 354.7 322.2M408.6 511.5L386.8 493.5 374.5 472.1 382.6 450.8 402.7 434.9 422 445.8 445.2 445.4 437.2 463.3 422 445.8 421.8 421.6 402.7 434.9 402 454.1 382.6 450.8M386.8 493.5L384.6 516.4 362.4 521.1 354.2 502.1 337 486.4 319.6 476.7 298.6 484 317.8 494.3 335.4 504 354.2 502.1M194.8 580.8L180.5 570.2 173 555.9 171.9 540.7 184.1 533.1 167.8 520.3 146.1 521 157.6 532.9M572.6 342.5L596.8 348.4 612.8 356.3 628.7 356.1 639.7 336.2 634.6 317.7 629.9 298.3 647.3 307.2M101.3 345.3L81 344 71.8 363.5 82.6 383.6M118.2 740L125 755.4 136.4 735.3 157.3 720.3 155.2 702.4 155.3 684.5 139.6 673.6 141 648.3M118.2 740L136.4 735.3 141.7 754.5M118.2 740L120.7 723.4 102.5 733 78.5 743.9 104 753.8M227.6 866.4L227.8 846.8M227.6 866.4L253.3 873.5 272.2 873.5 266.5 891.5M227.6 866.4L244.8 854.5 238.5 833.9 231.7 811.2 247.5 799.7M227.6 866.4L201.9 865.5 217.4 884.3 239 889.3M227.6 866.4L217.4 884.3 222.8 904.3 238.5 906.8M380.8 607L384.6 623.2 401.2 622.5M384.5 407.9L392.9 392 405.3 409.5M816.5 489.8L799.5 497.7 811.5 511.4 822 530.7 832.9 548.5 843.1 562M833.8 508.8L847.4 528.7 822 530.7 812.3 554.4 811.3 576.7M382.1 378L375 357.8 398.9 369.8 413.9 388.2 437.3 382.9 422.6 369.8 446.2 357.5 465.1 343.7M382.1 378L368.7 396.5 366.7 376.2 375 357.8M382.1 378L398.9 369.8 422.6 369.8 413.9 388.2 392.9 392 368.7 396.5 370.2 419.3 351.7 431.8 355.2 411.3M382.1 378L366.7 376.2M382.1 378L392.9 392 398.9 369.8M574 267.1L568.1 251.6 560.5 234.3 550.4 218.3 531 218.3 512.8 198.5 487.5 191.8 496.1 213.5 501.4 232.5 481.9 226.7 464.1 239 447.2 252.3 449.8 269.7 452.1 288.5M589.5 251.9L580.7 234.5 560.5 234.3 546.6 248.6 568.1 251.6 580.7 234.5 599.2 233 614.6 231.5 609.8 213.4 594.6 197.4 579.2 203.8M82.9 168.9L60.8 164.2 39.4 152.9 22.7 135 0 125.5 24.9 116.2 44.5 109.7 27.2 97.5 0 104.5M602.9 732.6L624 720.9 640 732M551.5 830L552.4 810.9 569.7 802M860.3 287.2L862.4 270 879.5 280.5 869.2 305.7 870.3 331.4 860.6 349.2 882.9 351.8 870.3 331.4 849.8 334.1 854.6 318.4 870.3 331.4M860.3 287.2L869.2 305.7 887.8 300.3 899.7 286.9 920 271.8 899.8 265.9 920 250.9 903.1 248.8 882.6 256.8 861.8 252.6 876.1 238.9 885.5 221.5 892.2 204.4 889.9 184.4M860.3 287.2L879.5 280.5 899.7 286.9 899.8 265.9 903.1 248.8M869.2 305.7L854.6 318.4M17 743.4L27.4 729.1 37.1 742.3 32.6 763.4 14.3 764M402 454.1L422 445.8M920 20.9L899.1 0 890.1 24.9 881.7 44.3 853.8 45.9 839.9 24.1 834.1 42.5 835.9 58.1 853.8 45.9 868.7 59.1M899.1 0L876.5 12.2 878.2 0M287.4 638.8L309.4 631.9 306.7 652 288.6 659.8 302.6 668.4 291.5 680.5 277.9 693.6 273.6 675.1 258 692.5 277.9 693.6 296.1 701.6 317.6 703.8 308.5 684.2 302.6 668.4 318.5 667.4 306.7 652 328.3 648 350.8 653.1 337.1 669.2 328.3 648M287.4 638.8L278.4 622.4 263.6 631 266.3 654 287.4 638.8 263.6 631 265.2 611.4 282.2 607M287.4 638.8L306.7 652 302.6 668.4M266.3 654L244.8 662.1 239.9 680.7 240.2 698.2 227.8 710.5 249.4 717 240.2 698.2 223.8 691.3 227.8 710.5 207.3 703.4 223.8 691.3 204.3 681.5 187.4 693.1M574.2 703.7L587.1 717.8 582.6 734.4M567.2 97.7L548.8 98M893.3 666.6L882.2 646.4 902.1 651.4 920 669.1M902.1 651.4L920 648.2 900.1 633.9 920 627.3 899.5 614.1 881.2 601.3 874.2 578.5 888.7 581.2 899.8 594 881.2 601.3 882.8 624.5 882.2 646.4 859.9 652.4 865.3 633.4 842.1 639.5M756 115.7L762.8 132.6 775.3 124.5 789.6 136 791.3 116.9 803 128.3M17.6 152.5L0 167.3M17.6 152.5L22.7 135 0 146.4 17.6 152.5 24.4 168.7 39.4 152.9 58.1 141.2 75.9 133.9 60.8 120.7 44.5 109.7 64.1 101.8 65.3 83.6 82.5 71.1 74.8 53.2 53.1 51.2 49 32.1M17.6 152.5L39.4 152.9M37.2 833.5L56.8 835.8 80.5 834.7M875.6 462.9L871.4 485.1 852.7 475.1 835.5 486.4M397.6 721.1L384.8 714.2 387.7 734.9 372.9 746.4 368.4 725.2M401.9 269.1L406.2 248 387.4 249.4 401.9 269.1 418 284.1 419.5 303.5 437.9 317.5 433.8 338.6 418.1 340.7 427.1 353.3M75.3 676.2L61.8 663.3 42.3 659.8 23.6 676.1M75.3 676.2L50.3 678.1 46.5 695.9M75.3 676.2L94.9 682 101 700.5 116.6 683.5 107.9 664.5 118.1 643.2 99.1 648.6 107.9 664.5 94.9 682 116.6 683.5M50.3 678.1L33.3 690.1M50.3 678.1L61.8 663.3M50.3 678.1L42.3 659.8 60.7 643.2 47.3 623.2 25 623.3 16.5 639.4 19.9 655.8 42.3 659.8 35.3 640 25 623.3 0 627.3 14.6 604.4 25 623.3 33.8 604 50.7 603.2 47.3 623.2 35.3 640 19.9 655.8 0 648.2 16.5 639.4 35.3 640 60.7 643.2 84.5 639.7M508 324.8L521.2 336.2 525.1 315.1M787.3 646.8L798.8 627.4 780.2 628.3 787.3 646.8 770.1 661.7 785.1 682.3M881.7 44.3L902.6 53.9 920 41.8 903.5 37.2 890.1 24.9 876.5 12.2M335.9 744.7L345.7 725.1 324 726 304.1 732.3 293.4 719.2 274.5 713.4 264.5 739M335.9 744.7L321.6 759.4 317.2 743.1 324 726 307.9 716.7M335.9 744.7L356 739.7M335.9 744.7L317.2 743.1M335.9 744.7L356.2 755.6 375 765.8 371.1 786.6 392.4 773.7 390.6 753.9 407.7 760.7 410.6 780.5 392.4 773.7 375 765.8 372.9 746.4 356.2 755.6 340.3 764.3 359.1 771.4M335.9 744.7L340.3 764.3 321.6 759.4 327.8 778.5 315.2 791.5 293.3 782.2 298.5 801.8 315.2 791.5 334.7 798.6 319 814M335.9 744.7L324 726 335.7 706.8 317.6 703.8 324 726M500.4 754.4L484.2 740 478 761.2 460.3 766.1M500.4 754.4L490.8 778.5 468.4 781.3 462.7 801.1 482.7 817.9 502.8 835.5 505.5 814.6 494.6 799.6M500.4 754.4L519.7 743 501.9 733.8 522 723.6M500.4 754.4L478 761.2 490.8 778.5M500.4 754.4L501.9 733.8 489.5 721.2 474 726 475.6 706.5 498.4 701.3 515.2 707.7M167.8 520.3L189.8 518.5 199.8 499.3M184.1 533.1L189.8 518.5 214.2 525.2 209.6 548.4 198.3 535.6M532.9 688.5L523.8 674.2 500.6 677.1M834 449.3L852.4 456.7 845.3 437.1 859.8 424.3 849.4 407.5 841.2 390.8 865.9 394.9 882.4 378.1M834 449.3L830.2 468.1M834 449.3L845.3 437.1 835.3 419.2 849.4 407.5 865.9 394.9 859.5 378 868.8 363.3 860.6 349.2 842.8 351.5 836.7 371.8M654.8 60.4L634.7 70.2 645.3 91.5 654.5 78.2M162.4 580.1L180.5 570.2M225.7 142.6L246.2 140 227.9 127.3M863.6 500.8L852 510.9M863.6 500.8L879.2 502.7 871.4 485.1 895.7 489.5 899.1 469.4 920 480.9 895.7 489.5 879.2 502.7 898 509.3 920 522.7M863.6 500.8L871.4 485.1M43.4 442.4L50 421.7 28.3 405.6M43.4 442.4L44.6 458.9 24.4 470.2 25.8 452.2 13.5 438.6 0 439.1M43.4 442.4L63.5 443 83.8 430 101.2 436.7 103.9 456.1 84.9 450.9 101.2 436.7 116.6 423 100.4 414.9 114.9 403.1 108.1 380.1M440.7 744.2L443.7 759.9 447.4 782.5 425.4 770.1 424.1 751.6 407.7 760.7 392.4 773.7 394.6 792.1 371.1 786.6M440.7 744.2L461.9 743 443.7 759.9 424.1 751.6 427.7 736.4 440.7 744.2M325.7 896.5L342 879.6 361.6 886.7 364.1 905.1M238.5 21.7L261.4 18.1 273.6 33 261.7 53.3M296.1 701.6L274.5 713.4 277.9 693.6M234.1 744.1L235.8 763.5 249 749.6M804.9 799.1L811.3 819.6M532.1 432.4L518.5 422 523.4 403.8 540.7 416.9 553.8 404.1M532.1 432.4L540.7 416.9M532.1 432.4L514.1 447.1 529.7 464.8M794.5 0L783.3 16.8 765 21.8 780.7 37.6 759.6 48M783.3 16.8L780.7 37.6 779.7 61.8 762.9 73.6 783.7 84.5 792.9 101 775.2 106 783.7 84.5M879.2 832.1L899.8 847.5M879.2 832.1L888.6 811.5 889.1 792.2 905.1 802.9 920 815.5 903.8 825.2 879.2 832.1 858.7 844.6 842 838.7 833 823 842.8 808.2 834 785.2 851.6 794.7M879.2 832.1L865.4 809.5M876.9 167.1L896.7 158.2 920 146.4 903.2 139.1M268.1 109.3L243.3 115 261.3 127.5 279.5 130 268.1 146.1 255.3 164.2 246.2 140 243.3 115M268.1 109.3L261.3 127.5 268.1 146.1 246.2 140 236.2 159.8 242.2 185.4 224.3 175.3 212 156.9 191.8 145 190.7 168.9 212 156.9M268.1 109.3L287 98.1 285 114.2 279.5 130M268.1 109.3L285 114.2M268.1 109.3L273.5 87.3 292.8 77.7 305.5 90.1 319.3 101.1M261.3 127.5L246.2 140M840.9 856.4L821.9 857 819 872.5 834.5 874.5 822.9 888.9 843.4 897.5M840.9 856.4L842 838.7M840.9 856.4L863.6 862.3 875.3 879.9 897.3 880.1 920 878.2M348.7 398L336.4 386.4 351.3 365.9M335.4 411L316.6 400.8 294.9 390.7 277.5 375.1M335.4 411L315.2 421.1 313.8 439.6 321.7 456.8 304.5 450.6 302.9 466.7 321.7 456.8 339.2 467.4 319.6 476.7 302.9 466.7 287.9 452.8 304.5 450.6M335.4 411L329.4 434.7 313.8 439.6M335.4 411L336.4 386.4 316.6 400.8 317 384.3 328.4 368.3 336.4 386.4 354.2 384.7M335.4 411L351.7 431.8 341.2 450.1 321.7 456.8 319.6 476.7 317.8 494.3 318.2 516.3 335.4 504M336.1 616.1L316.4 608.6M475.6 706.5L489.5 721.2 498.4 701.3M475.6 706.5L466.9 683.2 444.9 680.5 452.3 697.1 475.6 706.5M18.5 348.5L26.4 369.7 12.1 367.2 0 355.5 18.5 348.5 37.9 355.1 36.4 334.8 35.8 315.7 53 324.5 36.4 334.8 18.5 348.5 12.1 367.2M100.8 806.4L99.8 827.6 101.1 844.1M254 426.5L252.2 443.5 235.6 430 223 412.9 242.5 409.4 254 426.5 273.2 435.7 283.9 414.6 264.4 412.9 273.2 435.7 297.3 432.1 315.2 421.1 329.4 434.7 341.2 450.1M254 426.5L264.4 412.9 242.5 409.4 235.6 430 254 426.5M21.8 243.3L33.2 225.1 50.4 234.2 68.7 240.7 84.1 229.8 65.8 223.4 50.4 234.2 40 245.1 55 253 55.9 270.7 36.7 262.6 17.4 261.4 0 250.9 21.8 243.3 17.4 261.4 0 271.8 20.8 279.2 17.4 261.4M21.8 243.3L36.7 262.6 40 245.1 33.2 225.1M21.8 243.3L40 245.1M293.7 822.2L309.7 831.5M293.7 822.2L295.8 842.2 314.2 847.1 327.7 832.6 334 855.7 342 879.6 325 876.2M293.7 822.2L271.4 822.5 282.2 808.1 281.3 794M293.7 822.2L298.5 801.8 282.2 808.1 265.2 801.2M293.7 822.2L282.2 808.1M691.4 50.4L681.6 23.6 698.4 31.9 697.1 15.9M691.4 50.4L715.3 44.2 711.5 22.9 698.4 31.9 715.3 44.2 729.6 59.5 746 63.9 731.1 76.8 711.8 69M691.4 50.4L674.6 60 671.9 76.3 690.4 71.5 701.9 85.2M691.4 50.4L690.4 71.5 674.6 60M691.4 50.4L698.4 31.9M834 785.2L852.2 778.6M815.8 49.5L834.1 42.5 822.2 32.7M834.1 42.5L853.8 45.9M130.9 905.4L146.4 920 146.6 900.2 167.4 892.5 168.4 871.3 144.6 876.1M628.8 186.8L646 177.8 644.1 159.4 662.8 145.6 680.1 129.3 659.3 125.8 642.3 122.7 634.6 107.8 629.1 88.7 634.7 70.2M740.1 833L717 837.1 712.9 857.5 728 851.5 717 837.1 696 829.5 675.8 827.2 682.2 842.5 696 829.5 698.6 847.5 717 837.1M740.1 833L728 851.5M740.1 833L739.8 809.1 726.6 821.1M740.1 833L756.5 819.6 774.3 829.3 768.3 805 753.5 801 739.8 809.1 723.5 807.3M740.1 833L757.4 843.8 774.3 829.3M479.2 463.9L481.5 486.6 475.2 509.6M474 726L461.9 743 478 761.2 468.4 781.3 447.4 782.5 444 805.6 428.4 790.9 413.4 799.3 396 810.8 377.8 822.9 361.4 816.5 374.8 805.6 394.6 792.1 413.4 799.3 414.9 818.2 396.5 830.4 401.1 849.5 416.2 836 429.7 841.5 437.9 827.5 416.2 836 414.9 818.2 428.3 808.6M321.7 456.8L329.4 434.7 351.7 431.8M757 507.6L746.2 527.6 763.1 524.3 778.6 536 760.9 540.1 744.7 543.7M757 507.6L733.3 514.5 740.6 493.9 757 507.6 763.1 524.3 760.9 540.1 776.1 554 778.6 536 778.8 518 757 507.6M677.5 373.4L699.9 363.4 699.4 382.9 718.8 374.7 722.3 356.1 705 343.4 719.4 328.9 727.2 340.6M677.5 373.4L655 374.3 642.4 390.8 664.5 390.6 677.5 373.4 699.4 382.9 700 403.2 719.8 393.8 699.4 382.9 683 390.8 700 403.2M677.5 373.4L683 390.8M685.2 354.7L685.7 334.9 667.6 351.6M111 526.9L95.3 520.5M465.5 601.2L464.6 582 460.9 563.1M58.2 557.7L53.4 574.9 39.8 567.2 58.2 557.7 69.2 575.1 60.3 590.3 66.4 611.5 50.7 603.2M58.2 557.7L41.5 546.4 56.9 532.7 38.5 529.9 44 515.9 43.9 498.1 23.5 488.8 27 505 22.2 520.7 0 522.7 12.6 531.5 0 543.6 22.1 558 24.6 538.7 22.2 520.7 12.6 531.5 24.6 538.7 0 543.6M58.2 557.7L75.5 545.6 56.9 532.7M895.7 489.5L898 509.3 898.3 526 905.3 542.4 886.5 539.6 898.3 526M232.8 651.4L246.9 640.9 244.8 662.1 232.8 651.4 217 648.7 202.8 642.8M455.6 319L437.9 317.5M482 841.6L482.7 817.9 505.5 814.6 522.7 807.9 527 785.3M482 841.6L460.6 838.5 437.9 827.5 414.9 818.2 396 810.8 394.6 792.1 410.6 780.5 428.4 790.9 447.4 782.5M482 841.6L483.6 858.6 492.5 872.9 474.2 872 483.6 858.6M182.5 862L168.4 871.3 185.9 880.1 201.9 865.5M343.6 818.4L334.7 798.6 354.5 801 361.4 816.5M640.5 797.5L653.1 809.7M280.1 508.1L260.2 508.3 273.4 522.8 295 519.4 280.1 508.1 273.4 522.8 268.4 539.6M130.9 76.8L149 84.4 146 100.9 151.8 118.7M110.5 41.2L98 25.9 80.2 17.6 66.7 35.3 53.1 51.2M460 0L442.2 15M265.9 184.5L286.2 194.5 301.2 202.8M770.1 661.7L766.5 641 765.5 619.4 784.8 610 802.5 594.8M770.1 661.7L753 670.2 751.5 651 736.7 661.6 735 641.3 751.5 651 770.1 661.7M408.4 684L430.1 693.7 441.3 710.6M898.8 719.7L892.8 746.7 867.1 762.5M141.9 578.3L121.4 565.2 122.8 543.5 142.4 538 129.6 527.4 122.8 543.5 99.3 552.7 78.5 561.5 69.2 575.1 53.4 574.9M220.8 778L199.9 785.6 207.9 764.7 235.8 763.5 252.7 782.1 261.9 762.5 235.8 763.5 220.8 778 219.1 795.2 199.9 785.6 187.1 804.5 174.8 790.4 178.7 769.5M762.3 583.7L764.2 599.9 778.7 588.3 784.8 610 807.8 613.2M729.6 59.5L731.1 76.8 738.8 96 733.4 117.5 747 141.6 724 154.3M242.2 185.4L221.9 196.6 224.3 175.3M558 906.2L563.8 888.6 578.8 872.4 599.8 876.1 590.8 857.6 607.1 861.6M629.1 88.7L645.3 91.5 665 93.4 673.2 110.6 653.6 109.6 645.3 91.5 634.6 107.8 653.6 109.6 659.3 125.8 673.2 110.6 694 116.5 702.2 102.8M164.1 642.1L168 620 178.8 631M629.4 221.6L640.9 237M629.4 221.6L609.8 213.4M629.4 221.6L614.6 231.5M905.1 71.1L902.6 53.9 903.5 37.2M65.7 467.7L44.6 458.9 63.5 443 50 421.7M65.7 467.7L84.9 450.9 63.5 443 68.6 421.2M65.7 467.7L63.5 443M595 662.3L614.2 680.9 617 658.5 595 662.3 578.8 669.5M595 662.3L573 649.7 551.7 643.9 560.9 663.7 573 649.7 587.4 638.6 595 662.3M291.2 370.4L294.9 390.7 317 384.3 308.5 371.4 315.4 354.1 318.6 337.2M847.4 528.7L832.9 548.5 812.3 554.4 792.1 570.8 793.4 549.6 776.1 554 792.1 570.8M605.4 139.9L622 149 640.7 138.6 642.3 122.7M823.9 318.2L807.1 312.1M823.9 318.2L839.3 316.7 832.4 334.4 849.8 334.1 842.8 351.5 832.4 334.4 823.9 318.2M920 899.1L906.6 898.6 920 920M120 191.5L120.7 167.6 103.5 161.5M120.7 167.6L102.2 179.3 86.8 190.4M753.5 801L756.5 819.6 768.3 805 775.9 790.7M464.6 582L481 595.1 488.5 579.9 464.6 582 478.4 564.4 488.5 579.9 504.6 597.1 481 595.1M610.4 505.7L592.5 509.5 588 484.8 574.6 470.6 550.9 472.1M625 585.9L602.3 578.9 607.3 601.2 613 619.8 627.1 608.2 642.8 616.6M706.1 898.8L711.3 877.5 727.7 891.8 744.3 877.3 762.1 867.7 757.4 843.8 756.5 819.6 739.8 809.1M661.9 526.5L666.4 546.3M336.4 386.4L317 384.3M717.5 95.8L731.1 76.8 747.6 81.1M199.9 785.6L174.8 790.4 152.2 797.5 136.9 811.3 152.2 822 152.2 797.5M869.7 224.2L876.1 238.9 882.6 256.8 899.8 265.9 879.5 280.5 887.8 300.3M68.9 724.8L72.3 709.6M68.9 724.8L53.4 713M68.9 724.8L88.2 718.4M68.9 724.8L54.1 733.9 78.5 743.9 86.1 763.2M68.9 724.8L78.5 743.9 52.9 754.2 32.6 763.4M427.7 736.4L426.1 718.3 430.1 693.7 444.9 680.5M681.6 23.6L669.1 0 661.8 20.4 648.2 0 645.9 17.7M686.5 168.9L701.9 160.3 700.7 183.1 686.5 168.9 680.7 188.7 662.9 205.8 662 186.7 680.7 188.7 700.7 183.1 717.7 185.5 715.3 171.1M143.1 229.4L148.9 212.6 162.8 199.9M612.8 356.3L600.4 368.2 602.4 388.2 621.3 397.8 638.1 410.3 631.1 430.3 614.7 416.5 621.3 397.8 621.3 376.8M383.7 898.6L376.7 875.4 370.8 858.8M318.2 516.3L307.7 534M715.3 44.2L725.7 29.8M36.7 262.6L20.8 279.2 33.8 296.2M475.4 114.7L462.5 93.9 479.2 95.7 490 104.7M302.2 555L287.1 574.9 297 593.7M345.3 20.3L334.5 0 321.6 22.6 332.5 38 322.8 54.3 314 72.2 305.5 90.1 326.9 85.9 334.4 67.9 314 72.2 300.3 55.5 313.8 40.7M378.7 842.7L401.1 849.5 406.9 866M466.9 683.2L452.3 697.1 430.1 693.7M125.7 109.7L146 100.9M109.8 94L102 108.7 112.4 124.2M476.4 80.5L479.2 95.7M426.6 245.6L427.2 225 425.2 206.4 403.2 199.5 383.2 189.1 365.3 207.6 385.2 213.8 371.2 231.2M815.1 228.2L814.4 205.1 812.7 184.4 795.6 177.6 808.6 163.7 812.7 184.4 798.7 196.7 784.2 207.8M462.7 635.2L475.4 646.2 494.3 637.7M819 872.5L805.6 859.6 805.3 878.4 805.1 901.4 794.5 920 784.8 904.1 773.6 920 766.7 901.8 775.8 886 787.2 867.1 805.3 878.4 822.9 888.9 819 872.5 805.3 878.4 792.2 887.5 805.1 901.4M719.4 328.9L739.3 326.2M719.4 328.9L722.9 312.1 716.6 296.1 702.5 283.9 700.7 304.6 676.6 290.4 651 292.9 656.7 274.9 676.6 290.4 682.6 313.8 664 308 669.8 327.7 656.7 338.2M719.4 328.9L702.9 322.8 682.6 313.8 669.8 327.7 685.7 334.9 705 343.4M278.4 622.4L265.2 611.4 243.9 616.8 255.3 593 242.6 575.6M289.4 877.3L272.2 873.5M400.7 575.1L385.5 567.3 386.3 550.2M106.8 502.2L123.1 487 105.6 477.5 121.9 463.5 123.1 487 139.1 492M872.2 204.4L892.2 204.4 906.5 197.6 903 218.1 892.2 204.4M38.5 529.9L22.2 520.7M38.5 529.9L24.6 538.7 41.5 546.4 22.1 558 39.8 567.2 41.5 546.4 38.5 529.9M129.6 527.4L146.1 521 142.4 538 157.2 548.7 173 555.9M843.7 121.2L839.3 99.2 823.5 106.6 820.4 129.5M843.7 121.2L823.5 106.6 807.2 112.4 791.3 116.9 792.9 101M843.7 121.2L863.3 136.5M715.4 700.6L735.1 695.6 728.3 716 746.8 734.5 760.5 755.4 780.1 756.6 767.6 736.4 760.5 755.4 750.5 771.3 728.2 771.3 721.9 753.3M106.5 574.4L99.3 552.7 89.3 574.8 98.3 592 108.4 606.5 119.1 621.1 118.1 643.2M106.5 574.4L121.4 565.2 99.3 552.7 75.5 545.6 78.5 561.5M106.5 574.4L98.3 592 87.9 609.6 66.4 611.5 62.4 627.4 47.3 623.2 66.4 611.5M680.7 188.7L695.3 205 680.4 210.2M349.9 182.5L363.8 189.8M349.9 182.5L345.2 164.7M349.9 182.5L368.1 172.2 383.2 189.1 385.2 213.8 406.6 217.6 425.2 206.4 421.8 187.3 418.3 167.4 401.9 179.1 383.2 189.1M732.4 271.3L749.1 274.4 761 257.8M784.8 610L764.2 599.9 765.5 619.4 780.2 628.3M700.7 183.1L695.3 205 708 220.4 724.8 233.9M717.7 185.5L735.8 192.5M602.6 404.2L621.3 397.8 642.4 390.8M258 692.5L249.4 717 245.3 735.6M258 692.5L274.5 713.4 249.4 717M258 692.5L240.2 698.2M370.6 706.3L384.8 714.2 398.1 703.3M666 703.7L667.7 722 654.8 731.8M187.1 804.5L186.7 824.8 207.1 811.7M890.1 319.8L901.8 340.5 882.9 351.8 901.3 366.3 901.8 340.5M716.6 296.1L700.7 304.6 722.9 312.1M234.6 476L259.7 475.5 248.4 459.9M396.3 639.2L384.6 623.2 396.6 607 413.4 611.9 425.2 601.3M16.5 639.4L0 627.3M178.6 740.9L171.1 753.2M787.2 867.1L792.2 887.5 784.8 904.1 775.8 886 759.5 886.2M486.6 247.5L464.1 239 460.2 219.9 481.9 226.7 486.6 247.5 482.7 265 467.9 274.3 449.8 269.7 466.8 257.2 482.7 265M663.2 846L682.2 842.5 680.7 858.8 698.6 847.5 682.2 842.5M256.1 34.9L241.2 43.7 226.1 51.1 217.2 68.7 210.1 44.3 226.1 51.1M141 263.6L142.5 248.2 158.2 241.6M370.8 45.9L361.9 28M763.1 524.3L778.8 518 779.4 494.1 787.3 469.6 798.2 482.8 779.4 494.1 799.5 497.7 794.2 511.2M812.3 554.4L793.4 549.6M520.5 171.8L502.3 159.7 505.8 139.2 526.3 139.3M614.2 680.9L637.4 688.6M53 324.5L72.5 322.7M839.9 24.1L836.4 0 817.8 15.9 815.5 0M685.9 249.5L670.6 231.1 662.9 205.8M622.1 171L646 177.8 662 186.7M0 292.7L20.8 279.2M315.2 132.9L335.5 132.2M246.9 240.8L237.2 260 241.1 285.5 254.4 276.1 259.1 259.8 263.9 239.4 246.9 240.8 250.8 223.8 230.6 232.7M881.2 601.3L888.7 581.2M593.7 466.3L588 484.8M593.7 466.3L574.6 470.6 584 453.1 593.7 466.3M16.2 905L36.9 900.9 57.1 885.2 55.5 868.5 72.4 868.8 66 852 56.8 835.8 45.3 818.9 33 801.2 25.8 817.4 0 815.5M728.2 771.3L705.4 766.6 686.8 754.3 705.6 745.4 705.4 766.6M134.6 410.2L114.9 403.1 97.8 396.1M129.9 431L116.6 423 114.9 403.1 127.3 391M603.3 492L592.5 509.5 570.7 523 571.8 502.4 592.5 509.5M340.9 53L334.4 67.9 322.8 54.3 300.3 55.5 278.7 66.5 273.5 87.3 287 98.1 305.5 90.1 302.8 110.5M798.2 482.8L799.5 497.7M500.2 177.9L512.8 198.5 496.1 213.5 513.5 221.3M15.5 78.8L0 83.6M27 505L43.9 498.1 44.5 478.2 24.4 470.2 23.5 488.8 0 480.9 24.4 470.2 0 460M723.5 499.7L725.5 476.7 710.9 459.5M32.1 710L27.4 729.1M629.9 298.3L635.3 278.2 656.7 274.9 665.3 253.8 674 268.2M762.1 867.7L775.8 886 792.2 887.5M136.4 735.3L120.7 723.4 106.8 715.8M804.9 737.5L819.5 728.8M525.4 558.4L521.6 537.3 508.8 548.8 502.7 564.9M525.4 558.4L508.8 548.8 500.4 534.1 488.9 549.1 508.8 548.8M525.4 558.4L518.1 579 504.6 597.1 503.8 620.6M569 588.2L569.5 567.4 561.5 547.6 553.7 571.8 569.5 567.4M474.7 25.4L480.9 0 497.2 17.7 501.8 0 516.1 14.2M180.2 465.6L163.6 468.7 140.5 471.6M204 21.1L220.7 15.1M254.4 276.1L271.3 279.6 259.7 293.7 241.1 285.5 246.5 306.8 267.2 315.9M254.4 276.1L237.2 260M254.4 276.1L259.7 293.7 246.5 306.8 231.5 321.7 214.6 315 212.3 298.2M879.5 280.5L882.6 256.8M273.2 435.7L287.9 452.8 297.3 432.1M300.3 55.5L282.7 47.2 273.6 33 297.5 27.1 282.7 47.2M670.6 231.1L665.3 253.8 643.4 256.6M24.3 869.8L39.9 879.1 55.5 868.5M735.7 422.6L752.8 423.6 740.4 405.7M505.8 139.2L520.9 119M293.4 719.2L285.4 734.9 302.5 750.8 304.1 732.3 285.4 734.9 274.5 713.4M541.6 296.1L556.2 307.8M271.8 920L253.8 905.2M882.2 646.4L865.3 633.4 882.8 624.5 869.2 615.6 853.5 618.6 865.3 633.4 869.2 615.6M222.5 668.1L217 648.7 211.9 629.8 223 613 243.9 616.8M388.2 316.7L403.9 332.6 418.1 340.7M162.9 288.4L180.8 294.4 197.1 306.2 214.6 315 200.8 323.7M189.8 550.4L209.6 548.4 224.7 546M429.1 113.1L443.3 102.4 444.2 82.7 462.5 93.9M905.9 428.2L920 439.1 896.7 447.5M115.8 209.7L132.4 210.6 148.9 212.6M335.3 233.2L337.3 246.7M219.1 795.2L231.7 811.2M563.8 888.6L546.7 880.4M882.9 351.8L868.8 363.3M36.9 900.9L39.9 879.1 57.1 885.2 72.4 868.8 91.6 872.7 108.3 881.3M47.3 623.2L33.8 604 14.6 604.4 0 606.4M55.9 270.7L72.5 258.6 72.3 279.3 55.9 270.7M268.5 220.4L263.9 239.4 250.8 223.8 268.5 220.4M662.8 145.6L659.3 125.8 640.7 138.6 662.8 145.6M266.7 574.4L255.3 593 265.2 611.4 275.1 591.8 287.1 574.9 266.7 574.4M897.3 880.1L887.1 899 906.6 898.6 897.3 880.1M698.6 847.5L712.9 857.5 711.3 877.5 696.4 867.1 698.6 847.5M137.2 18L116.5 21.2 125.5 0 137.2 18M672.4 669.9L694.1 675.1 686.8 656.3 672.4 669.9M336 577L353.5 566.7 352.9 586.7 336 577M702.9 322.8L700.7 304.6 682.6 313.8 685.7 334.9 702.9 322.8M740.6 493.9L725.5 476.7 748.2 474.1 740.6 493.9M340.3 764.3L347.5 783 334.7 798.6 327.8 778.5 340.3 764.3M321.6 22.6L297.5 27.1 313.6 0 321.6 22.6M221.9 196.6L217.4 217.4 202.1 203.8 221.9 196.6M775.3 124.5L775.2 106 791.3 116.9 775.3 124.5M150 180.8L139.4 163.5 158.7 160.2 150 180.8M178.1 483.2L156.7 486.7 163.6 468.7 178.1 483.2M474.5 206L481.9 226.7 496.1 213.5 474.5 206M473.9 903.9L494.1 904.9 480.9 920 473.9 903.9" fill="none" stroke="#7f7f7f" stroke-width="1.4"/></svg><div class="a" style="left:1734px;top:83px;width:6px;height:1196px;background:#2a2a2a"></div><div class="a" style="left:1735px;top:83px;width:4px;height:1196px;background:#474747"></div><div class="a" style="left:7px;top:168px;width:33px;height:10px;background:#4a4a4a;border:1px solid #222;box-sizing:border-box"></div><svg style="left:9px;top:169px" width="8" height="8"><path d="M0 4L8 0V8Z" fill="#111"/></svg><div class="a" style="left:12px;top:184px;width:25px;height:73px;background:#353535;border:1px solid #222;box-sizing:border-box"></div><div class="a" style="left:13px;top:209px;width:23px;height:23px;background:#8e9ba3"></div><svg style="left:14px;top:186px" width="20" height="20" viewBox="0 0 20 20"><path d="M9 3L14 15H4Z" fill="#e8c030"/><circle cx="13" cy="7" r="5" fill="#666"/><path d="M9 3L14 15H4Z" fill="#e8c030"/></svg><svg style="left:33px;top:199px" width="5" height="7"><path d="M0 0L5 3.5L0 7Z" fill="#999"/></svg><svg style="left:14px;top:210px" width="20" height="20" viewBox="0 0 20 20"><path d="M10 2L18 10L10 18L2 10Z" fill="#666" stroke="#333" stroke-width="0.8"/><path d="M10 8L14 12L10 16L6 12Z" fill="#e8c030"/></svg><svg style="left:33px;top:223px" width="5" height="7"><path d="M0 0L5 3.5L0 7Z" fill="#999"/></svg><svg style="left:14px;top:235px" width="20" height="20" viewBox="0 0 20 20"><path d="M4 5L12 3L17 10L10 17L4 13Z" fill="#d8b820"/><path d="M4 5L12 3L10 9Z" fill="#f0e070"/></svg><svg style="left:33px;top:248px" width="5" height="7"><path d="M0 0L5 3.5L0 7Z" fill="#999"/></svg><div class="a" style="left:12px;top:262px;width:25px;height:1px;background:#2a2a2a"></div><svg style="left:14px;top:272px" width="20" height="20" viewBox="0 0 20 20"><path d="M5 2V16L8.5 12.5L12 18L14 17L11 11.5H16Z" fill="#ddd" stroke="#555" stroke-width="0.6"/></svg><svg style="left:33px;top:285px" width="5" height="7"><path d="M0 0L5 3.5L0 7Z" fill="#999"/></svg><div class="a" style="left:12px;top:298px;width:24px;height:24px;background:#8e9ba3;border:1px solid #aab5bb;box-sizing:border-box"></div><svg style="left:14px;top:300px" width="20" height="20" viewBox="0 0 20 20"><rect x="5" y="9" width="10" height="8" fill="#e4e8ea"/><path d="M7 9V6C7 3 13 3 13 6V9" stroke="#e4e8ea" stroke-width="1.8" fill="none"/></svg><svg style="left:14px;top:327px" width="20" height="20" viewBox="0 0 20 20"><rect x="7" y="5" width="7" height="7" fill="#aab"/><path d="M2 12L6 15L7 10ZM18 12L14 15L13 10ZM6 4L2 7L7 8ZM14 4L18 7L13 8Z" fill="#d02010"/></svg><svg style="left:14px;top:355px" width="20" height="20" viewBox="0 0 20 20"><circle cx="10" cy="8" r="4.5" fill="#bbb"/><path d="M3 12C3 17 9 18 10 15M17 12C17 17 11 18 10 15" stroke="#e03010" stroke-width="2.2" fill="none"/></svg><svg style="left:14px;top:383px" width="20" height="20" viewBox="0 0 20 20"><rect x="6" y="7" width="8" height="8" fill="#556"/><path d="M10 2L8 6H12ZM3 15L7 13L7 17ZM17 15L13 13V17Z" fill="#d02010"/></svg><svg style="left:14px;top:411px" width="20" height="20" viewBox="0 0 20 20"><path d="M10 3V9M6 7L10 10L14 7M7 17L10 11L13 17" stroke="#555" stroke-width="1.2" fill="none"/><circle cx="10" cy="10" r="1.5" fill="#733"/></svg><svg style="left:14px;top:441px" width="20" height="20" viewBox="0 0 20 20"><circle cx="10" cy="11" r="3" fill="#e8c030" stroke="#333"/><path d="M10 11L10 2" stroke="#30b030" stroke-width="2"/><path d="M10 11L3 16" stroke="#3060d0" stroke-width="2"/><path d="M10 11L17 15" stroke="#d03030" stroke-width="2"/></svg><svg style="left:33px;top:454px" width="5" height="7"><path d="M0 0L5 3.5L0 7Z" fill="#999"/></svg><div class="a" style="left:12px;top:468px;width:25px;height:1px;background:#2a2a2a"></div><svg style="left:14px;top:477px" width="20" height="20" viewBox="0 0 20 20"><g transform="translate(0,0) scale(0.9)"><path d="M3 10V7C3 2 13 2 13 7V10" stroke="#d83838" stroke-width="3.5" fill="none"/><rect x="1.2" y="9" width="3.6" height="3" fill="#eee"/><rect x="11.2" y="9" width="3.6" height="3" fill="#eee"/></g><path d="M9 9H18V18H9ZM9 13.5H18M13.5 9V18" stroke="#ccc" stroke-width="1" fill="none"/></svg><svg style="left:33px;top:490px" width="5" height="7"><path d="M0 0L5 3.5L0 7Z" fill="#999"/></svg><svg style="left:14px;top:504px" width="20" height="20" viewBox="0 0 20 20"><g transform="translate(0,0) scale(0.9)"><path d="M3 10V7C3 2 13 2 13 7V10" stroke="#d83838" stroke-width="3.5" fill="none"/><rect x="1.2" y="9" width="3.6" height="3" fill="#eee"/><rect x="11.2" y="9" width="3.6" height="3" fill="#eee"/></g><path d="M2 17C7 15 10 16 18 11" stroke="#ddd" stroke-width="1" fill="none"/></svg><svg style="left:33px;top:517px" width="5" height="7"><path d="M0 0L5 3.5L0 7Z" fill="#999"/></svg><svg style="left:14px;top:532px" width="20" height="20" viewBox="0 0 20 20"><g transform="translate(0,0) scale(0.8)"><path d="M3 10V7C3 2 13 2 13 7V10" stroke="#d83838" stroke-width="3.5" fill="none"/><rect x="1.2" y="9" width="3.6" height="3" fill="#eee"/><rect x="11.2" y="9" width="3.6" height="3" fill="#eee"/></g><circle cx="14" cy="15" r="3" fill="#ccc"/></svg><svg style="left:33px;top:545px" width="5" height="7"><path d="M0 0L5 3.5L0 7Z" fill="#999"/></svg><svg style="left:14px;top:561px" width="20" height="20" viewBox="0 0 20 20"><g transform="translate(1,1) scale(1.1)"><path d="M3 10V7C3 2 13 2 13 7V10" stroke="#d83838" stroke-width="3.5" fill="none"/><rect x="1.2" y="9" width="3.6" height="3" fill="#eee"/><rect x="11.2" y="9" width="3.6" height="3" fill="#eee"/></g></svg><svg style="left:33px;top:574px" width="5" height="7"><path d="M0 0L5 3.5L0 7Z" fill="#999"/></svg><div class="a" style="left:12px;top:590px;width:25px;height:1px;background:#2a2a2a"></div><div class="a" style="left:12px;top:596px;width:24px;height:24px;background:#8e9ba3;border:1px solid #aab5bb;box-sizing:border-box"></div><svg style="left:14px;top:598px" width="20" height="20" viewBox="0 0 20 20"><circle cx="7" cy="8" r="3.5" fill="#2e3438"/><circle cx="12" cy="5" r="3" fill="#2e3438"/><rect x="6" y="9" width="8" height="6" fill="#3c4448"/><path d="M14 10L17 8V15L14 13Z" fill="#2e3438"/></svg><svg style="left:33px;top:611px" width="5" height="7"><path d="M0 0L5 3.5L0 7Z" fill="#999"/></svg><svg style="left:14px;top:626px" width="20" height="20" viewBox="0 0 20 20"><circle cx="9" cy="9" r="7" fill="none" stroke="#ccc" stroke-width="1.2"/><path d="M2 9H16M9 2V16" stroke="#ccc" stroke-width="0.8"/><rect x="9" y="9" width="9" height="9" fill="#999" stroke="#d04040" stroke-width="1.2"/></svg><svg style="left:14px;top:654px" width="20" height="20" viewBox="0 0 20 20"><ellipse cx="10" cy="14" rx="8" ry="4" fill="#9cc8e8"/><rect x="5" y="3" width="10" height="10" rx="3" fill="#333"/><path d="M6 6H14M6 9H14" stroke="#888" stroke-width="1"/></svg><svg style="left:33px;top:667px" width="5" height="7"><path d="M0 0L5 3.5L0 7Z" fill="#999"/></svg><svg style="left:14px;top:1227px" width="20" height="20" viewBox="0 0 20 20"><path d="M2 9L10 5L18 9L10 13Z" fill="#ddd" stroke="#555" stroke-width="0.6"/><path d="M2 11L10 15L18 11" stroke="#c87030" stroke-width="1.2" fill="none"/></svg><svg style="left:33px;top:1240px" width="5" height="7"><path d="M0 0L5 3.5L0 7Z" fill="#999"/></svg><svg style="left:14px;top:1253px" width="20" height="20" viewBox="0 0 20 20"><circle cx="10" cy="10" r="7.5" fill="#aaa" stroke="#666"/><circle cx="7" cy="8" r="2" fill="#555"/><circle cx="13" cy="8" r="2" fill="#555"/><circle cx="10" cy="13" r="2" fill="#555"/></svg><svg style="left:33px;top:1266px" width="5" height="7"><path d="M0 0L5 3.5L0 7Z" fill="#999"/></svg><svg style="left:2px;top:646px" width="5" height="7"><path d="M0 0L5 3.5L0 7Z" fill="#999"/></svg><svg style="left:2px;top:708px" width="5" height="7"><path d="M0 0L5 3.5L0 7Z" fill="#999"/></svg><svg style="left:1px;top:668px" width="6" height="20"><rect x="1" y="1" width="1" height="1" fill="#888"/><rect x="1" y="4" width="1" height="1" fill="#888"/><rect x="1" y="7" width="1" height="1" fill="#888"/><rect x="1" y="10" width="1" height="1" fill="#888"/><rect x="1" y="13" width="1" height="1" fill="#888"/><rect x="1" y="16" width="1" height="1" fill="#888"/><rect x="4" y="1" width="1" height="1" fill="#888"/><rect x="4" y="4" width="1" height="1" fill="#888"/><rect x="4" y="7" width="1" height="1" fill="#888"/><rect x="4" y="10" width="1" height="1" fill="#888"/><rect x="4" y="13" width="1" height="1" fill="#888"/><rect x="4" y="16" width="1" height="1" fill="#888"/></svg><div class="a" style="left:1709px;top:168px;width:25px;height:10px;background:#4a4a4a;border:1px solid #222;box-sizing:border-box"></div><svg style="left:1725px;top:169px" width="8" height="8"><path d="M8 4L0 0V8Z" fill="#111"/></svg><svg style="left:1711px;top:183px" width="20" height="20" viewBox="0 0 20 20"><path d="M2 10L10 5L18 10L10 15Z" fill="none" stroke="#ccc" stroke-width="1.2"/><path d="M5 10L10 7L15 10L10 13Z" fill="none" stroke="#ccc" stroke-width="0.8"/></svg><svg style="left:1730px;top:196px" width="5" height="7"><path d="M0 0L5 3.5L0 7Z" fill="#999"/></svg><svg style="left:1711px;top:206px" width="20" height="20" viewBox="0 0 20 20"><path d="M3 3L15 5L17 17L5 15Z" fill="none" stroke="#60b040" stroke-width="1.2"/><circle cx="10" cy="10" r="4" fill="none" stroke="#ccc" stroke-width="1.2"/></svg><svg style="left:1730px;top:219px" width="5" height="7"><path d="M0 0L5 3.5L0 7Z" fill="#999"/></svg><svg style="left:1711px;top:231px" width="20" height="20" viewBox="0 0 20 20"><rect x="4" y="9" width="12" height="9" fill="#e0e0e0"/><path d="M6 9V6C6 2 14 2 14 6V9" stroke="#ddd" stroke-width="1.8" fill="none"/></svg><svg style="left:1711px;top:255px" width="20" height="20" viewBox="0 0 20 20"><circle cx="10" cy="8" r="5.5" fill="#555" stroke="#ddd" stroke-width="1"/><path d="M7.5 5.5L12.5 10.5M12.5 5.5L7.5 10.5" stroke="#eee" stroke-width="1.5"/><rect x="8" y="14" width="4" height="4" fill="#777"/></svg><div class="a" style="left:1709px;top:280px;width:24px;height:24px;background:#8e9ba3;border:1px solid #aab5bb;box-sizing:border-box"></div><svg style="left:1711px;top:282px" width="20" height="20" viewBox="0 0 20 20"><circle cx="10" cy="10" r="6.5" fill="#ddd" stroke="#555"/><circle cx="10" cy="10" r="3" fill="#888"/></svg><svg style="left:1711px;top:305px" width="20" height="20" viewBox="0 0 20 20"><circle cx="10" cy="8" r="5" fill="#bbb"/><rect x="8" y="13" width="4" height="5" fill="#666"/></svg><svg style="left:1730px;top:318px" width="5" height="7"><path d="M0 0L5 3.5L0 7Z" fill="#999"/></svg><svg style="left:1711px;top:329px" width="20" height="20" viewBox="0 0 20 20"><circle cx="10" cy="8" r="5" fill="#d8d040"/><path d="M10 5V11M7 8H13" stroke="#333" stroke-width="1.5"/><rect x="8" y="13" width="4" height="5" fill="#666"/></svg><svg style="left:1730px;top:342px" width="5" height="7"><path d="M0 0L5 3.5L0 7Z" fill="#999"/></svg><svg style="left:1711px;top:353px" width="20" height="20" viewBox="0 0 20 20"><circle cx="10" cy="7" r="4.5" fill="#ccc"/><path d="M10 4.5V9.5M7.5 7H12.5" stroke="#333" stroke-width="1.4"/><ellipse cx="10" cy="15" rx="7" ry="2.5" fill="none" stroke="#ccc" stroke-width="1.2"/></svg><svg style="left:1730px;top:366px" width="5" height="7"><path d="M0 0L5 3.5L0 7Z" fill="#999"/></svg><svg style="left:1711px;top:381px" width="20" height="20" viewBox="0 0 20 20"><path d="M3 5L10 2L17 5V14L10 18L3 14Z" fill="#888"/><rect x="4" y="5" width="5" height="5" fill="#eee"/><rect x="10" y="10" width="5" height="5" fill="#eee"/></svg><svg style="left:1730px;top:394px" width="5" height="7"><path d="M0 0L5 3.5L0 7Z" fill="#999"/></svg><svg style="left:1711px;top:404px" width="20" height="20" viewBox="0 0 20 20"><path d="M2 10C5 5 14 5 18 10C14 14 5 14 2 10Z" fill="none" stroke="#ccc" stroke-width="1.3"/><circle cx="10" cy="10" r="2" fill="#ccc"/></svg><svg style="left:1730px;top:417px" width="5" height="7"><path d="M0 0L5 3.5L0 7Z" fill="#999"/></svg><svg style="left:1711px;top:428px" width="20" height="20" viewBox="0 0 20 20"><path d="M4 10C7 5 14 5 18 10" stroke="#ccc" stroke-width="1.3" fill="none"/><rect x="3" y="10" width="9" height="7" fill="#889aa8"/></svg><svg style="left:1730px;top:441px" width="5" height="7"><path d="M0 0L5 3.5L0 7Z" fill="#999"/></svg><div class="a" style="left:1711px;top:455px;width:22px;height:1px;background:#2a2a2a"></div><svg style="left:1711px;top:459px" width="20" height="20" viewBox="0 0 20 20"><circle cx="10" cy="10" r="2.5" fill="#ddd"/></svg><svg style="left:1711px;top:485px" width="20" height="20" viewBox="0 0 20 20"><circle cx="6" cy="14" r="2" fill="#ddd"/><path d="M7 13L15 5" stroke="#ddd" stroke-width="1.3"/></svg><svg style="left:1711px;top:510px" width="20" height="20" viewBox="0 0 20 20"><circle cx="6" cy="15" r="2" fill="#ddd"/><path d="M6 15L16 4" stroke="#ddd" stroke-width="2"/></svg><svg style="left:1711px;top:535px" width="20" height="20" viewBox="0 0 20 20"><circle cx="5" cy="15" r="2.5" fill="#ddd"/><text x="13" y="10" font-size="9" font-weight="bold" fill="#ddd" text-anchor="middle" font-family="Liberation Sans">12</text></svg><svg style="left:1711px;top:560px" width="20" height="20" viewBox="0 0 20 20"><path d="M3 13L12 9L17 14L8 18Z" fill="#ccc"/><path d="M10 10L14 3" stroke="#ddd" stroke-width="2"/></svg><svg style="left:1711px;top:585px" width="20" height="20" viewBox="0 0 20 20"><path d="M2 14L12 10L18 15L8 19Z" fill="#ccc"/><text x="12" y="9" font-size="9" font-weight="bold" fill="#ddd" text-anchor="middle" font-family="Liberation Sans">12</text></svg><svg style="left:1711px;top:610px" width="20" height="20" viewBox="0 0 20 20"><path d="M4 17V4H16" stroke="#ccc" stroke-width="1.2" fill="none"/><path d="M4 17C4 9 9 4 16 4" stroke="#ccc" stroke-width="1" fill="none"/></svg><svg style="left:1711px;top:635px" width="20" height="20" viewBox="0 0 20 20"><rect x="4" y="4" width="12" height="12" fill="#666"/><rect x="3" y="3" width="4" height="4" fill="#ddd"/><rect x="13" y="3" width="4" height="4" fill="#ddd"/><rect x="3" y="13" width="4" height="4" fill="#ddd"/><rect x="13" y="13" width="4" height="4" fill="#ddd"/></svg><svg style="left:1711px;top:660px" width="20" height="20" viewBox="0 0 20 20"><path d="M2 10H10M10 10L16 4M10 10L16 16" stroke="#ddd" stroke-width="1.5"/><circle cx="10" cy="10" r="2.5" fill="#ddd"/></svg><svg style="left:1711px;top:685px" width="20" height="20" viewBox="0 0 20 20"><circle cx="10" cy="10" r="7.5" fill="#333" stroke="#ccc" stroke-width="1.2"/><rect x="5" y="7" width="10" height="6" fill="#ccc"/><path d="M5 10H15" stroke="#333"/></svg><svg style="left:1711px;top:710px" width="20" height="20" viewBox="0 0 20 20"><text x="10" y="14" font-size="10" fill="#ddd" text-anchor="middle" font-family="Liberation Sans">abc</text></svg><div class="a" style="left:1709px;top:733px;width:24px;height:24px;background:#8e9ba3;border:1px solid #aab5bb;box-sizing:border-box"></div><svg style="left:1711px;top:735px" width="20" height="20" viewBox="0 0 20 20"><rect x="3" y="4" width="14" height="12" fill="#eee" stroke="#333"/><path d="M4 15L9 9L12 12L16 8V15Z" fill="#555"/></svg><div class="a" style="left:1711px;top:763px;width:22px;height:1px;background:#2a2a2a"></div><div class="a" style="left:1709px;top:770px;width:24px;height:24px;background:#8e9ba3;border:1px solid #aab5bb;box-sizing:border-box"></div><svg style="left:1711px;top:772px" width="20" height="20" viewBox="0 0 20 20"><path d="M10 18C6 12 5 10 5 8C5 5 7 3 10 3S15 5 15 8C15 10 14 12 10 18Z" fill="#ddd" stroke="#555" stroke-width="0.8"/><circle cx="10" cy="8" r="2" fill="#888"/></svg><svg style="left:1730px;top:785px" width="5" height="7"><path d="M0 0L5 3.5L0 7Z" fill="#999"/></svg><div class="a" style="left:1711px;top:1201px;width:22px;height:1px;background:#2a2a2a"></div><svg style="left:1711px;top:1206px" width="20" height="20" viewBox="0 0 20 20"><circle cx="10" cy="10" r="7" fill="#3a4046" stroke="#ccc" stroke-width="1.2"/><text x="10" y="14" font-size="11" font-style="italic" font-weight="bold" fill="#ddd" text-anchor="middle" font-family="Liberation Serif">i</text></svg><div class="a" style="left:1709px;top:1230px;width:24px;height:24px;background:#8e9ba3;border:1px solid #aab5bb;box-sizing:border-box"></div><svg style="left:1711px;top:1232px" width="20" height="20" viewBox="0 0 20 20"><rect x="4" y="4" width="12" height="12" fill="#aab" stroke="#e0c020" stroke-width="1.6"/><path d="M10 4V16M4 10H16" stroke="#555" stroke-width="1.4"/></svg><svg style="left:1711px;top:1256px" width="20" height="20" viewBox="0 0 20 20"><rect x="3" y="4" width="14" height="12" fill="#f0f0f0"/><path d="M4 10C7 6 13 6 16 10C13 14 7 14 4 10Z" fill="#ddd" stroke="#222" stroke-width="0.8"/><circle cx="10" cy="10" r="2.5" fill="#111"/></svg><svg style="left:1730px;top:1269px" width="5" height="7"><path d="M0 0L5 3.5L0 7Z" fill="#999"/></svg><div class="a" style="left:1585px;top:172px;width:48px;height:18px;border:1px solid #777;border-radius:10px;background:#141414;box-sizing:border-box"></div><div class="t" style="left:1592px;top:174.0px;height:14px;line-height:14px;font-size:10.5px;color:#e0e0e0;">Front</div><svg style="left:1620px;top:179px" width="7" height="4"><path d="M0 0H7L3.5 4Z" fill="#ddd"/></svg><div class="a" style="left:1641px;top:172px;width:61px;height:18px;border:1px solid #777;border-radius:10px;background:#141414;box-sizing:border-box"></div><div class="t" style="left:1649px;top:174.0px;height:14px;line-height:14px;font-size:10.5px;color:#e0e0e0;">No cam</div><svg style="left:1689px;top:179px" width="7" height="4"><path d="M0 0H7L3.5 4Z" fill="#ddd"/></svg><svg style="left:56px;top:1230px" width="36" height="30"><path d="M6 6V23" stroke="#30c030" stroke-width="1.2"/><path d="M6 23H25" stroke="#d02020" stroke-width="1.2"/><path d="M6 23L9 20" stroke="#3040d0" stroke-width="1.2"/><text x="7" y="8" font-size="9" fill="#30c030" font-family="Liberation Sans">y</text><text x="26" y="25" font-size="9" fill="#d02020" font-family="Liberation Sans">x</text><text x="8" y="24" font-size="7" fill="#3040d0" font-family="Liberation Sans">z</text></svg><div class="t" style="left:482px;top:1256.5px;height:15px;line-height:15px;font-size:11.1px;color:#d8d8d8;">Left mouse tumbles. Middle pans. Right dollies. Ctrl+Alt+Left box-zooms. Ctrl+Right zooms. Spacebar-Ctrl-Left tilts. Hold L for alternate tumble, dolly, and zoom.</div><div class="a" style="left:1740px;top:83px;width:819px;height:18px;background:#2c2c2c"></div><div class="a" style="left:1741px;top:83px;width:91px;height:18px;background:#464646"></div><div class="t" style="left:1747px;top:86.0px;height:14px;line-height:14px;font-size:10.1px;color:#d0d0d0;font-style:italic;">planarpatch1</div><svg style="left:1821px;top:89px" width="6" height="6"><path d="M0.8 0.8L5.2 5.2M5.2 0.8L0.8 5.2" stroke="#ddd" stroke-width="1.5"/></svg><div class="a" style="left:1832px;top:83px;width:74px;height:18px;background:#2c2c2c;border-left:1px solid #151515;box-sizing:border-box"></div><div class="t" style="left:1839px;top:86.0px;height:14px;line-height:14px;font-size:10.1px;color:#cccccc;">Take List</div><svg style="left:1895px;top:89px" width="6" height="6"><path d="M0.8 0.8L5.2 5.2M5.2 0.8L0.8 5.2" stroke="#ddd" stroke-width="1.5"/></svg><div class="a" style="left:1906px;top:83px;width:125px;height:18px;background:#2c2c2c;border-left:1px solid #151515;box-sizing:border-box"></div><div class="t" style="left:1913px;top:86.0px;height:14px;line-height:14px;font-size:10.1px;color:#cccccc;">Performance Monitor</div><svg style="left:2020px;top:89px" width="6" height="6"><path d="M0.8 0.8L5.2 5.2M5.2 0.8L0.8 5.2" stroke="#ddd" stroke-width="1.5"/></svg><svg style="left:2039px;top:87px" width="10" height="10"><path d="M5 0V10M0 5H10" stroke="#ddd" stroke-width="2"/></svg><div class="a" style="left:2526px;top:88px;width:11px;height:10px;background:linear-gradient(#e8e8e8,#bdbdbd)"></div><svg style="left:2547px;top:89px" width="8" height="6"><path d="M0 0H8L4 6Z" fill="#ddd"/></svg><div class="a" style="left:1740px;top:101px;width:819px;height:34px;background:#3d3d3d"></div><svg style="left:1746px;top:111px" width="18" height="17"><path d="M1 7L7 1V4H13V10H7V13Z" fill="#d8d8d8" stroke="#333" stroke-width="0.6"/><path d="M12 11L15 13.5L12 16Z" fill="#aaa"/></svg><svg style="left:1771px;top:111px" width="14" height="14"><path d="M13 7L7 1V4H1V10H7V13Z" fill="#6a6a6a"/></svg><div class="a" style="left:1796px;top:107px;width:710px;height:24px;background:#383838;border:1px solid #0e0e0e;box-sizing:border-box"></div><svg style="left:1803px;top:110px" width="17" height="18"><rect x="1" y="8" width="15" height="9" fill="#56646a"/><rect x="2" y="10" width="13" height="5" fill="#7a8a90" opacity="0.6"/><path d="M1 3L15 1L15.5 4L1.5 6Z" fill="#2a2a2a"/><path d="M1 7H16V8H1Z" fill="#2a2a2a"/><path d="M4 2.5H6M8 2H10M12 1.7H14M3 7.5H5M7 7.5H9M11 7.5H13" stroke="#ccc" stroke-width="1"/><rect x="1.5" y="3" width="3" height="3" fill="#9ab"/></svg><div class="t" style="left:1824px;top:111.0px;height:16px;line-height:16px;font-size:11.5px;color:#e0e0e0;">obj</div><svg style="left:1846px;top:108px" width="8" height="22"><path d="M1 0L6 11L1 22" stroke="#151515" stroke-width="1.2" fill="none"/></svg><svg style="left:1859px;top:109px" width="20" height="19"><defs><linearGradient id="tc1796101" x1="0" x2="1"><stop offset="0" stop-color="#2a5a98"/><stop offset="0.5" stop-color="#8ab8e8"/><stop offset="1" stop-color="#2a5a98"/></linearGradient><radialGradient id="ts1796101" cx="0.35" cy="0.35" r="0.7"><stop offset="0" stop-color="#ff9a8a"/><stop offset="0.5" stop-color="#e02818"/><stop offset="1" stop-color="#901008"/></radialGradient><linearGradient id="tk1796101" x1="0" x2="1"><stop offset="0" stop-color="#c8b010"/><stop offset="0.5" stop-color="#fff070"/><stop offset="1" stop-color="#d0b820"/></linearGradient></defs><rect x="1" y="2" width="7" height="12" fill="url(#tc1796101)"/><ellipse cx="4.5" cy="2.5" rx="3.5" ry="1.6" fill="#b8d8f8"/><circle cx="15" cy="9" r="4.3" fill="url(#ts1796101)"/><path d="M9.5 5L15 17H4Z" fill="url(#tk1796101)"/></svg><div class="t" style="left:1881px;top:111.0px;height:16px;line-height:16px;font-size:11.5px;color:#e0e0e0;">trousers_female</div><div class="a" style="left:2488px;top:108px;width:17px;height:22px;background:#333;border-left:1px solid #2a2a2a"></div><svg style="left:2492px;top:116px" width="9" height="6"><path d="M0 0H9L4.5 6Z" fill="#999"/></svg><svg style="left:2512px;top:111px" width="22" height="16"><path d="M2 8H9M9 3V13M9 5H15L17 3V13L15 11H9" stroke="#ddd" stroke-width="1.6" fill="#bbb"/></svg><svg style="left:2537px;top:109px" width="20" height="20"><circle cx="10" cy="10" r="8" fill="none" stroke="#4a78c0" stroke-width="1.5"/><circle cx="10" cy="10" r="4.5" fill="none" stroke="#4a78c0" stroke-width="1.5"/><circle cx="10" cy="10" r="1.5" fill="#4a78c0"/></svg><div class="a" style="left:1740px;top:135px;width:819px;height:1px;background:#151515"></div><div class="a" style="left:1740px;top:136px;width:819px;height:544px;background:#3b3b3b"></div><svg style="left:1745px;top:140px" width="22" height="21"><path d="M4 11L10 5L19 12L12 19Z" fill="#5a92d8"/><path d="M12 19L19 12L19.5 13L12.5 20Z" fill="#3a6ab0"/><path d="M3 10.5L9.5 4" stroke="#a8ccf4" stroke-width="3.6" stroke-linecap="round"/><circle cx="3" cy="11" r="1.5" fill="#d89030"/><path d="M13 17H19L16 20Z" fill="#999"/></svg><div class="t" style="left:1768px;top:142.5px;height:15px;line-height:15px;font-size:10.9px;color:#dcdcdc;"><b>Planar Patch</b></div><div class="a" style="left:1837px;top:139px;width:601px;height:23px;background:#151515;border-top:1px solid #2a2a2a;box-sizing:border-box"></div><div class="t" style="left:1842px;top:142.5px;height:16px;line-height:16px;font-size:11.7px;color:#e8e8e8;font-family:'Liberation Mono',monospace">planarpatch1</div><svg style="left:2440px;top:141px" width="20" height="20"><g fill="#eee"><circle cx="9" cy="9" r="4"/></g><path d="M9 2V16M2 9H16M4 4L14 14M14 4L4 14" stroke="#eee" stroke-width="2"/><circle cx="9" cy="9" r="2" fill="#333"/><path d="M13 16H19L16 19Z" fill="#999"/></svg><svg style="left:2463px;top:140px" width="22" height="21"><path d="M5 2H9L8 8H12L13 2H17L14 17H10L11 11H7L6 17H2Z" fill="#1a2c68" stroke="#e8e8e8" stroke-width="1.1" stroke-linejoin="round"/><path d="M15 17H21L18 20Z" fill="#999"/></svg><svg style="left:2488px;top:141px" width="19" height="19"><circle cx="8" cy="8" r="5" fill="#3a444a" stroke="#ddd" stroke-width="1.6"/><path d="M11.5 11.5L16 16" stroke="#ddd" stroke-width="2.2"/></svg><svg style="left:2512px;top:141px" width="19" height="19"><circle cx="9.5" cy="9.5" r="7.5" fill="#333" stroke="#ddd" stroke-width="1.2"/><text x="9.5" y="14" font-size="12" font-style="italic" font-weight="bold" fill="#ddd" text-anchor="middle" font-family="Liberation Serif">i</text></svg><svg style="left:2536px;top:141px" width="19" height="19"><circle cx="9.5" cy="9.5" r="7.5" fill="#333" stroke="#ddd" stroke-width="1.2"/><text x="9.5" y="14" font-size="12" font-weight="bold" fill="#ddd" text-anchor="middle" font-family="Liberation Sans">?</text></svg><div class="a" style="left:1743px;top:162px;width:813px;height:1px;background:#111"></div><div class="t" style="left:1565px;width:300px;text-align:right;top:170.5px;height:15px;line-height:15px;font-size:11px;color:#cacaca;">Build Plane</div><div class="a" style="left:1880px;top:167px;width:92px;height:20px;background:linear-gradient(#4e4e4e,#424242);border:1px solid #2a2a2a;box-sizing:border-box"></div><div class="a" style="left:1950px;top:167px;width:22px;height:20px;background:#3a3a3a;border:1px solid #2a2a2a;box-sizing:border-box"></div><svg style="left:1957px;top:170px" width="8" height="14"><path d="M4 0L8 5.5H0ZM4 14L8 8.5H0Z" fill="#aaa"/></svg><div class="t" style="left:1815.0px;width:200px;text-align:center;top:169.5px;height:15px;line-height:15px;font-size:11px;color:#d0d0d0;">XY Plane</div><div class="t" style="left:1565px;width:300px;text-align:right;top:195.5px;height:15px;line-height:15px;font-size:11px;color:#cacaca;">Edge Length</div><div class="a" style="left:1880px;top:193.0px;width:111px;height:21px;background:#131313;border-top:1px solid #262626;box-sizing:border-box"></div><div class="t" style="left:1884px;top:196.0px;height:16px;line-height:16px;font-size:11.7px;color:#e8e8e8;font-family:'Liberation Mono',monospace"><b>0.025</b></div><div class="a" style="left:1995px;top:199px;width:4px;height:9px;background:#111;border-radius:2px"></div><div class="a" style="left:1996px;top:201.5px;width:560px;height:4px;background:#050505;border-radius:2px"></div><div class="a" style="left:1997px;top:202.5px;width:7px;height:2px;background:#2f6cc8"></div><div class="a" style="left:2000px;top:193.5px;width:7px;height:21px;background:linear-gradient(90deg,#777,#c8c8c8 40%,#888);border:1px solid #222;box-sizing:border-box;border-radius:1px"></div><div class="a" style="left:1880px;top:219.5px;width:14px;height:14px;background:#151515;border:1px solid #2a2a2a;box-sizing:border-box"></div><div class="t" style="left:1901px;top:218.5px;height:15px;line-height:15px;font-size:11px;color:#cacaca;">Output Curves</div><div class="a" style="left:1744px;top:245px;width:812px;height:119px;border:1px solid #2b2b2b;border-radius:5px;box-sizing:border-box"></div><div class="a" style="left:1749px;top:237px;width:55px;height:14px;background:#3b3b3b"></div><div class="t" style="left:1751px;top:237.5px;height:15px;line-height:15px;font-size:11px;color:#cacaca;">Dimensions</div><div class="t" style="left:1574px;width:300px;text-align:right;top:261.5px;height:15px;line-height:15px;font-size:11px;color:#cacaca;">Shape</div><div class="a" style="left:1890px;top:258px;width:98px;height:20px;background:linear-gradient(#4e4e4e,#424242);border:1px solid #2a2a2a;box-sizing:border-box"></div><div class="a" style="left:1966px;top:258px;width:22px;height:20px;background:#3a3a3a;border:1px solid #2a2a2a;box-sizing:border-box"></div><svg style="left:1973px;top:261px" width="8" height="14"><path d="M4 0L8 5.5H0ZM4 14L8 8.5H0Z" fill="#aaa"/></svg><div class="t" style="left:1828.0px;width:200px;text-align:center;top:260.5px;height:15px;line-height:15px;font-size:11px;color:#d0d0d0;">Rectangle</div><div class="t" style="left:1574px;width:300px;text-align:right;top:286.5px;height:15px;line-height:15px;font-size:11px;color:#cacaca;">Size</div><div class="a" style="left:1890px;top:284.0px;width:328px;height:21px;background:#131313;border-top:1px solid #262626;box-sizing:border-box"></div><div class="t" style="left:1894px;top:287.0px;height:16px;line-height:16px;font-size:11.7px;color:#e8e8e8;font-family:'Liberation Mono',monospace">1</div><div class="a" style="left:2220px;top:284.0px;width:329px;height:21px;background:#131313;border-top:1px solid #262626;box-sizing:border-box"></div><div class="t" style="left:2224px;top:287.0px;height:16px;line-height:16px;font-size:11.7px;color:#e8e8e8;font-family:'Liberation Mono',monospace">1</div><div class="t" style="left:1574px;width:300px;text-align:right;top:311.5px;height:15px;line-height:15px;font-size:11px;color:#cacaca;">Center</div><div class="a" style="left:1890px;top:309.0px;width:218px;height:21px;background:#131313;border-top:1px solid #262626;box-sizing:border-box"></div><div class="t" style="left:1894px;top:312.0px;height:16px;line-height:16px;font-size:11.7px;color:#e8e8e8;font-family:'Liberation Mono',monospace">0</div><div class="a" style="left:2110px;top:309.0px;width:219px;height:21px;background:#131313;border-top:1px solid #262626;box-sizing:border-box"></div><div class="t" style="left:2114px;top:312.0px;height:16px;line-height:16px;font-size:11.7px;color:#e8e8e8;font-family:'Liberation Mono',monospace">0</div><div class="a" style="left:2331px;top:309.0px;width:218px;height:21px;background:#131313;border-top:1px solid #262626;box-sizing:border-box"></div><div class="t" style="left:2335px;top:312.0px;height:16px;line-height:16px;font-size:11.7px;color:#e8e8e8;font-family:'Liberation Mono',monospace">0</div><div class="t" style="left:1574px;width:300px;text-align:right;top:336.5px;height:15px;line-height:15px;font-size:11px;color:#cacaca;">Uniform Scale</div><div class="a" style="left:1890px;top:334.0px;width:108px;height:21px;background:#131313;border-top:1px solid #262626;box-sizing:border-box"></div><div class="t" style="left:1894px;top:337.0px;height:16px;line-height:16px;font-size:11.7px;color:#e8e8e8;font-family:'Liberation Mono',monospace">1</div><div class="a" style="left:2003px;top:342.5px;width:545px;height:4px;background:#050505;border-radius:2px"></div><div class="a" style="left:2004px;top:343.5px;width:54px;height:2px;background:#2f6cc8"></div><div class="a" style="left:2054px;top:334.5px;width:7px;height:21px;background:linear-gradient(90deg,#777,#c8c8c8 40%,#888);border:1px solid #222;box-sizing:border-box;border-radius:1px"></div><div class="a" style="left:1744px;top:375px;width:812px;height:267px;border:1px solid #2b2b2b;border-radius:5px;box-sizing:border-box"></div><div class="a" style="left:1749px;top:367px;width:36px;height:14px;background:#3b3b3b"></div><div class="t" style="left:1751px;top:366.5px;height:15px;line-height:15px;font-size:11px;color:#cacaca;">Seams</div><div class="a" style="left:1754px;top:390.5px;width:14px;height:14px;background:#151515;border:1px solid #2a2a2a;box-sizing:border-box"></div><svg style="left:1755px;top:390.5px" width="13" height="13"><path d="M2 7L5 11L12 2" stroke="#e0e0e0" stroke-width="2.4" fill="none"/></svg><div class="t" style="left:1574px;width:300px;text-align:right;top:389.5px;height:15px;line-height:15px;font-size:11px;color:#cacaca;">Patch Name</div><div class="a" style="left:1890px;top:387.0px;width:659px;height:21px;background:#131313;border-top:1px solid #262626;box-sizing:border-box"></div><div class="t" style="left:1894px;top:390.0px;height:16px;line-height:16px;font-size:11.7px;color:#e8e8e8;font-family:'Liberation Mono',monospace">$OS</div><div class="a" style="left:1754px;top:415.5px;width:14px;height:14px;background:#151515;border:1px solid #2a2a2a;box-sizing:border-box"></div><svg style="left:1755px;top:415.5px" width="13" height="13"><path d="M2 7L5 11L12 2" stroke="#e0e0e0" stroke-width="2.4" fill="none"/></svg><div class="t" style="left:1574px;width:300px;text-align:right;top:414.5px;height:15px;line-height:15px;font-size:11px;color:#cacaca;">Left Seam</div><div class="a" style="left:1890px;top:412.0px;width:577px;height:21px;background:#131313;border-top:1px solid #262626;box-sizing:border-box"></div><div class="t" style="left:1894px;top:415.0px;height:16px;line-height:16px;font-size:11.7px;color:#e8e8e8;font-family:'Liberation Mono',monospace">${OS}_left</div><div class="a" style="left:2476px;top:415.5px;width:14px;height:14px;background:#151515;border:1px solid #2a2a2a;box-sizing:border-box"></div><div class="t" style="left:2497px;top:415.0px;height:14px;line-height:14px;font-size:10px;color:#cacaca;">Reverse</div><div class="a" style="left:1754px;top:440.5px;width:14px;height:14px;background:#151515;border:1px solid #2a2a2a;box-sizing:border-box"></div><svg style="left:1755px;top:440.5px" width="13" height="13"><path d="M2 7L5 11L12 2" stroke="#e0e0e0" stroke-width="2.4" fill="none"/></svg><div class="t" style="left:1574px;width:300px;text-align:right;top:439.5px;height:15px;line-height:15px;font-size:11px;color:#cacaca;">Left Points</div><div class="a" style="left:1890px;top:437.0px;width:108px;height:21px;background:#131313;border-top:1px solid #262626;box-sizing:border-box"></div><div class="t" style="left:1894px;top:440.0px;height:16px;line-height:16px;font-size:11.7px;color:#e8e8e8;font-family:'Liberation Mono',monospace"><b>50</b></div><div class="a" style="left:2003px;top:444.5px;width:545px;height:4px;background:#050505;border-radius:2px"></div><div class="a" style="left:2004px;top:445.5px;width:542px;height:2px;background:#2f6cc8"></div><div class="a" style="left:2003px;top:450.5px;width:1px;height:3px;background:#bbbbbb"></div><div class="a" style="left:2033px;top:450.5px;width:1px;height:3px;background:#bbbbbb"></div><div class="a" style="left:2063px;top:450.5px;width:1px;height:3px;background:#bbbbbb"></div><div class="a" style="left:2093px;top:450.5px;width:1px;height:3px;background:#bbbbbb"></div><div class="a" style="left:2123px;top:450.5px;width:1px;height:3px;background:#bbbbbb"></div><div class="a" style="left:2153px;top:450.5px;width:1px;height:3px;background:#bbbbbb"></div><div class="a" style="left:2183px;top:450.5px;width:1px;height:3px;background:#bbbbbb"></div><div class="a" style="left:2213px;top:450.5px;width:1px;height:3px;background:#bbbbbb"></div><div class="a" style="left:2243px;top:450.5px;width:1px;height:3px;background:#bbbbbb"></div><div class="a" style="left:2273px;top:450.5px;width:1px;height:3px;background:#bbbbbb"></div><div class="a" style="left:2304px;top:450.5px;width:1px;height:3px;background:#bbbbbb"></div><div class="a" style="left:2334px;top:450.5px;width:1px;height:3px;background:#bbbbbb"></div><div class="a" style="left:2364px;top:450.5px;width:1px;height:3px;background:#bbbbbb"></div><div class="a" style="left:2394px;top:450.5px;width:1px;height:3px;background:#bbbbbb"></div><div class="a" style="left:2424px;top:450.5px;width:1px;height:3px;background:#bbbbbb"></div><div class="a" style="left:2454px;top:450.5px;width:1px;height:3px;background:#bbbbbb"></div><div class="a" style="left:2484px;top:450.5px;width:1px;height:3px;background:#bbbbbb"></div><div class="a" style="left:2514px;top:450.5px;width:1px;height:3px;background:#bbbbbb"></div><div class="a" style="left:2542px;top:436.5px;width:7px;height:21px;background:linear-gradient(90deg,#777,#c8c8c8 40%,#888);border:1px solid #222;box-sizing:border-box;border-radius:1px"></div><div class="a" style="left:1754px;top:465.5px;width:14px;height:14px;background:#151515;border:1px solid #2a2a2a;box-sizing:border-box"></div><svg style="left:1755px;top:465.5px" width="13" height="13"><path d="M2 7L5 11L12 2" stroke="#e0e0e0" stroke-width="2.4" fill="none"/></svg><div class="t" style="left:1574px;width:300px;text-align:right;top:464.5px;height:15px;line-height:15px;font-size:11px;color:#cacaca;">Right Seam</div><div class="a" style="left:1890px;top:462.0px;width:577px;height:21px;background:#131313;border-top:1px solid #262626;box-sizing:border-box"></div><div class="t" style="left:1894px;top:465.0px;height:16px;line-height:16px;font-size:11.7px;color:#e8e8e8;font-family:'Liberation Mono',monospace">${OS}_right</div><div class="a" style="left:2476px;top:465.5px;width:14px;height:14px;background:#151515;border:1px solid #2a2a2a;box-sizing:border-box"></div><div class="t" style="left:2497px;top:465.0px;height:14px;line-height:14px;font-size:10px;color:#cacaca;">Reverse</div><div class="a" style="left:1754px;top:490.5px;width:14px;height:14px;background:#151515;border:1px solid #2a2a2a;box-sizing:border-box"></div><svg style="left:1755px;top:490.5px" width="13" height="13"><path d="M2 7L5 11L12 2" stroke="#e0e0e0" stroke-width="2.4" fill="none"/></svg><div class="t" style="left:1574px;width:300px;text-align:right;top:489.5px;height:15px;line-height:15px;font-size:11px;color:#cacaca;">Right Points</div><div class="a" style="left:1890px;top:487.0px;width:108px;height:21px;background:#131313;border-top:1px solid #262626;box-sizing:border-box"></div><div class="t" style="left:1894px;top:490.0px;height:16px;line-height:16px;font-size:11.7px;color:#e8e8e8;font-family:'Liberation Mono',monospace"><b>50</b></div><div class="a" style="left:2003px;top:494.5px;width:545px;height:4px;background:#050505;border-radius:2px"></div><div class="a" style="left:2004px;top:495.5px;width:542px;height:2px;background:#2f6cc8"></div><div class="a" style="left:2003px;top:500.5px;width:1px;height:3px;background:#bbbbbb"></div><div class="a" style="left:2033px;top:500.5px;width:1px;height:3px;background:#bbbbbb"></div><div class="a" style="left:2063px;top:500.5px;width:1px;height:3px;background:#bbbbbb"></div><div class="a" style="left:2093px;top:500.5px;width:1px;height:3px;background:#bbbbbb"></div><div class="a" style="left:2123px;top:500.5px;width:1px;height:3px;background:#bbbbbb"></div><div class="a" style="left:2153px;top:500.5px;width:1px;height:3px;background:#bbbbbb"></div><div class="a" style="left:2183px;top:500.5px;width:1px;height:3px;background:#bbbbbb"></div><div class="a" style="left:2213px;top:500.5px;width:1px;height:3px;background:#bbbbbb"></div><div class="a" style="left:2243px;top:500.5px;width:1px;height:3px;background:#bbbbbb"></div><div class="a" style="left:2273px;top:500.5px;width:1px;height:3px;background:#bbbbbb"></div><div class="a" style="left:2304px;top:500.5px;width:1px;height:3px;background:#bbbbbb"></div><div class="a" style="left:2334px;top:500.5px;width:1px;height:3px;background:#bbbbbb"></div><div class="a" style="left:2364px;top:500.5px;width:1px;height:3px;background:#bbbbbb"></div><div class="a" style="left:2394px;top:500.5px;width:1px;height:3px;background:#bbbbbb"></div><div class="a" style="left:2424px;top:500.5px;width:1px;height:3px;background:#bbbbbb"></div><div class="a" style="left:2454px;top:500.5px;width:1px;height:3px;background:#bbbbbb"></div><div class="a" style="left:2484px;top:500.5px;width:1px;height:3px;background:#bbbbbb"></div><div class="a" style="left:2514px;top:500.5px;width:1px;height:3px;background:#bbbbbb"></div><div class="a" style="left:2542px;top:486.5px;width:7px;height:21px;background:linear-gradient(90deg,#777,#c8c8c8 40%,#888);border:1px solid #222;box-sizing:border-box;border-radius:1px"></div><div class="a" style="left:1754px;top:515.5px;width:14px;height:14px;background:#151515;border:1px solid #2a2a2a;box-sizing:border-box"></div><div class="t" style="left:1574px;width:300px;text-align:right;top:514.5px;height:15px;line-height:15px;font-size:11px;color:#8a8a8a;">Top Seam</div><div class="a" style="left:1890px;top:512.0px;width:577px;height:21px;background:#2f2f2f;border-top:1px solid #333;box-sizing:border-box"></div><div class="t" style="left:1894px;top:515.0px;height:16px;line-height:16px;font-size:11.7px;color:#575757;font-family:'Liberation Mono',monospace">${OS}_top</div><div class="a" style="left:2476px;top:515.5px;width:14px;height:14px;background:#2e2e2e;border:1px solid #343434;box-sizing:border-box"></div><div class="t" style="left:2497px;top:515.0px;height:14px;line-height:14px;font-size:10px;color:#8a8a8a;">Reverse</div><div class="a" style="left:1754px;top:540.5px;width:14px;height:14px;background:#151515;border:1px solid #2a2a2a;box-sizing:border-box"></div><div class="t" style="left:1574px;width:300px;text-align:right;top:539.5px;height:15px;line-height:15px;font-size:11px;color:#8a8a8a;">Top Points</div><div class="a" style="left:1890px;top:537.0px;width:108px;height:21px;background:#2f2f2f;border-top:1px solid #333;box-sizing:border-box"></div><div class="t" style="left:1894px;top:540.0px;height:16px;line-height:16px;font-size:11.7px;color:#575757;font-family:'Liberation Mono',monospace">10</div><div class="a" style="left:2003px;top:544.5px;width:545px;height:4px;background:#2a2a2a;border-radius:2px"></div><div class="a" style="left:2003px;top:550.5px;width:1px;height:3px;background:#4a4a4a"></div><div class="a" style="left:2033px;top:550.5px;width:1px;height:3px;background:#4a4a4a"></div><div class="a" style="left:2063px;top:550.5px;width:1px;height:3px;background:#4a4a4a"></div><div class="a" style="left:2093px;top:550.5px;width:1px;height:3px;background:#4a4a4a"></div><div class="a" style="left:2123px;top:550.5px;width:1px;height:3px;background:#4a4a4a"></div><div class="a" style="left:2153px;top:550.5px;width:1px;height:3px;background:#4a4a4a"></div><div class="a" style="left:2183px;top:550.5px;width:1px;height:3px;background:#4a4a4a"></div><div class="a" style="left:2213px;top:550.5px;width:1px;height:3px;background:#4a4a4a"></div><div class="a" style="left:2243px;top:550.5px;width:1px;height:3px;background:#4a4a4a"></div><div class="a" style="left:2273px;top:550.5px;width:1px;height:3px;background:#4a4a4a"></div><div class="a" style="left:2304px;top:550.5px;width:1px;height:3px;background:#4a4a4a"></div><div class="a" style="left:2334px;top:550.5px;width:1px;height:3px;background:#4a4a4a"></div><div class="a" style="left:2364px;top:550.5px;width:1px;height:3px;background:#4a4a4a"></div><div class="a" style="left:2394px;top:550.5px;width:1px;height:3px;background:#4a4a4a"></div><div class="a" style="left:2424px;top:550.5px;width:1px;height:3px;background:#4a4a4a"></div><div class="a" style="left:2454px;top:550.5px;width:1px;height:3px;background:#4a4a4a"></div><div class="a" style="left:2484px;top:550.5px;width:1px;height:3px;background:#4a4a4a"></div><div class="a" style="left:2514px;top:550.5px;width:1px;height:3px;background:#4a4a4a"></div><div class="a" style="left:2241px;top:536.5px;width:7px;height:21px;background:#3a3a3a;border:1px solid #343434;box-sizing:border-box;border-radius:1px"></div><div class="a" style="left:1754px;top:565.5px;width:14px;height:14px;background:#151515;border:1px solid #2a2a2a;box-sizing:border-box"></div><div class="t" style="left:1574px;width:300px;text-align:right;top:564.5px;height:15px;line-height:15px;font-size:11px;color:#8a8a8a;">Bottom Seam</div><div class="a" style="left:1890px;top:562.0px;width:577px;height:21px;background:#2f2f2f;border-top:1px solid #333;box-sizing:border-box"></div><div class="t" style="left:1894px;top:565.0px;height:16px;line-height:16px;font-size:11.7px;color:#575757;font-family:'Liberation Mono',monospace">${OS}_bottom</div><div class="a" style="left:2476px;top:565.5px;width:14px;height:14px;background:#2e2e2e;border:1px solid #343434;box-sizing:border-box"></div><div class="t" style="left:2497px;top:565.0px;height:14px;line-height:14px;font-size:10px;color:#8a8a8a;">Reverse</div><div class="a" style="left:1754px;top:590.5px;width:14px;height:14px;background:#151515;border:1px solid #2a2a2a;box-sizing:border-box"></div><div class="t" style="left:1574px;width:300px;text-align:right;top:589.5px;height:15px;line-height:15px;font-size:11px;color:#8a8a8a;">Bottom Points</div><div class="a" style="left:1890px;top:587.0px;width:108px;height:21px;background:#2f2f2f;border-top:1px solid #333;box-sizing:border-box"></div><div class="t" style="left:1894px;top:590.0px;height:16px;line-height:16px;font-size:11.7px;color:#575757;font-family:'Liberation Mono',monospace">10</div><div class="a" style="left:2003px;top:594.5px;width:545px;height:4px;background:#2a2a2a;border-radius:2px"></div><div class="a" style="left:2003px;top:600.5px;width:1px;height:3px;background:#4a4a4a"></div><div class="a" style="left:2033px;top:600.5px;width:1px;height:3px;background:#4a4a4a"></div><div class="a" style="left:2063px;top:600.5px;width:1px;height:3px;background:#4a4a4a"></div><div class="a" style="left:2093px;top:600.5px;width:1px;height:3px;background:#4a4a4a"></div><div class="a" style="left:2123px;top:600.5px;width:1px;height:3px;background:#4a4a4a"></div><div class="a" style="left:2153px;top:600.5px;width:1px;height:3px;background:#4a4a4a"></div><div class="a" style="left:2183px;top:600.5px;width:1px;height:3px;background:#4a4a4a"></div><div class="a" style="left:2213px;top:600.5px;width:1px;height:3px;background:#4a4a4a"></div><div class="a" style="left:2243px;top:600.5px;width:1px;height:3px;background:#4a4a4a"></div><div class="a" style="left:2273px;top:600.5px;width:1px;height:3px;background:#4a4a4a"></div><div class="a" style="left:2304px;top:600.5px;width:1px;height:3px;background:#4a4a4a"></div><div class="a" style="left:2334px;top:600.5px;width:1px;height:3px;background:#4a4a4a"></div><div class="a" style="left:2364px;top:600.5px;width:1px;height:3px;background:#4a4a4a"></div><div class="a" style="left:2394px;top:600.5px;width:1px;height:3px;background:#4a4a4a"></div><div class="a" style="left:2424px;top:600.5px;width:1px;height:3px;background:#4a4a4a"></div><div class="a" style="left:2454px;top:600.5px;width:1px;height:3px;background:#4a4a4a"></div><div class="a" style="left:2484px;top:600.5px;width:1px;height:3px;background:#4a4a4a"></div><div class="a" style="left:2514px;top:600.5px;width:1px;height:3px;background:#4a4a4a"></div><div class="a" style="left:2241px;top:586.5px;width:7px;height:21px;background:#3a3a3a;border:1px solid #343434;box-sizing:border-box;border-radius:1px"></div><div class="a" style="left:1754px;top:615.5px;width:14px;height:14px;background:#151515;border:1px solid #2a2a2a;box-sizing:border-box"></div><div class="t" style="left:1574px;width:300px;text-align:right;top:614.5px;height:15px;line-height:15px;font-size:11px;color:#8a8a8a;">Interior Points</div><div class="a" style="left:1890px;top:612.0px;width:659px;height:21px;background:#2f2f2f;border-top:1px solid #333;box-sizing:border-box"></div><div class="t" style="left:1894px;top:615.0px;height:16px;line-height:16px;font-size:11.7px;color:#575757;font-family:'Liberation Mono',monospace">interior</div><svg style="left:1737px;top:645px" width="6" height="8"><path d="M6 0L0 4L6 8Z" fill="#888"/></svg><div class="a" style="left:1740px;top:678px;width:819px;height:2px;background:#2a2a2a"></div><div class="a" style="left:1743px;top:680px;width:816px;height:2px;background:#777"></div><div class="a" style="left:1740px;top:682px;width:819px;height:5px;background:#3b3b3b"></div><svg style="left:2118px;top:681px" width="8" height="5"><path d="M4 0L8 5H0Z" fill="#999"/></svg><svg style="left:2143px;top:682px" width="22" height="5"><rect x="1" y="1" width="1" height="1" fill="#999"/><rect x="1" y="3" width="1" height="1" fill="#999"/><rect x="4" y="1" width="1" height="1" fill="#999"/><rect x="4" y="3" width="1" height="1" fill="#999"/><rect x="7" y="1" width="1" height="1" fill="#999"/><rect x="7" y="3" width="1" height="1" fill="#999"/><rect x="10" y="1" width="1" height="1" fill="#999"/><rect x="10" y="3" width="1" height="1" fill="#999"/><rect x="13" y="1" width="1" height="1" fill="#999"/><rect x="13" y="3" width="1" height="1" fill="#999"/><rect x="16" y="1" width="1" height="1" fill="#999"/><rect x="16" y="3" width="1" height="1" fill="#999"/><rect x="19" y="1" width="1" height="1" fill="#999"/><rect x="19" y="3" width="1" height="1" fill="#999"/></svg><svg style="left:2177px;top:683px" width="8" height="5"><path d="M0 0H8L4 5Z" fill="#999"/></svg><div class="a" style="left:1740px;top:687px;width:819px;height:18px;background:#2c2c2c"></div><div class="a" style="left:1741px;top:687px;width:121px;height:18px;background:#464646"></div><div class="t" style="left:1747px;top:690.0px;height:14px;line-height:14px;font-size:10.1px;color:#d0d0d0;font-style:italic;">/obj/trousers_female</div><svg style="left:1851px;top:693px" width="6" height="6"><path d="M0.8 0.8L5.2 5.2M5.2 0.8L0.8 5.2" stroke="#ddd" stroke-width="1.5"/></svg><div class="a" style="left:1862px;top:687px;width:77px;height:18px;background:#2c2c2c;border-left:1px solid #151515;box-sizing:border-box"></div><div class="t" style="left:1869px;top:690.0px;height:14px;line-height:14px;font-size:10.1px;color:#cccccc;">Tree View</div><svg style="left:1928px;top:693px" width="6" height="6"><path d="M0.8 0.8L5.2 5.2M5.2 0.8L0.8 5.2" stroke="#ddd" stroke-width="1.5"/></svg><div class="a" style="left:1939px;top:687px;width:101px;height:18px;background:#2c2c2c;border-left:1px solid #151515;box-sizing:border-box"></div><div class="t" style="left:1946px;top:690.0px;height:14px;line-height:14px;font-size:10.1px;color:#cccccc;">Material Palette</div><svg style="left:2029px;top:693px" width="6" height="6"><path d="M0.8 0.8L5.2 5.2M5.2 0.8L0.8 5.2" stroke="#ddd" stroke-width="1.5"/></svg><div class="a" style="left:2040px;top:687px;width:94px;height:18px;background:#2c2c2c;border-left:1px solid #151515;box-sizing:border-box"></div><div class="t" style="left:2047px;top:690.0px;height:14px;line-height:14px;font-size:10.1px;color:#cccccc;">Asset Browser</div><svg style="left:2123px;top:693px" width="6" height="6"><path d="M0.8 0.8L5.2 5.2M5.2 0.8L0.8 5.2" stroke="#ddd" stroke-width="1.5"/></svg><svg style="left:2143px;top:691px" width="10" height="10"><path d="M5 0V10M0 5H10" stroke="#ddd" stroke-width="2"/></svg><div class="a" style="left:2526px;top:692px;width:11px;height:10px;background:linear-gradient(#e8e8e8,#bdbdbd)"></div><svg style="left:2547px;top:693px" width="8" height="6"><path d="M0 0H8L4 6Z" fill="#ddd"/></svg><div class="a" style="left:1740px;top:705px;width:819px;height:34px;background:#3d3d3d"></div><svg style="left:1746px;top:715px" width="18" height="17"><path d="M1 7L7 1V4H13V10H7V13Z" fill="#d8d8d8" stroke="#333" stroke-width="0.6"/><path d="M12 11L15 13.5L12 16Z" fill="#aaa"/></svg><svg style="left:1771px;top:715px" width="14" height="14"><path d="M13 7L7 1V4H1V10H7V13Z" fill="#6a6a6a"/></svg><div class="a" style="left:1796px;top:711px;width:710px;height:24px;background:#383838;border:1px solid #0e0e0e;box-sizing:border-box"></div><svg style="left:1803px;top:714px" width="17" height="18"><rect x="1" y="8" width="15" height="9" fill="#56646a"/><rect x="2" y="10" width="13" height="5" fill="#7a8a90" opacity="0.6"/><path d="M1 3L15 1L15.5 4L1.5 6Z" fill="#2a2a2a"/><path d="M1 7H16V8H1Z" fill="#2a2a2a"/><path d="M4 2.5H6M8 2H10M12 1.7H14M3 7.5H5M7 7.5H9M11 7.5H13" stroke="#ccc" stroke-width="1"/><rect x="1.5" y="3" width="3" height="3" fill="#9ab"/></svg><div class="t" style="left:1824px;top:715.0px;height:16px;line-height:16px;font-size:11.5px;color:#e0e0e0;">obj</div><svg style="left:1846px;top:712px" width="8" height="22"><path d="M1 0L6 11L1 22" stroke="#151515" stroke-width="1.2" fill="none"/></svg><svg style="left:1859px;top:713px" width="20" height="19"><defs><linearGradient id="tc1796705" x1="0" x2="1"><stop offset="0" stop-color="#2a5a98"/><stop offset="0.5" stop-color="#8ab8e8"/><stop offset="1" stop-color="#2a5a98"/></linearGradient><radialGradient id="ts1796705" cx="0.35" cy="0.35" r="0.7"><stop offset="0" stop-color="#ff9a8a"/><stop offset="0.5" stop-color="#e02818"/><stop offset="1" stop-color="#901008"/></radialGradient><linearGradient id="tk1796705" x1="0" x2="1"><stop offset="0" stop-color="#c8b010"/><stop offset="0.5" stop-color="#fff070"/><stop offset="1" stop-color="#d0b820"/></linearGradient></defs><rect x="1" y="2" width="7" height="12" fill="url(#tc1796705)"/><ellipse cx="4.5" cy="2.5" rx="3.5" ry="1.6" fill="#b8d8f8"/><circle cx="15" cy="9" r="4.3" fill="url(#ts1796705)"/><path d="M9.5 5L15 17H4Z" fill="url(#tk1796705)"/></svg><div class="t" style="left:1881px;top:715.0px;height:16px;line-height:16px;font-size:11.5px;color:#e0e0e0;">trousers_female</div><div class="a" style="left:2488px;top:712px;width:17px;height:22px;background:#333;border-left:1px solid #2a2a2a"></div><svg style="left:2492px;top:720px" width="9" height="6"><path d="M0 0H9L4.5 6Z" fill="#999"/></svg><svg style="left:2512px;top:715px" width="22" height="16"><path d="M2 8H9M9 3V13M9 5H15L17 3V13L15 11H9" stroke="#ddd" stroke-width="1.6" fill="#bbb"/></svg><svg style="left:2537px;top:713px" width="20" height="20"><circle cx="10" cy="10" r="8" fill="none" stroke="#4a78c0" stroke-width="1.5"/><circle cx="10" cy="10" r="4.5" fill="none" stroke="#4a78c0" stroke-width="1.5"/><circle cx="10" cy="10" r="1.5" fill="#4a78c0"/></svg><div class="a" style="left:1740px;top:739px;width:819px;height:1px;background:#151515"></div><div class="a" style="left:1740px;top:740px;width:819px;height:26px;background:#2e2e2e"></div><div class="a" style="left:1742px;top:741px;width:8px;height:24px;background:#3a3a3a;border-right:1px solid #151515"></div><svg style="left:1743px;top:742px" width="6" height="6"><path d="M3 0L6 6H0Z" fill="#111"/></svg><div class="t" style="left:1760px;top:744.5px;height:16px;line-height:16px;font-size:12px;color:#d8d8d8;">Add</div><div class="t" style="left:1796px;top:744.5px;height:16px;line-height:16px;font-size:12px;color:#d8d8d8;">Edit</div><div class="t" style="left:1831px;top:744.5px;height:16px;line-height:16px;font-size:12px;color:#d8d8d8;">Go</div><div class="t" style="left:1861px;top:744.5px;height:16px;line-height:16px;font-size:12px;color:#d8d8d8;">View</div><div class="t" style="left:1902px;top:744.5px;height:16px;line-height:16px;font-size:12px;color:#d8d8d8;">Tools</div><div class="t" style="left:1946px;top:744.5px;height:16px;line-height:16px;font-size:12px;color:#d8d8d8;">Layout</div><div class="t" style="left:1998px;top:744.5px;height:16px;line-height:16px;font-size:12px;color:#d8d8d8;">Help</div><svg style="left:2248px;top:744px" width="19" height="19" viewBox="0 0 19 19"><path d="M3 3L15 15M15 3L3 15" stroke="#ddd" stroke-width="2.2"/><circle cx="4" cy="4" r="2.5" fill="none" stroke="#ddd" stroke-width="1.5"/></svg><svg style="left:2272px;top:744px" width="19" height="19" viewBox="0 0 19 19"><path d="M4 2V15H14M4 6H14M4 10H14" stroke="#ccc" stroke-width="1.2" fill="none"/><rect x="12" y="4" width="3" height="3" fill="#ccc"/><rect x="12" y="8" width="3" height="3" fill="#ccc"/><rect x="12" y="13" width="3" height="3" fill="#ccc"/></svg><svg style="left:2296px;top:744px" width="19" height="19" viewBox="0 0 19 19"><rect x="3" y="2" width="13" height="14" fill="#ddd"/><path d="M3 5H16M3 8H16M3 11H16M3 14H16" stroke="#888" stroke-width="1"/></svg><svg style="left:2336px;top:744px" width="19" height="19" viewBox="0 0 19 19"><rect x="3" y="3" width="13" height="13" fill="#eee"/><rect x="4" y="4" width="3" height="3" fill="#c02020"/><rect x="8" y="4" width="3" height="3" fill="#e07020"/><rect x="12" y="4" width="3" height="3" fill="#e0c020"/><rect x="4" y="8" width="3" height="3" fill="#2040a0"/><rect x="8" y="8" width="3" height="3" fill="#40b040"/><rect x="12" y="8" width="3" height="3" fill="#60a0e0"/><rect x="4" y="12" width="3" height="3" fill="#111"/><rect x="8" y="12" width="3" height="3" fill="#888"/><rect x="12" y="12" width="3" height="3" fill="#ccc"/></svg><svg style="left:2361px;top:744px" width="19" height="19" viewBox="0 0 19 19"><rect x="3" y="3" width="13" height="13" fill="#333" stroke="#aaa" stroke-width="1"/><path d="M5 6H8M11 6H14M5 10H8M11 10H14M5 13H8M11 13H14" stroke="#ccc" stroke-width="1.3"/></svg><svg style="left:2401px;top:744px" width="19" height="19" viewBox="0 0 19 19"><rect x="3" y="3" width="13" height="13" fill="#bbb" stroke="#777" stroke-width="1"/><rect x="5" y="6" width="5" height="3" fill="#eee" stroke="#333" stroke-width="0.7"/><rect x="9" y="11" width="5" height="3" fill="#eee" stroke="#333" stroke-width="0.7"/></svg><svg style="left:2425px;top:744px" width="19" height="19" viewBox="0 0 19 19"><path d="M3 3H16V13L13 16H3Z" fill="#f0e070" stroke="#908020" stroke-width="0.8"/><path d="M5 6H14M5 9H12M5 12H10" stroke="#333" stroke-width="1.1"/></svg><svg style="left:2449px;top:744px" width="19" height="19" viewBox="0 0 19 19"><rect x="2" y="3" width="14" height="12" fill="#5a9ad8" stroke="#ccc" stroke-width="0.8"/><path d="M3 14L8 9L11 12L15 8V14Z" fill="#8ac"/><circle cx="6" cy="6" r="1.5" fill="#f0d020"/><path d="M13 12V18M10 15H16" stroke="#fff" stroke-width="1.6"/></svg><svg style="left:2473px;top:744px" width="19" height="19" viewBox="0 0 19 19"><path d="M3 7L10 3L17 7V15H3Z" fill="#d8a050"/><path d="M3 7H17" stroke="#a06020" stroke-width="1"/><path d="M3 10H17" stroke="#f0c080" stroke-width="0.8"/></svg><svg style="left:2514px;top:744px" width="19" height="19" viewBox="0 0 19 19"><circle cx="8" cy="8" r="5" fill="#3a444a" stroke="#ddd" stroke-width="1.6"/><path d="M11.5 11.5L16 16" stroke="#ddd" stroke-width="2.2"/></svg><svg style="left:2538px;top:744px" width="19" height="19" viewBox="0 0 19 19"><rect x="1" y="3" width="17" height="13" fill="#eee"/><path d="M2 9C6 4 13 4 17 9C13 14 6 14 2 9Z" fill="#ddd" stroke="#222" stroke-width="0.8"/><circle cx="9.5" cy="9" r="2.5" fill="#111"/></svg><div class="a" style="left:1740px;top:766px;width:819px;height:1px;background:#111"></div><div class="a" style="left:1740px;top:767px;width:819px;height:512px;background:#2e2e2e"></div><div class="t" style="left:1949.0px;width:400px;text-align:center;top:777.5px;height:25px;line-height:25px;font-size:18.3px;color:#4a4a4a;">CONFIDENTIAL H18.5.26</div><div class="t" style="left:2248px;width:300px;text-align:right;top:778.5px;height:33px;line-height:33px;font-size:24.2px;color:#575757;"><b>Geometry</b></div><svg style="left:1985px;top:975px" width="145" height="135" viewBox="0 0 145 135">
<circle cx="72" cy="67" r="65" fill="#46689e"/>
<circle cx="72" cy="67" r="44.5" fill="#9478cc"/>
<rect x="5.5" y="46" width="133" height="43" rx="7" fill="#d8b0b0"/>
<rect x="7" y="47.5" width="130" height="40" rx="6" fill="#111"/>
<rect x="8.2" y="48.7" width="127.6" height="37.6" rx="5" fill="#cfcfcf"/>
<path d="M122 48.7H130.8A5 5 0 0 1 135.8 53.7V81.3A5 5 0 0 1 130.8 86.3H118Z" fill="#00acee"/>
<path d="M22 48.7L18 86.3M40 48.7L36 86.3M100 48.7L96 86.3M122 48.7L118 86.3" stroke="#777" stroke-width="0.8"/>
<path d="M59 70L68 61L81 70L70 81Z" fill="#6ea0d8"/><path d="M70 81L81 70L81.5 71.5L70.5 82Z" fill="#4a78b8"/><path d="M57.5 69L66.5 60" stroke="#a8cdf0" stroke-width="4.5" stroke-linecap="round"/><circle cx="57.5" cy="70" r="1.8" fill="#d8a040"/>
<circle cx="72" cy="98" r="6" fill="#bdbdbd"/>
</svg><div class="t" style="left:2135px;top:1024.0px;height:36px;line-height:36px;font-size:27.7px;color:#d4d4d4;">planarpatch1</div><svg style="left:2141px;top:1062px" width="17" height="19"><path d="M4 8V5.5C4 1.5 13 1.5 13 5.5V8" stroke="#6a7070" stroke-width="2.2" fill="none"/><rect x="2" y="8" width="13" height="10" rx="1" fill="#6a7070"/></svg><div class="a" style="left:0px;top:1279px;width:2559px;height:70px;background:#2e2e2e"></div><div class="a" style="left:0px;top:1279px;width:2559px;height:1px;background:#151515"></div><div class="a" style="left:10px;top:1280px;width:2549px;height:1px;background:#5a5a5a"></div><div class="a" style="left:0px;top:1279px;width:1px;height:98px;background:#000"></div><div class="a" style="left:1px;top:1280px;width:8px;height:70px;background:#3a3a3a"></div><div class="a" style="left:9px;top:1280px;width:1px;height:70px;background:#151515"></div><svg style="left:2px;top:1342px" width="6" height="5"><path d="M0 0H6L3 5Z" fill="#111"/></svg><div class="a" style="left:15px;top:1288px;width:27px;height:28px;background:linear-gradient(#424242,#363636);border:1px solid #232323;box-sizing:border-box"></div><svg style="left:15px;top:1288px" width="27" height="28" viewBox="0 0 27 28"><rect x="5" y="8" width="2.5" height="12" fill="#dcdcdc"/><path d="M8 14L14 8V20ZM14 14L20 8V20Z" fill="#dcdcdc"/></svg><div class="a" style="left:42px;top:1288px;width:27px;height:28px;background:linear-gradient(#424242,#363636);border:1px solid #232323;box-sizing:border-box"></div><svg style="left:42px;top:1288px" width="27" height="28" viewBox="0 0 27 28"><path d="M8 14L17 7V21Z" fill="#dcdcdc"/></svg><div class="a" style="left:69px;top:1288px;width:27px;height:28px;background:linear-gradient(#9aa7ae,#7f8c93);border:1px solid #232323;box-sizing:border-box"></div><svg style="left:69px;top:1288px" width="27" height="28" viewBox="0 0 27 28"><rect x="7.5" y="7.5" width="12" height="13" fill="#e4e4e4" stroke="#666" stroke-width="0.8"/></svg><div class="a" style="left:96px;top:1288px;width:27px;height:28px;background:linear-gradient(#424242,#363636);border:1px solid #232323;box-sizing:border-box"></div><svg style="left:96px;top:1288px" width="27" height="28" viewBox="0 0 27 28"><path d="M10 7L19 14L10 21Z" fill="#dcdcdc"/></svg><div class="a" style="left:123px;top:1288px;width:27px;height:28px;background:linear-gradient(#424242,#363636);border:1px solid #232323;box-sizing:border-box"></div><svg style="left:123px;top:1288px" width="27" height="28" viewBox="0 0 27 28"><path d="M4 8L10 14L4 20ZM10 8L16 14L10 20Z" fill="#dcdcdc"/><rect x="17" y="8" width="2.5" height="12" fill="#dcdcdc"/></svg><div class="a" style="left:154px;top:1288px;width:46px;height:27px;background:#121212"></div><div class="t" style="left:157px;top:1293.5px;height:16px;line-height:16px;font-size:11.5px;color:#e8e8e8;font-family:'Liberation Sans',sans-serif">169</div><div class="a" style="left:202px;top:1288px;width:14px;height:28px;background:linear-gradient(#424242,#363636);border:1px solid #232323;box-sizing:border-box"></div><svg style="left:202px;top:1288px" width="14" height="28" viewBox="0 0 14 28"><path d="M2 14L8 9V19Z" fill="#dcdcdc"/><rect x="9" y="9" width="2" height="10" fill="#dcdcdc"/></svg><div class="a" style="left:216px;top:1288px;width:14px;height:28px;background:linear-gradient(#424242,#363636);border:1px solid #232323;box-sizing:border-box"></div><svg style="left:216px;top:1288px" width="14" height="28" viewBox="0 0 14 28"><rect x="3" y="9" width="2" height="10" fill="#dcdcdc"/><path d="M6 9L12 14L6 19Z" fill="#dcdcdc"/></svg><div class="a" style="left:15px;top:1323px;width:27px;height:24px;background:linear-gradient(#424242,#363636);border:1px solid #232323;box-sizing:border-box"></div><svg style="left:15px;top:1323px" width="27" height="24" viewBox="0 0 27 24"><rect x="7" y="5" width="12" height="12" fill="#ececec" stroke="#777" stroke-width="0.8"/><path d="M7 7H19" stroke="#999" stroke-width="1.5"/><path d="M14 12V21L16 19L18 22L19 21L17.5 18H20Z" fill="#111" stroke="#eee" stroke-width="0.6"/></svg><div class="a" style="left:42px;top:1323px;width:27px;height:24px;background:linear-gradient(#424242,#363636);border:1px solid #232323;box-sizing:border-box"></div><svg style="left:42px;top:1323px" width="27" height="24" viewBox="0 0 27 24"><path d="M6 9H9L14 4V20L9 15H6Z" fill="#556" stroke="#ccc" stroke-width="0.8"/><ellipse cx="14" cy="12" rx="4" ry="8" fill="none" stroke="#ccc" stroke-width="1"/></svg><div class="a" style="left:69px;top:1323px;width:27px;height:24px;background:linear-gradient(#424242,#363636);border:1px solid #232323;box-sizing:border-box"></div><svg style="left:69px;top:1323px" width="27" height="24" viewBox="0 0 27 24"><path d="M6 16H20C20 8 12 8 8 11" stroke="#eee" stroke-width="2" fill="none"/><path d="M5 9L9 7V13Z" fill="#eee"/><path d="M18 20H23L20.5 23Z" fill="#888"/></svg><div class="a" style="left:96px;top:1323px;width:27px;height:24px;background:linear-gradient(#9aa7ae,#7f8c93);border:1px solid #232323;box-sizing:border-box"></div><svg style="left:96px;top:1323px" width="27" height="24" viewBox="0 0 27 24"><circle cx="13.5" cy="12" r="7.5" fill="none" stroke="#1a1a1a" stroke-width="1.8"/><path d="M13.5 7V17M8.5 12H18.5" stroke="#1a1a1a" stroke-width="1.4"/></svg><div class="a" style="left:127px;top:1323px;width:46px;height:24px;background:#313131;border:1px solid #262626;box-sizing:border-box"></div><div class="a" style="left:150px;top:1323px;width:1px;height:24px;background:#262626"></div><svg style="left:135px;top:1329px" width="10" height="11"><rect x="0" y="1" width="2" height="9" fill="#3f6a3f"/><path d="M9 1L3 5.5L9 10Z" fill="#555"/></svg><svg style="left:157px;top:1329px" width="10" height="11"><path d="M1 1L7 5.5L1 10Z" fill="#555"/><rect x="8" y="1" width="2" height="9" fill="#3f6a3f"/></svg><svg style="left:0;top:0" width="2559" height="1377"><path d="M235.2 1303.5H2308" stroke="#c8c8c8" stroke-width="1"/><path d="M235.2 1296V1311M241.3 1299V1307M247.4 1299V1307M253.5 1299V1307M259.6 1299V1307M265.7 1299V1307M271.8 1299V1307M277.9 1299V1307M284.0 1299V1307M290.1 1299V1307M296.2 1299V1307M302.3 1299V1307M308.4 1299V1307M314.5 1299V1307M320.6 1299V1307M326.7 1299V1307M332.8 1299V1307M338.9 1299V1307M345.0 1299V1307M351.1 1299V1307M357.2 1299V1307M363.3 1299V1307M369.4 1299V1307M375.5 1296V1311M381.6 1299V1307M387.7 1299V1307M393.8 1299V1307M399.9 1299V1307M406.0 1299V1307M412.1 1299V1307M418.2 1299V1307M424.3 1299V1307M430.4 1299V1307M436.5 1299V1307M442.6 1299V1307M448.7 1299V1307M454.8 1299V1307M460.9 1299V1307M467.0 1299V1307M473.1 1299V1307M479.2 1299V1307M485.3 1299V1307M491.4 1299V1307M497.5 1299V1307M503.6 1299V1307M509.7 1299V1307M515.8 1299V1307M521.9 1296V1311M528.0 1299V1307M534.1 1299V1307M540.2 1299V1307M546.3 1299V1307M552.4 1299V1307M558.5 1299V1307M564.6 1299V1307M570.7 1299V1307M576.8 1299V1307M582.9 1299V1307M589.0 1299V1307M595.1 1299V1307M601.2 1299V1307M607.3 1299V1307M613.4 1299V1307M619.5 1299V1307M625.6 1299V1307M631.7 1299V1307M637.8 1299V1307M643.9 1299V1307M650.0 1299V1307M656.1 1299V1307M662.2 1299V1307M668.3 1296V1311M674.4 1299V1307M680.5 1299V1307M686.6 1299V1307M692.7 1299V1307M698.8 1299V1307M704.9 1299V1307M711.0 1299V1307M717.1 1299V1307M723.2 1299V1307M729.3 1299V1307M735.4 1299V1307M741.5 1299V1307M747.5 1299V1307M753.6 1299V1307M759.7 1299V1307M765.8 1299V1307M771.9 1299V1307M778.0 1299V1307M784.1 1299V1307M790.2 1299V1307M796.3 1299V1307M802.4 1299V1307M808.5 1299V1307M814.6 1296V1311M820.7 1299V1307M826.8 1299V1307M832.9 1299V1307M839.0 1299V1307M845.1 1299V1307M851.2 1299V1307M857.3 1299V1307M863.4 1299V1307M869.5 1299V1307M875.6 1299V1307M881.7 1299V1307M887.8 1299V1307M893.9 1299V1307M900.0 1299V1307M906.1 1299V1307M912.2 1299V1307M918.3 1299V1307M924.4 1299V1307M930.5 1299V1307M936.6 1299V1307M942.7 1299V1307M948.8 1299V1307M954.9 1299V1307M961.0 1296V1311M967.1 1299V1307M973.2 1299V1307M979.3 1299V1307M985.4 1299V1307M991.5 1299V1307M997.6 1299V1307M1003.7 1299V1307M1009.8 1299V1307M1015.9 1299V1307M1022.0 1299V1307M1028.1 1299V1307M1034.2 1299V1307M1040.3 1299V1307M1046.4 1299V1307M1052.5 1299V1307M1058.6 1299V1307M1064.7 1299V1307M1070.8 1299V1307M1076.9 1299V1307M1083.0 1299V1307M1089.1 1299V1307M1095.2 1299V1307M1101.3 1299V1307M1107.4 1296V1311M1113.5 1299V1307M1119.6 1299V1307M1125.7 1299V1307M1131.8 1299V1307M1137.9 1299V1307M1144.0 1299V1307M1150.1 1299V1307M1156.2 1299V1307M1162.3 1299V1307M1168.4 1299V1307M1174.5 1299V1307M1180.6 1299V1307M1186.7 1299V1307M1192.8 1299V1307M1198.9 1299V1307M1205.0 1299V1307M1211.1 1299V1307M1217.2 1299V1307M1223.3 1299V1307M1229.4 1299V1307M1235.5 1299V1307M1241.6 1299V1307M1247.7 1299V1307M1253.8 1296V1311M1259.9 1299V1307M1266.0 1299V1307M1272.1 1299V1307M1278.2 1299V1307M1284.3 1299V1307M1290.4 1299V1307M1296.5 1299V1307M1302.6 1299V1307M1308.7 1299V1307M1314.8 1299V1307M1320.9 1299V1307M1327.0 1299V1307M1333.1 1299V1307M1339.2 1299V1307M1345.3 1299V1307M1351.4 1299V1307M1357.5 1299V1307M1363.6 1299V1307M1369.7 1299V1307M1375.8 1299V1307M1381.9 1299V1307M1388.0 1299V1307M1394.1 1299V1307M1400.2 1296V1311M1406.3 1299V1307M1412.4 1299V1307M1418.5 1299V1307M1424.6 1299V1307M1430.7 1299V1307M1436.8 1299V1307M1442.9 1299V1307M1449.0 1299V1307M1455.1 1299V1307M1461.2 1299V1307M1467.3 1299V1307M1473.4 1299V1307M1479.5 1299V1307M1485.6 1299V1307M1491.7 1299V1307M1497.8 1299V1307M1503.9 1299V1307M1510.0 1299V1307M1516.1 1299V1307M1522.2 1299V1307M1528.3 1299V1307M1534.4 1299V1307M1540.5 1299V1307M1546.6 1296V1311M1552.7 1299V1307M1558.8 1299V1307M1564.9 1299V1307M1571.0 1299V1307M1577.1 1299V1307M1583.2 1299V1307M1589.3 1299V1307M1595.4 1299V1307M1601.5 1299V1307M1607.6 1299V1307M1613.7 1299V1307M1619.8 1299V1307M1625.9 1299V1307M1632.0 1299V1307M1638.1 1299V1307M1644.2 1299V1307M1650.3 1299V1307M1656.4 1299V1307M1662.5 1299V1307M1668.6 1299V1307M1674.7 1299V1307M1680.8 1299V1307M1686.9 1299V1307M1693.0 1296V1311M1699.1 1299V1307M1705.2 1299V1307M1711.3 1299V1307M1717.4 1299V1307M1723.5 1299V1307M1729.6 1299V1307M1735.7 1299V1307M1741.8 1299V1307M1747.9 1299V1307M1754.0 1299V1307M1760.1 1299V1307M1766.1 1299V1307M1772.2 1299V1307M1778.3 1299V1307M1784.4 1299V1307M1790.5 1299V1307M1796.6 1299V1307M1802.7 1299V1307M1808.8 1299V1307M1814.9 1299V1307M1821.0 1299V1307M1827.1 1299V1307M1833.2 1299V1307M1839.3 1296V1311M1845.4 1299V1307M1851.5 1299V1307M1857.6 1299V1307M1863.7 1299V1307M1869.8 1299V1307M1875.9 1299V1307M1882.0 1299V1307M1888.1 1299V1307M1894.2 1299V1307M1900.3 1299V1307M1906.4 1299V1307M1912.5 1299V1307M1918.6 1299V1307M1924.7 1299V1307M1930.8 1299V1307M1936.9 1299V1307M1943.0 1299V1307M1949.1 1299V1307M1955.2 1299V1307M1961.3 1299V1307M1967.4 1299V1307M1973.5 1299V1307M1979.6 1299V1307M1985.7 1296V1311M1991.8 1299V1307M1997.9 1299V1307M2004.0 1299V1307M2010.1 1299V1307M2016.2 1299V1307M2022.3 1299V1307M2028.4 1299V1307M2034.5 1299V1307M2040.6 1299V1307M2046.7 1299V1307M2052.8 1299V1307M2058.9 1299V1307M2065.0 1299V1307M2071.1 1299V1307M2077.2 1299V1307M2083.3 1299V1307M2089.4 1299V1307M2095.5 1299V1307M2101.6 1299V1307M2107.7 1299V1307M2113.8 1299V1307M2119.9 1299V1307M2126.0 1299V1307M2132.1 1296V1311M2138.2 1299V1307M2144.3 1299V1307M2150.4 1299V1307M2156.5 1299V1307M2162.6 1299V1307M2168.7 1299V1307M2174.8 1299V1307M2180.9 1299V1307M2187.0 1299V1307M2193.1 1299V1307M2199.2 1299V1307M2205.3 1299V1307M2211.4 1299V1307M2217.5 1299V1307M2223.6 1299V1307M2229.7 1299V1307M2235.8 1299V1307M2241.9 1299V1307M2248.0 1299V1307M2254.1 1299V1307M2260.2 1299V1307M2266.3 1299V1307M2272.4 1299V1307M2278.5 1296V1311M2284.6 1299V1307M2290.7 1299V1307M2296.8 1299V1307M2302.9 1299V1307" stroke="#c8c8c8" stroke-width="1"/></svg><div class="t" style="left:236.2px;top:1280.0px;height:14px;line-height:14px;font-size:10px;color:#a8a8a8;">1</div><div class="t" style="left:376.4862px;top:1280.0px;height:14px;line-height:14px;font-size:10px;color:#a8a8a8;">24</div><div class="t" style="left:522.8718px;top:1280.0px;height:14px;line-height:14px;font-size:10px;color:#a8a8a8;">48</div><div class="t" style="left:669.2574px;top:1280.0px;height:14px;line-height:14px;font-size:10px;color:#a8a8a8;">72</div><div class="t" style="left:815.643px;top:1280.0px;height:14px;line-height:14px;font-size:10px;color:#a8a8a8;">96</div><div class="t" style="left:962.0286000000001px;top:1280.0px;height:14px;line-height:14px;font-size:10px;color:#a8a8a8;">120</div><div class="t" style="left:1108.4142px;top:1280.0px;height:14px;line-height:14px;font-size:10px;color:#a8a8a8;">144</div><div class="t" style="left:1254.7998px;top:1280.0px;height:14px;line-height:14px;font-size:10px;color:#a8a8a8;">168</div><div class="t" style="left:1401.1854px;top:1280.0px;height:14px;line-height:14px;font-size:10px;color:#a8a8a8;">192</div><div class="t" style="left:1547.5710000000001px;top:1280.0px;height:14px;line-height:14px;font-size:10px;color:#a8a8a8;">216</div><div class="t" style="left:1693.9566px;top:1280.0px;height:14px;line-height:14px;font-size:10px;color:#a8a8a8;">240</div><div class="t" style="left:1840.3422px;top:1280.0px;height:14px;line-height:14px;font-size:10px;color:#a8a8a8;">264</div><div class="t" style="left:1986.7278000000001px;top:1280.0px;height:14px;line-height:14px;font-size:10px;color:#a8a8a8;">288</div><div class="t" style="left:2133.1134px;top:1280.0px;height:14px;line-height:14px;font-size:10px;color:#a8a8a8;">312</div><div class="t" style="left:2279.499px;top:1280.0px;height:14px;line-height:14px;font-size:10px;color:#a8a8a8;">336</div><svg style="left:1246px;top:1282px" width="27" height="24"><path d="M0.5 0.5H26.5V17.5H16L13.5 20.5L11 17.5H0.5Z" fill="#000" stroke="#e0e0e0" stroke-width="1"/></svg><div class="t" style="left:1244.5px;width:30px;text-align:center;top:1283.5px;height:15px;line-height:15px;font-size:11px;color:#ffffff;">169</div><div class="a" style="left:236px;top:1325px;width:42px;height:20px;background:#151515"></div><div class="a" style="left:280px;top:1325px;width:43px;height:20px;background:#151515"></div><div class="t" style="left:240px;top:1327.5px;height:16px;line-height:16px;font-size:11.5px;color:#e8e8e8;font-family:'Liberation Mono',monospace">1</div><div class="t" style="left:284px;top:1327.5px;height:16px;line-height:16px;font-size:11.5px;color:#e8e8e8;font-family:'Liberation Mono',monospace">1</div><svg style="left:325px;top:1328px" width="8" height="14"><path d="M1 0L7 7L1 14Z" fill="#aaa"/></svg><div class="a" style="left:330px;top:1333px;width:1880px;height:3px;background:#7a7a7a"></div><svg style="left:2207px;top:1328px" width="8" height="14"><path d="M7 0L1 7L7 14Z" fill="#aaa"/></svg><div class="a" style="left:2221px;top:1325px;width:41px;height:20px;background:#151515"></div><div class="a" style="left:2266px;top:1325px;width:41px;height:20px;background:#151515"></div><div class="t" style="left:2225px;top:1327.5px;height:16px;line-height:16px;font-size:11.5px;color:#e8e8e8;font-family:'Liberation Mono',monospace">340</div><div class="t" style="left:2270px;top:1327.5px;height:16px;line-height:16px;font-size:11.5px;color:#e8e8e8;font-family:'Liberation Mono',monospace">340</div><svg style="left:2311px;top:1294px" width="56" height="42"><circle cx="20" cy="20.5" r="19" fill="#2c2c2c" stroke="#232323" stroke-width="1"/><circle cx="23" cy="15" r="3.6" fill="none" stroke="#555" stroke-width="2"/><path d="M20.5 17.5L14 24M16 22L18 24M14 24L16 26" stroke="#555" stroke-width="2"/><rect x="38" y="9" width="16" height="21" fill="#333" stroke="#262626"/><path d="M42 16H50L46 21Z" fill="#999"/></svg><div class="a" style="left:2373px;top:1289px;width:23px;height:23px;background:#3e3e3e;border:1px solid #262626;box-sizing:border-box"></div><svg style="left:2376px;top:1292px" width="18" height="18"><rect x="2" y="2" width="12" height="12" fill="#eee"/><rect x="2" y="6" width="2" height="2" fill="#d02020"/><rect x="2" y="9" width="2" height="2" fill="#20a020"/><rect x="2" y="12" width="2" height="2" fill="#2040d0"/><path d="M6 6C8 3 12 3 13 6M13 10C11 13 7 13 6 10" stroke="#333" stroke-width="1.5" fill="none"/><path d="M14 12L17 14.5L14 17Z" fill="#aaa"/></svg><div class="a" style="left:2373px;top:1317px;width:23px;height:23px;background:#3e3e3e;border:1px solid #262626;box-sizing:border-box"></div><svg style="left:2376px;top:1320px" width="18" height="18"><rect x="1" y="1" width="16" height="16" fill="#111"/><path d="M2 10C5 10 6 4 9 4S13 16 16 16" stroke="#3a78d0" stroke-width="1.3" fill="none"/><path d="M2 10H16" stroke="#e0a030" stroke-width="1.2"/></svg><div class="a" style="left:2402px;top:1289px;width:152px;height:23px;background:linear-gradient(#484848,#3c3c3c);border:1px solid #262626;box-sizing:border-box"></div><div class="t" style="left:2398.0px;width:140px;text-align:center;top:1293.0px;height:15px;line-height:15px;font-size:10.8px;color:#d8d8d8;">0 keys, 0/0 channels</div><svg style="left:2540px;top:1296px" width="10" height="8"><path d="M5 0L10 8H0Z" fill="#999"/></svg><div class="a" style="left:2400px;top:1319px;width:152px;height:22px;background:linear-gradient(#484848,#3c3c3c);border:1px solid #262626;box-sizing:border-box"></div><div class="a" style="left:2530px;top:1319px;width:22px;height:22px;background:#3a3a3a;border:1px solid #262626;box-sizing:border-box"></div><div class="t" style="left:2395.0px;width:120px;text-align:center;top:1323.0px;height:14px;line-height:14px;font-size:10.7px;color:#d8d8d8;">Key All Channels</div><svg style="left:2537px;top:1323px" width="8" height="14"><path d="M4 0L8 5.5H0ZM4 14L8 8.5H0Z" fill="#999"/></svg><div class="a" style="left:0px;top:1349px;width:2559px;height:2px;background:#151515"></div><div class="a" style="left:1px;top:1351px;width:2558px;height:25px;background:#1b1b1b"></div><div class="a" style="left:0px;top:1376px;width:2559px;height:1px;background:#d8d8d8"></div><div class="a" style="left:2260px;top:1351px;width:26px;height:25px;background:#2a2a2a"></div><svg style="left:2263px;top:1354px" width="22" height="20"><path d="M3 10C2 5 7 2 11 3C15 2 19 5 18 10C19 13 16 15 13 14L10 15C6 15 3 13 3 10Z" fill="#d8d8d8"/><path d="M8 6C9 8 8 10 10 11M13 5C12 8 14 9 15 11" stroke="#999" stroke-width="0.7" fill="none"/><path d="M17 14L21 17L17 20Z" fill="#888"/></svg><div class="a" style="left:2286px;top:1351px;width:128px;height:25px;background:#333"></div><div class="a" style="left:2390px;top:1351px;width:24px;height:25px;background:#2c2c2c"></div><div class="t" style="left:2302px;top:1355.5px;height:16px;line-height:16px;font-size:12.1px;color:#d8d8d8;">/obj/animation...</div><svg style="left:2398px;top:1356px" width="8" height="14"><path d="M4 0L8 5.5H0ZM4 14L8 8.5H0Z" fill="#999"/></svg><div class="a" style="left:2414px;top:1351px;width:28px;height:25px;background:#262626"></div><svg style="left:2419px;top:1354px" width="18" height="18"><path d="M3 8C4 4 8 2 12 4L14 2V8H8L10 6C8 5 6 6 5 8ZM15 10C14 14 10 16 6 14L4 16V10H10L8 12C10 13 12 12 13 10Z" fill="#4a4a4a"/></svg><div class="a" style="left:2442px;top:1351px;width:117px;height:25px;background:#333"></div><div class="a" style="left:2535px;top:1351px;width:24px;height:25px;background:#2c2c2c"></div><div class="t" style="left:2458px;top:1356.0px;height:15px;line-height:15px;font-size:11.1px;color:#d8d8d8;">Auto Update</div><svg style="left:2543px;top:1356px" width="8" height="14"><path d="M4 0L8 5.5H0ZM4 14L8 8.5H0Z" fill="#999"/></svg>
</div></body></html>
